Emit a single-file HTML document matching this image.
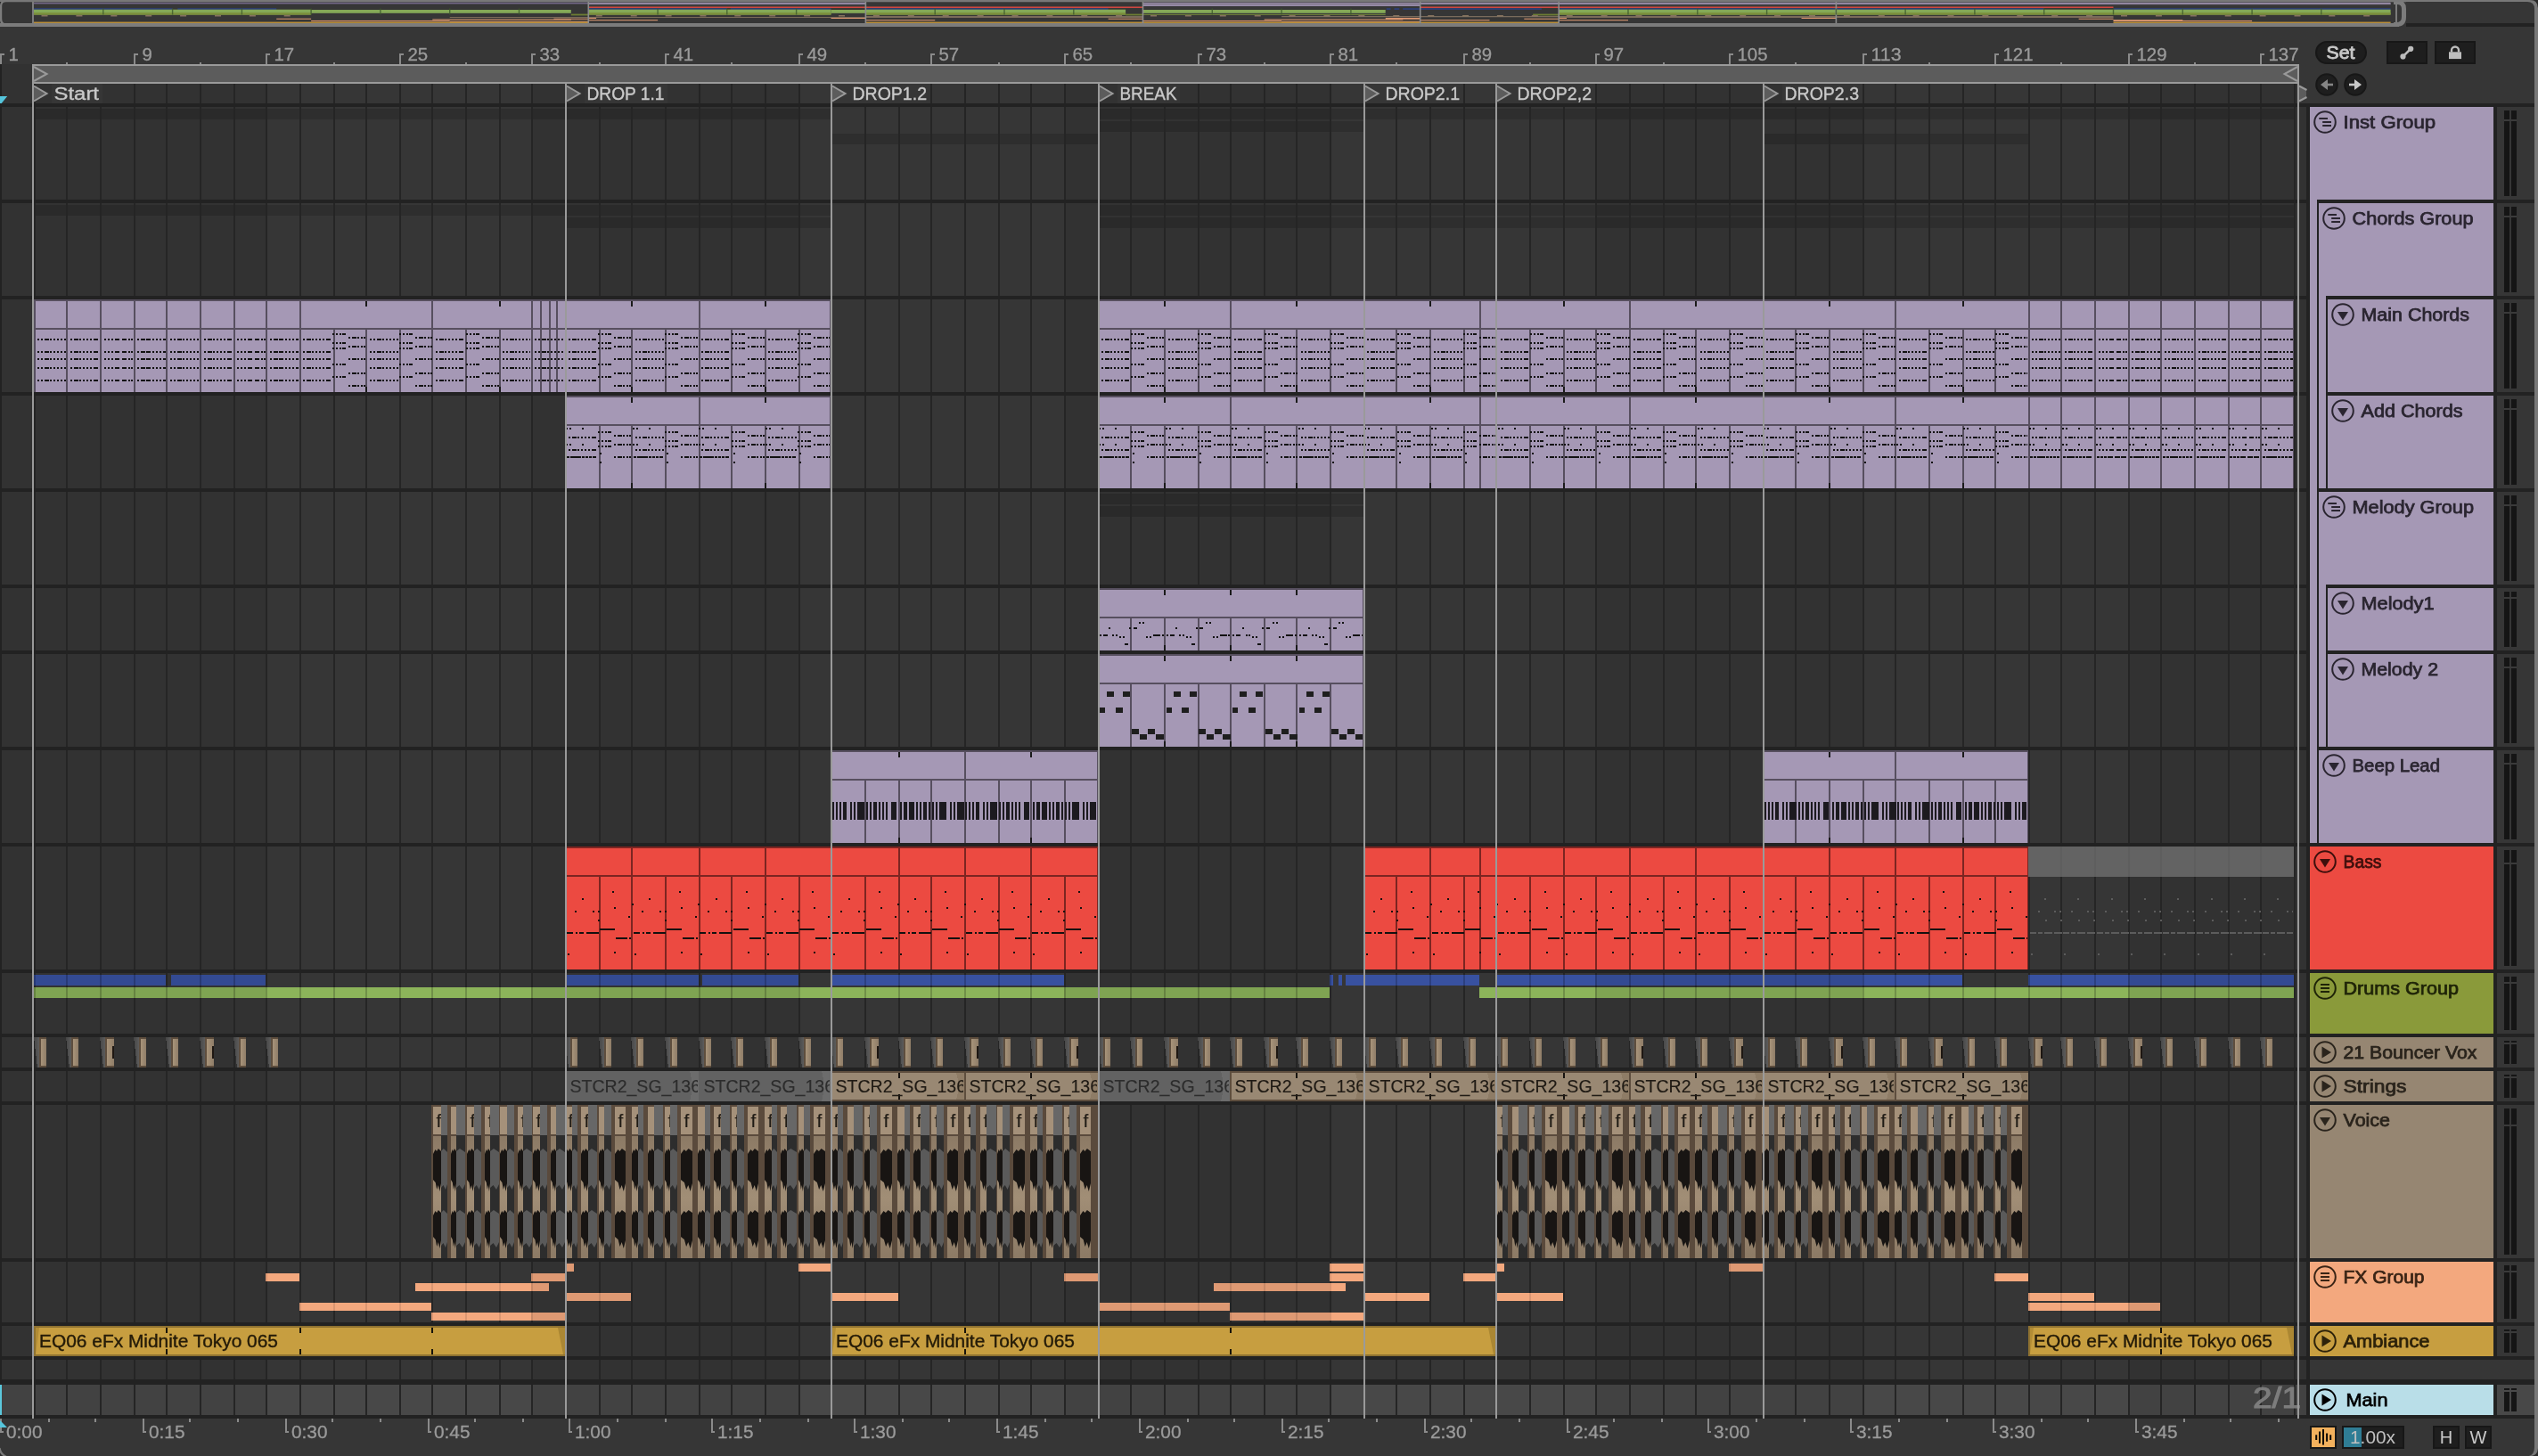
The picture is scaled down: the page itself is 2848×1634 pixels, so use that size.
<!DOCTYPE html>
<html><head><meta charset="utf-8"><title>Arrangement</title>
<style>html,body{margin:0;padding:0;background:#363636;overflow:hidden}svg{display:block;will-change:transform}text{font-family:"Liberation Sans",sans-serif}</style></head><body>
<svg width="2848" height="1634" viewBox="0 0 2848 1634" shape-rendering="crispEdges">
<rect x="0" y="0" width="2848" height="1634" fill="#363636"/>
<rect x="0" y="72" width="2592" height="1520" fill="#323232"/>
<rect x="0" y="72" width="2" height="1520" fill="#222222"/>
<rect x="2580" y="72" width="12" height="48" fill="#363636"/>
<rect x="298" y="94" width="298" height="1498" fill="#363636"/>
<rect x="896" y="94" width="298" height="1498" fill="#363636"/>
<rect x="1492" y="94" width="298" height="1498" fill="#363636"/>
<rect x="2090" y="94" width="298" height="1498" fill="#363636"/>
<rect x="2" y="1554" width="2586" height="34" fill="#424242"/>
<rect x="298" y="1554" width="298" height="34" fill="#484848"/>
<rect x="896" y="1554" width="298" height="34" fill="#484848"/>
<rect x="1492" y="1554" width="298" height="34" fill="#484848"/>
<rect x="2090" y="1554" width="298" height="34" fill="#484848"/>
<rect x="2802" y="1554" width="42" height="34" fill="#484848"/>
<rect x="0" y="116" width="2844" height="4" fill="#222222"/>
<rect x="0" y="224" width="2844" height="4" fill="#222222"/>
<rect x="0" y="332" width="2844" height="4" fill="#222222"/>
<rect x="0" y="440" width="2844" height="4" fill="#222222"/>
<rect x="0" y="548" width="2844" height="4" fill="#222222"/>
<rect x="0" y="656" width="2844" height="4" fill="#222222"/>
<rect x="0" y="730" width="2844" height="4" fill="#222222"/>
<rect x="0" y="838" width="2844" height="4" fill="#222222"/>
<rect x="0" y="946" width="2844" height="4" fill="#222222"/>
<rect x="0" y="1088" width="2844" height="4" fill="#222222"/>
<rect x="0" y="1160" width="2844" height="4" fill="#222222"/>
<rect x="0" y="1198" width="2844" height="4" fill="#222222"/>
<rect x="0" y="1236" width="2844" height="4" fill="#222222"/>
<rect x="0" y="1412" width="2844" height="4" fill="#222222"/>
<rect x="0" y="1484" width="2844" height="4" fill="#222222"/>
<rect x="0" y="1522" width="2844" height="4" fill="#222222"/>
<rect x="0" y="1548" width="2844" height="6" fill="#222222"/>
<rect x="0" y="1588" width="2844" height="4" fill="#222222"/>
<rect x="2588" y="120" width="4" height="1472" fill="#222222"/>
<rect x="2798" y="120" width="4" height="1406" fill="#222222"/>
<rect x="2798" y="1548" width="4" height="44" fill="#222222"/>
<rect x="0" y="1592" width="2848" height="42" fill="#363636"/>
<rect x="40" y="122" width="892" height="12" fill="#000" opacity="0.14"/>
<rect x="1234" y="122" width="1340" height="12" fill="#000" opacity="0.14"/>
<rect x="1234" y="136" width="296" height="12" fill="#000" opacity="0.14"/>
<rect x="934" y="150" width="298" height="12" fill="#000" opacity="0.14"/>
<rect x="1980" y="150" width="296" height="12" fill="#000" opacity="0.14"/>
<rect x="40" y="230" width="892" height="12" fill="#000" opacity="0.14"/>
<rect x="1234" y="230" width="1340" height="12" fill="#000" opacity="0.14"/>
<rect x="636" y="244" width="296" height="12" fill="#000" opacity="0.14"/>
<rect x="1234" y="244" width="1340" height="12" fill="#000" opacity="0.14"/>
<rect x="1234" y="554" width="296" height="12" fill="#000" opacity="0.14"/>
<rect x="1234" y="568" width="296" height="12" fill="#000" opacity="0.14"/>
<path d="M38 94V1592M74 94V1592M112 94V1592M150 94V1592M186 94V1592M224 94V1592M262 94V1592M298 94V1592M336 94V1592M374 94V1592M410 94V1592M448 94V1592M484 94V1592M522 94V1592M560 94V1592M596 94V1592M634 94V1592M672 94V1592M708 94V1592M746 94V1592M784 94V1592M820 94V1592M858 94V1592M896 94V1592M932 94V1592M970 94V1592M1008 94V1592M1044 94V1592M1082 94V1592M1120 94V1592M1156 94V1592M1194 94V1592M1232 94V1592M1268 94V1592M1306 94V1592M1344 94V1592M1380 94V1592M1418 94V1592M1454 94V1592M1492 94V1592M1530 94V1592M1566 94V1592M1604 94V1592M1642 94V1592M1678 94V1592M1716 94V1592M1754 94V1592M1790 94V1592M1828 94V1592M1866 94V1592M1902 94V1592M1940 94V1592M1978 94V1592M2014 94V1592M2052 94V1592M2090 94V1592M2126 94V1592M2164 94V1592M2202 94V1592M2238 94V1592M2276 94V1592M2312 94V1592M2350 94V1592M2388 94V1592M2424 94V1592M2462 94V1592M2500 94V1592M2536 94V1592M2574 94V1592" stroke="#252525" stroke-width="2" fill="none" transform="translate(1,0)"/>
<rect x="0" y="116" width="2592" height="4" fill="#222222"/>
<rect x="0" y="224" width="2592" height="4" fill="#222222"/>
<rect x="0" y="332" width="2592" height="4" fill="#222222"/>
<rect x="0" y="440" width="2592" height="4" fill="#222222"/>
<rect x="0" y="548" width="2592" height="4" fill="#222222"/>
<rect x="0" y="656" width="2592" height="4" fill="#222222"/>
<rect x="0" y="730" width="2592" height="4" fill="#222222"/>
<rect x="0" y="838" width="2592" height="4" fill="#222222"/>
<rect x="0" y="946" width="2592" height="4" fill="#222222"/>
<rect x="0" y="1088" width="2592" height="4" fill="#222222"/>
<rect x="0" y="1160" width="2592" height="4" fill="#222222"/>
<rect x="0" y="1198" width="2592" height="4" fill="#222222"/>
<rect x="0" y="1236" width="2592" height="4" fill="#222222"/>
<rect x="0" y="1412" width="2592" height="4" fill="#222222"/>
<rect x="0" y="1484" width="2592" height="4" fill="#222222"/>
<rect x="0" y="1522" width="2592" height="4" fill="#222222"/>
<rect x="0" y="1548" width="2592" height="6" fill="#222222"/>
<rect x="0" y="1588" width="2592" height="4" fill="#222222"/>
<rect x="38" y="336" width="894" height="104" fill="#a598b5"/>
<rect x="38" y="336" width="894" height="2" fill="#574f5f"/>
<rect x="38" y="368" width="894" height="2" fill="#574f5f"/>
<path d="M39 336V440M75 336V440M113 336V440M151 336V440M187 336V440M225 336V440M263 336V440M299 336V440M337 336V440M485 336V440M597 336V440M607 336V440M617 336V440M625 336V440M635 336V440M785 336V440" stroke="#574f5f" stroke-width="2" fill="none"/>
<rect x="931" y="336" width="1" height="104" fill="#574f5f"/>
<path d="M375 370V440M411 370V440M449 370V440M523 370V440M561 370V440M673 370V440M709 370V440M747 370V440M821 370V440M859 370V440M897 370V440" stroke="#574f5f" stroke-width="2" fill="none"/>
<path d="M411 338V344M561 338V344M709 338V344M859 338V344" stroke="#1a1a1a" stroke-width="2" fill="none"/>
<path d="M411 434V440M561 434V440M709 434V440M859 434V440" stroke="#1a1a1a" stroke-width="2" fill="none"/>
<rect x="1232" y="336" width="1342" height="104" fill="#a598b5"/>
<rect x="1232" y="336" width="1342" height="2" fill="#574f5f"/>
<rect x="1232" y="368" width="1342" height="2" fill="#574f5f"/>
<path d="M1233 336V440M1381 336V440M1531 336V440M1661 336V440M1679 336V440M1829 336V440M1979 336V440M2127 336V440M2277 336V440M2313 336V440M2351 336V440M2389 336V440M2425 336V440M2463 336V440M2501 336V440M2537 336V440" stroke="#574f5f" stroke-width="2" fill="none"/>
<rect x="2573" y="336" width="1" height="104" fill="#574f5f"/>
<path d="M1269 370V440M1307 370V440M1345 370V440M1419 370V440M1455 370V440M1493 370V440M1567 370V440M1605 370V440M1643 370V440M1717 370V440M1755 370V440M1791 370V440M1867 370V440M1903 370V440M1941 370V440M2015 370V440M2053 370V440M2091 370V440M2165 370V440M2203 370V440M2239 370V440" stroke="#574f5f" stroke-width="2" fill="none"/>
<path d="M1307 338V344M1455 338V344M1605 338V344M1755 338V344M1903 338V344M2053 338V344M2203 338V344" stroke="#1a1a1a" stroke-width="2" fill="none"/>
<path d="M1307 434V440M1455 434V440M1605 434V440M1755 434V440M1903 434V440M2053 434V440M2203 434V440" stroke="#1a1a1a" stroke-width="2" fill="none"/>
<path d="M38 381H335" stroke="#121212" stroke-width="2" stroke-dasharray="0 4 2 2 2 2 5 1 2 2 2 2 2 2 2 2 2 5.306 2 2 5 1 2 2 2 2 2 2 2 2 5 6.306 2 2 2 2 2 2 5 3 5 2 2 1 2 5.306 2 2 5 1 5 2 2 2 2 2 2 2 3 1.306" fill="none"/>
<path d="M38 395H335" stroke="#121212" stroke-width="2" stroke-dasharray="0 4 2 2 2 2 5 1 2 2 2 2 2 2 2 2 2 5.306 2 2 5 1 2 2 2 2 2 2 2 2 5 6.306 2 2 2 2 2 2 5 3 5 2 2 1 2 5.306 2 2 5 1 5 2 2 2 2 2 2 2 3 1.306" fill="none"/>
<path d="M38 403H335" stroke="#121212" stroke-width="2" stroke-dasharray="0 4 2 2 2 2 5 1 2 2 2 2 2 2 2 2 2 5.306 2 2 5 1 2 2 2 2 2 2 2 2 5 6.306 2 2 2 2 2 2 5 3 5 2 2 1 2 5.306 2 2 5 1 5 2 2 2 2 2 2 2 3 1.306" fill="none"/>
<path d="M38 413H335" stroke="#121212" stroke-width="2" stroke-dasharray="0 4 2 2 2 2 5 1 2 2 2 2 2 2 2 2 2 5.306 2 2 5 1 2 2 2 2 2 2 2 2 5 6.306 2 2 2 2 2 2 5 3 5 2 2 1 2 5.306 2 2 5 1 5 2 2 2 2 2 2 2 3 1.306" fill="none"/>
<path d="M38 427H335" stroke="#121212" stroke-width="2" stroke-dasharray="0 4 2 2 2 2 5 1 2 2 2 2 2 2 2 2 2 5.306 2 2 5 1 2 2 2 2 2 2 2 2 5 6.306 2 2 2 2 2 2 5 3 5 2 2 1 2 5.306 2 2 5 1 5 2 2 2 2 2 2 2 3 1.306" fill="none"/>
<path d="M336 381H595" stroke="#121212" stroke-width="2" stroke-dasharray="0 4 2 2 5 1 2 2 2 2 2 2 2 2 5 43.612 2 2 2 2 5 1 2 2 2 2 2 2 2 2 2 38.612" fill="none"/>
<path d="M336 395H595" stroke="#121212" stroke-width="2" stroke-dasharray="0 4 2 2 5 1 2 2 2 2 2 2 2 2 5 43.612 2 2 2 2 5 1 2 2 2 2 2 2 2 2 2 38.612" fill="none"/>
<path d="M336 403H595" stroke="#121212" stroke-width="2" stroke-dasharray="0 4 2 2 5 1 2 2 2 2 2 2 2 2 5 43.612 2 2 2 2 5 1 2 2 2 2 2 2 2 2 2 38.612" fill="none"/>
<path d="M336 413H595" stroke="#121212" stroke-width="2" stroke-dasharray="0 4 2 2 5 1 2 2 2 2 2 2 2 2 5 43.612 2 2 2 2 5 1 2 2 2 2 2 2 2 2 2 38.612" fill="none"/>
<path d="M336 427H595" stroke="#121212" stroke-width="2" stroke-dasharray="0 4 2 2 5 1 2 2 2 2 2 2 2 2 5 43.612 2 2 2 2 5 1 2 2 2 2 2 2 2 2 2 38.612" fill="none"/>
<path d="M336 375H595" stroke="#121212" stroke-width="2" stroke-dasharray="0 37.306 2 2 2 2 2 1 4 22.306" fill="none"/>
<path d="M336 385H595" stroke="#121212" stroke-width="2" stroke-dasharray="0 37.306 2 2 2 2 2 1 4 22.306" fill="none"/>
<path d="M336 391H595" stroke="#121212" stroke-width="2" stroke-dasharray="0 37.306 2 2 2 2 2 1 4 22.306" fill="none"/>
<path d="M336 409H595" stroke="#121212" stroke-width="2" stroke-dasharray="0 37.306 2 2 2 2 2 1 4 22.306" fill="none"/>
<path d="M336 423H595" stroke="#121212" stroke-width="2" stroke-dasharray="0 37.306 2 2 2 2 2 1 4 22.306" fill="none"/>
<path d="M336 379H595" stroke="#121212" stroke-width="2" stroke-dasharray="0 55.306 2 2 5 1 2 2 2 1 2 0.306" fill="none"/>
<path d="M336 389H595" stroke="#121212" stroke-width="2" stroke-dasharray="0 55.306 2 2 5 1 2 2 2 1 2 0.306" fill="none"/>
<path d="M336 403H595" stroke="#121212" stroke-width="2" stroke-dasharray="0 55.306 2 2 5 1 2 2 2 1 2 0.306" fill="none"/>
<path d="M336 419H595" stroke="#121212" stroke-width="2" stroke-dasharray="0 55.306 2 2 5 1 2 2 2 1 2 0.306" fill="none"/>
<path d="M336 433H595" stroke="#121212" stroke-width="2" stroke-dasharray="0 55.306 2 2 5 1 2 2 2 1 2 0.306" fill="none"/>
<path d="M596 381H633" stroke="#121212" stroke-width="2" stroke-dasharray="0 4 2 2 2 2 5 1 2 2 2 2 2 2 2 2 2 5.306 2 2 5 1 2 2 2 2 2 2 2 2 5 6.306 2 2 2 2 2 2 5 3 5 2 2 1 2 5.306 2 2 5 1 5 2 2 2 2 2 2 2 3 1.306" fill="none"/>
<path d="M596 395H633" stroke="#121212" stroke-width="2" stroke-dasharray="0 4 2 2 2 2 5 1 2 2 2 2 2 2 2 2 2 5.306 2 2 5 1 2 2 2 2 2 2 2 2 5 6.306 2 2 2 2 2 2 5 3 5 2 2 1 2 5.306 2 2 5 1 5 2 2 2 2 2 2 2 3 1.306" fill="none"/>
<path d="M596 403H633" stroke="#121212" stroke-width="2" stroke-dasharray="0 4 2 2 2 2 5 1 2 2 2 2 2 2 2 2 2 5.306 2 2 5 1 2 2 2 2 2 2 2 2 5 6.306 2 2 2 2 2 2 5 3 5 2 2 1 2 5.306 2 2 5 1 5 2 2 2 2 2 2 2 3 1.306" fill="none"/>
<path d="M596 413H633" stroke="#121212" stroke-width="2" stroke-dasharray="0 4 2 2 2 2 5 1 2 2 2 2 2 2 2 2 2 5.306 2 2 5 1 2 2 2 2 2 2 2 2 5 6.306 2 2 2 2 2 2 5 3 5 2 2 1 2 5.306 2 2 5 1 5 2 2 2 2 2 2 2 3 1.306" fill="none"/>
<path d="M596 427H633" stroke="#121212" stroke-width="2" stroke-dasharray="0 4 2 2 2 2 5 1 2 2 2 2 2 2 2 2 2 5.306 2 2 5 1 2 2 2 2 2 2 2 2 5 6.306 2 2 2 2 2 2 5 3 5 2 2 1 2 5.306 2 2 5 1 5 2 2 2 2 2 2 2 3 1.306" fill="none"/>
<path d="M634 381H931" stroke="#121212" stroke-width="2" stroke-dasharray="0 4 2 2 5 1 2 2 2 2 2 2 2 2 5 43.612 2 2 2 2 5 1 2 2 2 2 2 2 2 2 2 38.612" fill="none"/>
<path d="M634 395H931" stroke="#121212" stroke-width="2" stroke-dasharray="0 4 2 2 5 1 2 2 2 2 2 2 2 2 5 43.612 2 2 2 2 5 1 2 2 2 2 2 2 2 2 2 38.612" fill="none"/>
<path d="M634 403H931" stroke="#121212" stroke-width="2" stroke-dasharray="0 4 2 2 5 1 2 2 2 2 2 2 2 2 5 43.612 2 2 2 2 5 1 2 2 2 2 2 2 2 2 2 38.612" fill="none"/>
<path d="M634 413H931" stroke="#121212" stroke-width="2" stroke-dasharray="0 4 2 2 5 1 2 2 2 2 2 2 2 2 5 43.612 2 2 2 2 5 1 2 2 2 2 2 2 2 2 2 38.612" fill="none"/>
<path d="M634 427H931" stroke="#121212" stroke-width="2" stroke-dasharray="0 4 2 2 5 1 2 2 2 2 2 2 2 2 5 43.612 2 2 2 2 5 1 2 2 2 2 2 2 2 2 2 38.612" fill="none"/>
<path d="M634 375H931" stroke="#121212" stroke-width="2" stroke-dasharray="0 37.306 2 2 2 2 2 1 4 22.306" fill="none"/>
<path d="M634 385H931" stroke="#121212" stroke-width="2" stroke-dasharray="0 37.306 2 2 2 2 2 1 4 22.306" fill="none"/>
<path d="M634 391H931" stroke="#121212" stroke-width="2" stroke-dasharray="0 37.306 2 2 2 2 2 1 4 22.306" fill="none"/>
<path d="M634 409H931" stroke="#121212" stroke-width="2" stroke-dasharray="0 37.306 2 2 2 2 2 1 4 22.306" fill="none"/>
<path d="M634 423H931" stroke="#121212" stroke-width="2" stroke-dasharray="0 37.306 2 2 2 2 2 1 4 22.306" fill="none"/>
<path d="M634 379H931" stroke="#121212" stroke-width="2" stroke-dasharray="0 55.306 2 2 5 1 2 2 2 1 2 0.306" fill="none"/>
<path d="M634 389H931" stroke="#121212" stroke-width="2" stroke-dasharray="0 55.306 2 2 5 1 2 2 2 1 2 0.306" fill="none"/>
<path d="M634 403H931" stroke="#121212" stroke-width="2" stroke-dasharray="0 55.306 2 2 5 1 2 2 2 1 2 0.306" fill="none"/>
<path d="M634 419H931" stroke="#121212" stroke-width="2" stroke-dasharray="0 55.306 2 2 5 1 2 2 2 1 2 0.306" fill="none"/>
<path d="M634 433H931" stroke="#121212" stroke-width="2" stroke-dasharray="0 55.306 2 2 5 1 2 2 2 1 2 0.306" fill="none"/>
<path d="M1232 381H2275" stroke="#121212" stroke-width="2" stroke-dasharray="0 4 2 2 5 1 2 2 2 2 2 2 2 2 5 43.612 2 2 2 2 5 1 2 2 2 2 2 2 2 2 2 38.612" fill="none"/>
<path d="M1232 395H2275" stroke="#121212" stroke-width="2" stroke-dasharray="0 4 2 2 5 1 2 2 2 2 2 2 2 2 5 43.612 2 2 2 2 5 1 2 2 2 2 2 2 2 2 2 38.612" fill="none"/>
<path d="M1232 403H2275" stroke="#121212" stroke-width="2" stroke-dasharray="0 4 2 2 5 1 2 2 2 2 2 2 2 2 5 43.612 2 2 2 2 5 1 2 2 2 2 2 2 2 2 2 38.612" fill="none"/>
<path d="M1232 413H2275" stroke="#121212" stroke-width="2" stroke-dasharray="0 4 2 2 5 1 2 2 2 2 2 2 2 2 5 43.612 2 2 2 2 5 1 2 2 2 2 2 2 2 2 2 38.612" fill="none"/>
<path d="M1232 427H2275" stroke="#121212" stroke-width="2" stroke-dasharray="0 4 2 2 5 1 2 2 2 2 2 2 2 2 5 43.612 2 2 2 2 5 1 2 2 2 2 2 2 2 2 2 38.612" fill="none"/>
<path d="M1232 375H2275" stroke="#121212" stroke-width="2" stroke-dasharray="0 37.306 2 2 2 2 2 1 4 22.306" fill="none"/>
<path d="M1232 385H2275" stroke="#121212" stroke-width="2" stroke-dasharray="0 37.306 2 2 2 2 2 1 4 22.306" fill="none"/>
<path d="M1232 391H2275" stroke="#121212" stroke-width="2" stroke-dasharray="0 37.306 2 2 2 2 2 1 4 22.306" fill="none"/>
<path d="M1232 409H2275" stroke="#121212" stroke-width="2" stroke-dasharray="0 37.306 2 2 2 2 2 1 4 22.306" fill="none"/>
<path d="M1232 423H2275" stroke="#121212" stroke-width="2" stroke-dasharray="0 37.306 2 2 2 2 2 1 4 22.306" fill="none"/>
<path d="M1232 379H2275" stroke="#121212" stroke-width="2" stroke-dasharray="0 55.306 2 2 5 1 2 2 2 1 2 0.306" fill="none"/>
<path d="M1232 389H2275" stroke="#121212" stroke-width="2" stroke-dasharray="0 55.306 2 2 5 1 2 2 2 1 2 0.306" fill="none"/>
<path d="M1232 403H2275" stroke="#121212" stroke-width="2" stroke-dasharray="0 55.306 2 2 5 1 2 2 2 1 2 0.306" fill="none"/>
<path d="M1232 419H2275" stroke="#121212" stroke-width="2" stroke-dasharray="0 55.306 2 2 5 1 2 2 2 1 2 0.306" fill="none"/>
<path d="M1232 433H2275" stroke="#121212" stroke-width="2" stroke-dasharray="0 55.306 2 2 5 1 2 2 2 1 2 0.306" fill="none"/>
<path d="M2276 381H2573" stroke="#121212" stroke-width="2" stroke-dasharray="0 4 2 2 2 2 5 1 2 2 2 2 2 2 2 2 2 5.306 2 2 5 1 2 2 2 2 2 2 2 2 5 6.306 2 2 2 2 2 2 5 3 5 2 2 1 2 5.306 2 2 5 1 5 2 2 2 2 2 2 2 3 1.306" fill="none"/>
<path d="M2276 395H2573" stroke="#121212" stroke-width="2" stroke-dasharray="0 4 2 2 2 2 5 1 2 2 2 2 2 2 2 2 2 5.306 2 2 5 1 2 2 2 2 2 2 2 2 5 6.306 2 2 2 2 2 2 5 3 5 2 2 1 2 5.306 2 2 5 1 5 2 2 2 2 2 2 2 3 1.306" fill="none"/>
<path d="M2276 403H2573" stroke="#121212" stroke-width="2" stroke-dasharray="0 4 2 2 2 2 5 1 2 2 2 2 2 2 2 2 2 5.306 2 2 5 1 2 2 2 2 2 2 2 2 5 6.306 2 2 2 2 2 2 5 3 5 2 2 1 2 5.306 2 2 5 1 5 2 2 2 2 2 2 2 3 1.306" fill="none"/>
<path d="M2276 413H2573" stroke="#121212" stroke-width="2" stroke-dasharray="0 4 2 2 2 2 5 1 2 2 2 2 2 2 2 2 2 5.306 2 2 5 1 2 2 2 2 2 2 2 2 5 6.306 2 2 2 2 2 2 5 3 5 2 2 1 2 5.306 2 2 5 1 5 2 2 2 2 2 2 2 3 1.306" fill="none"/>
<path d="M2276 427H2573" stroke="#121212" stroke-width="2" stroke-dasharray="0 4 2 2 2 2 5 1 2 2 2 2 2 2 2 2 2 5.306 2 2 5 1 2 2 2 2 2 2 2 2 5 6.306 2 2 2 2 2 2 5 3 5 2 2 1 2 5.306 2 2 5 1 5 2 2 2 2 2 2 2 3 1.306" fill="none"/>
<rect x="634" y="444" width="298" height="104" fill="#a598b5"/>
<rect x="634" y="444" width="298" height="2" fill="#574f5f"/>
<rect x="634" y="476" width="298" height="2" fill="#574f5f"/>
<path d="M635 444V548M785 444V548" stroke="#574f5f" stroke-width="2" fill="none"/>
<rect x="931" y="444" width="1" height="104" fill="#574f5f"/>
<path d="M673 478V548M709 478V548M747 478V548M821 478V548M859 478V548M897 478V548" stroke="#574f5f" stroke-width="2" fill="none"/>
<path d="M709 446V452M859 446V452" stroke="#1a1a1a" stroke-width="2" fill="none"/>
<path d="M709 542V548M859 542V548" stroke="#1a1a1a" stroke-width="2" fill="none"/>
<rect x="1232" y="444" width="1342" height="104" fill="#a598b5"/>
<rect x="1232" y="444" width="1342" height="2" fill="#574f5f"/>
<rect x="1232" y="476" width="1342" height="2" fill="#574f5f"/>
<path d="M1233 444V548M1381 444V548M1531 444V548M1661 444V548M1679 444V548M1829 444V548M1979 444V548M2127 444V548M2277 444V548M2313 444V548M2351 444V548M2389 444V548M2425 444V548M2463 444V548M2501 444V548M2537 444V548" stroke="#574f5f" stroke-width="2" fill="none"/>
<rect x="2573" y="444" width="1" height="104" fill="#574f5f"/>
<path d="M1269 478V548M1307 478V548M1345 478V548M1419 478V548M1455 478V548M1493 478V548M1567 478V548M1605 478V548M1643 478V548M1717 478V548M1755 478V548M1791 478V548M1867 478V548M1903 478V548M1941 478V548M2015 478V548M2053 478V548M2091 478V548M2165 478V548M2203 478V548M2239 478V548" stroke="#574f5f" stroke-width="2" fill="none"/>
<path d="M1307 446V452M1455 446V452M1605 446V452M1755 446V452M1903 446V452M2053 446V452M2203 446V452" stroke="#1a1a1a" stroke-width="2" fill="none"/>
<path d="M1307 542V548M1455 542V548M1605 542V548M1755 542V548M1903 542V548M2053 542V548M2203 542V548" stroke="#1a1a1a" stroke-width="2" fill="none"/>
<path d="M634 481H931" stroke="#121212" stroke-width="2" stroke-dasharray="0 1 2 2 2 12 2 53.612" fill="none"/>
<path d="M634 499H931" stroke="#121212" stroke-width="2" stroke-dasharray="0 1 2 2 2 12 2 53.612" fill="none"/>
<path d="M634 491H931" stroke="#121212" stroke-width="2" stroke-dasharray="0 4 2 2 5 1 2 2 2 2 2 2 2 2 5 43.612 2 2 2 2 5 1 2 2 2 2 2 2 2 2 2 38.612" fill="none"/>
<path d="M634 505H931" stroke="#121212" stroke-width="2" stroke-dasharray="0 4 2 2 5 1 2 2 2 2 2 2 2 2 5 43.612 2 2 2 2 5 1 2 2 2 2 2 2 2 2 2 38.612" fill="none"/>
<path d="M634 513H931" stroke="#121212" stroke-width="2" stroke-dasharray="0 2 3 1 6 0 6 1 3 1 3 1 3 1 4 20.306 2 2 5 1 2 2 2 1 2 0.306" fill="none"/>
<path d="M634 485H931" stroke="#121212" stroke-width="2" stroke-dasharray="0 37.306 2 2 2 2 2 1 4 22.306" fill="none"/>
<path d="M634 495H931" stroke="#121212" stroke-width="2" stroke-dasharray="0 37.306 2 2 2 2 2 1 4 22.306" fill="none"/>
<path d="M634 501H931" stroke="#121212" stroke-width="2" stroke-dasharray="0 37.306 2 2 2 2 2 1 4 22.306" fill="none"/>
<path d="M634 489H931" stroke="#121212" stroke-width="2" stroke-dasharray="0 55.306 2 2 5 1 2 2 2 1 2 0.306" fill="none"/>
<path d="M634 499H931" stroke="#121212" stroke-width="2" stroke-dasharray="0 55.306 2 2 5 1 2 2 2 1 2 0.306" fill="none"/>
<path d="M634 509H931" stroke="#121212" stroke-width="2" stroke-dasharray="0 39.306 2 33.306" fill="none"/>
<path d="M634 519H931" stroke="#121212" stroke-width="2" stroke-dasharray="0 39.306 2 33.306" fill="none"/>
<path d="M1232 481H2275" stroke="#121212" stroke-width="2" stroke-dasharray="0 1 2 2 2 12 2 53.612" fill="none"/>
<path d="M1232 499H2275" stroke="#121212" stroke-width="2" stroke-dasharray="0 1 2 2 2 12 2 53.612" fill="none"/>
<path d="M1232 491H2275" stroke="#121212" stroke-width="2" stroke-dasharray="0 4 2 2 5 1 2 2 2 2 2 2 2 2 5 43.612 2 2 2 2 5 1 2 2 2 2 2 2 2 2 2 38.612" fill="none"/>
<path d="M1232 505H2275" stroke="#121212" stroke-width="2" stroke-dasharray="0 4 2 2 5 1 2 2 2 2 2 2 2 2 5 43.612 2 2 2 2 5 1 2 2 2 2 2 2 2 2 2 38.612" fill="none"/>
<path d="M1232 513H2275" stroke="#121212" stroke-width="2" stroke-dasharray="0 2 3 1 6 0 6 1 3 1 3 1 3 1 4 20.306 2 2 5 1 2 2 2 1 2 0.306" fill="none"/>
<path d="M1232 485H2275" stroke="#121212" stroke-width="2" stroke-dasharray="0 37.306 2 2 2 2 2 1 4 22.306" fill="none"/>
<path d="M1232 495H2275" stroke="#121212" stroke-width="2" stroke-dasharray="0 37.306 2 2 2 2 2 1 4 22.306" fill="none"/>
<path d="M1232 501H2275" stroke="#121212" stroke-width="2" stroke-dasharray="0 37.306 2 2 2 2 2 1 4 22.306" fill="none"/>
<path d="M1232 489H2275" stroke="#121212" stroke-width="2" stroke-dasharray="0 55.306 2 2 5 1 2 2 2 1 2 0.306" fill="none"/>
<path d="M1232 499H2275" stroke="#121212" stroke-width="2" stroke-dasharray="0 55.306 2 2 5 1 2 2 2 1 2 0.306" fill="none"/>
<path d="M1232 509H2275" stroke="#121212" stroke-width="2" stroke-dasharray="0 39.306 2 33.306" fill="none"/>
<path d="M1232 519H2275" stroke="#121212" stroke-width="2" stroke-dasharray="0 39.306 2 33.306" fill="none"/>
<path d="M2276 481H2573" stroke="#121212" stroke-width="2" stroke-dasharray="0 1 2 2 2 12 2 16.306" fill="none"/>
<path d="M2276 499H2573" stroke="#121212" stroke-width="2" stroke-dasharray="0 1 2 2 2 12 2 16.306" fill="none"/>
<path d="M2276 491H2573" stroke="#121212" stroke-width="2" stroke-dasharray="0 4 2 2 2 2 5 1 2 2 2 2 2 2 2 2 2 5.306 2 2 5 1 2 2 2 2 2 2 2 2 5 6.306 2 2 2 2 2 2 5 3 5 2 2 1 2 5.306 2 2 5 1 5 2 2 2 2 2 2 2 3 1.306" fill="none"/>
<path d="M2276 505H2573" stroke="#121212" stroke-width="2" stroke-dasharray="0 4 2 2 2 2 5 1 2 2 2 2 2 2 2 2 2 5.306 2 2 5 1 2 2 2 2 2 2 2 2 5 6.306 2 2 2 2 2 2 5 3 5 2 2 1 2 5.306 2 2 5 1 5 2 2 2 2 2 2 2 3 1.306" fill="none"/>
<path d="M2276 513H2573" stroke="#121212" stroke-width="2" stroke-dasharray="0 2 3 1 3 1 6 0 3 1 3 1 3 1 3 1 3 4.306 3 1 6 0 3 1 3 1 3 1 3 1 6 5.306 3 1 3 1 3 1 6 2 6 1 3 0 3 4.306 3 1 6 0 6 1 3 1 3 1 3 1 4 2.306" fill="none"/>
<rect x="1232" y="660" width="298" height="70" fill="#a598b5"/>
<rect x="1232" y="660" width="298" height="2" fill="#574f5f"/>
<rect x="1232" y="692" width="298" height="2" fill="#574f5f"/>
<path d="M1233 660V730" stroke="#574f5f" stroke-width="2" fill="none"/>
<rect x="1529" y="660" width="1" height="70" fill="#574f5f"/>
<path d="M1269 694V730M1307 694V730M1345 694V730M1381 694V730M1419 694V730M1455 694V730M1493 694V730" stroke="#574f5f" stroke-width="2" fill="none"/>
<path d="M1307 662V668M1381 662V668M1455 662V668" stroke="#1a1a1a" stroke-width="2" fill="none"/>
<path d="M1307 724V730M1381 724V730M1455 724V730" stroke="#1a1a1a" stroke-width="2" fill="none"/>
<path d="M1234 699H1529" stroke="#121212" stroke-width="2" stroke-dasharray="0 44.3 2 2 2 24.312" fill="none"/>
<path d="M1234 705H1529" stroke="#121212" stroke-width="2" stroke-dasharray="0 10.4 2 20.5 2 2.9 4 32.812" fill="none"/>
<path d="M1234 713H1529" stroke="#121212" stroke-width="2" stroke-dasharray="2 2 5 5.3 2 1.7 2 40 8 1.8 2 2.812" fill="none"/>
<path d="M1234 715H1529" stroke="#121212" stroke-width="2" stroke-dasharray="0 22.2 2 1.8 2 24.2 2 1.9 2 16.512" fill="none"/>
<path d="M1234 723H1529" stroke="#121212" stroke-width="2" stroke-dasharray="0 28 4 42.612" fill="none"/>
<rect x="1232" y="734" width="298" height="104" fill="#a598b5"/>
<rect x="1232" y="734" width="298" height="2" fill="#574f5f"/>
<rect x="1232" y="766" width="298" height="2" fill="#574f5f"/>
<path d="M1233 734V838" stroke="#574f5f" stroke-width="2" fill="none"/>
<rect x="1529" y="734" width="1" height="104" fill="#574f5f"/>
<path d="M1269 768V838M1307 768V838M1345 768V838M1381 768V838M1419 768V838M1455 768V838M1493 768V838" stroke="#574f5f" stroke-width="2" fill="none"/>
<path d="M1307 736V742M1381 736V742M1455 736V742" stroke="#1a1a1a" stroke-width="2" fill="none"/>
<path d="M1307 832V838M1381 832V838M1455 832V838" stroke="#1a1a1a" stroke-width="2" fill="none"/>
<path d="M1234 779H1529" stroke="#1e1e1e" stroke-width="6" stroke-dasharray="0 8 8 10 8 40.612" fill="none"/>
<path d="M1234 797H1529" stroke="#1e1e1e" stroke-width="6" stroke-dasharray="6 11.6 8 49.012" fill="none"/>
<path d="M1234 821H1529" stroke="#1e1e1e" stroke-width="6" stroke-dasharray="0 36.306 8 10 8 12.306" fill="none"/>
<path d="M1234 827H1529" stroke="#1e1e1e" stroke-width="6" stroke-dasharray="0 45.306 8 10 9 2.306" fill="none"/>
<rect x="932" y="842" width="300" height="104" fill="#a598b5"/>
<rect x="932" y="842" width="300" height="2" fill="#574f5f"/>
<rect x="932" y="874" width="300" height="2" fill="#574f5f"/>
<path d="M933 842V946M1083 842V946" stroke="#574f5f" stroke-width="2" fill="none"/>
<rect x="1231" y="842" width="1" height="104" fill="#574f5f"/>
<path d="M971 876V946M1009 876V946M1045 876V946M1121 876V946M1157 876V946M1195 876V946" stroke="#574f5f" stroke-width="2" fill="none"/>
<path d="M1009 844V850M1157 844V850" stroke="#1a1a1a" stroke-width="2" fill="none"/>
<path d="M1009 940V946M1157 940V946" stroke="#1a1a1a" stroke-width="2" fill="none"/>
<path d="M934 910H1230" stroke="#1c1a1f" stroke-width="20" stroke-dasharray="2 2 2 2 2 2 4 4 2 2 2 2 8 2 2 2 2 2 4 2 2 2 2 2 2 4 6 4 2 2 4 2 6 2 2 2 2 2 4 2 2 2 2 2 2 2 8 4 2 2 2 2 8 1.224" fill="none"/>
<rect x="1978" y="842" width="298" height="104" fill="#a598b5"/>
<rect x="1978" y="842" width="298" height="2" fill="#574f5f"/>
<rect x="1978" y="874" width="298" height="2" fill="#574f5f"/>
<path d="M1979 842V946M2127 842V946" stroke="#574f5f" stroke-width="2" fill="none"/>
<rect x="2275" y="842" width="1" height="104" fill="#574f5f"/>
<path d="M2015 876V946M2053 876V946M2091 876V946M2165 876V946M2203 876V946M2239 876V946" stroke="#574f5f" stroke-width="2" fill="none"/>
<path d="M2053 844V850M2203 844V850" stroke="#1a1a1a" stroke-width="2" fill="none"/>
<path d="M2053 940V946M2203 940V946" stroke="#1a1a1a" stroke-width="2" fill="none"/>
<path d="M1980 910H2274" stroke="#1c1a1f" stroke-width="20" stroke-dasharray="2 2 2 2 2 2 4 4 2 2 2 2 8 2 2 2 2 2 4 2 2 2 2 2 2 4 6 4 2 2 4 2 6 2 2 2 2 2 4 2 2 2 2 2 2 2 8 4 2 2 2 2 8 1.224" fill="none"/>
<rect x="634" y="950" width="598" height="138" fill="#ec4a41"/>
<rect x="634" y="950" width="598" height="2" fill="#7c2521"/>
<rect x="634" y="982" width="598" height="2" fill="#7c2521"/>
<path d="M635 950V1088M709 950V1088M785 950V1088M859 950V1088M933 950V1088M1009 950V1088M1083 950V1088M1157 950V1088" stroke="#7c2521" stroke-width="2" fill="none"/>
<rect x="1231" y="950" width="1" height="138" fill="#7c2521"/>
<path d="M673 984V1088M747 984V1088M821 984V1088M897 984V1088M971 984V1088M1045 984V1088M1121 984V1088M1195 984V1088" stroke="#7c2521" stroke-width="2" fill="none"/>
<rect x="1530" y="950" width="746" height="138" fill="#ec4a41"/>
<rect x="1530" y="950" width="746" height="2" fill="#7c2521"/>
<rect x="1530" y="982" width="746" height="2" fill="#7c2521"/>
<path d="M1531 950V1088M1605 950V1088M1661 950V1088M1679 950V1088M1755 950V1088M1829 950V1088M1903 950V1088M1979 950V1088M2053 950V1088M2127 950V1088M2203 950V1088" stroke="#7c2521" stroke-width="2" fill="none"/>
<rect x="2275" y="950" width="1" height="138" fill="#7c2521"/>
<path d="M1567 984V1088M1643 984V1088M1717 984V1088M1791 984V1088M1867 984V1088M1941 984V1088M2015 984V1088M2091 984V1088M2165 984V1088M2239 984V1088" stroke="#7c2521" stroke-width="2" fill="none"/>
<path d="M636 1023H1231" stroke="#14100f" stroke-width="2" stroke-dasharray="0 9 2 18 2 4 2 37.612" fill="none"/>
<path d="M636 1033H1231" stroke="#14100f" stroke-width="2" stroke-dasharray="0 35 2 37.612" fill="none"/>
<path d="M636 1047H1231" stroke="#14100f" stroke-width="2" stroke-dasharray="7 3 2 2 5 3 14 38.612" fill="none"/>
<path d="M636 1071H1231" stroke="#14100f" stroke-width="2" stroke-dasharray="0 1 2 71.612" fill="none"/>
<path d="M636 1001H1231" stroke="#14100f" stroke-width="2" stroke-dasharray="0 51.306 2 21.306" fill="none"/>
<path d="M636 1019H1231" stroke="#14100f" stroke-width="2" stroke-dasharray="0 53.306 2 19.306" fill="none"/>
<path d="M636 1029H1231" stroke="#14100f" stroke-width="2" stroke-dasharray="0 69.306 2 3.306" fill="none"/>
<path d="M636 1009H1231" stroke="#14100f" stroke-width="2" stroke-dasharray="0 17.306 2 55.306" fill="none"/>
<path d="M636 1043H1231" stroke="#14100f" stroke-width="2" stroke-dasharray="0 37.306 17 20.306" fill="none"/>
<path d="M636 1053H1231" stroke="#14100f" stroke-width="2" stroke-dasharray="0 55.306 13 2 2 2.306" fill="none"/>
<path d="M636 1069H1231" stroke="#14100f" stroke-width="2" stroke-dasharray="0 53.306 2 19.306" fill="none"/>
<path d="M636 1015H1231" stroke="#14100f" stroke-width="2" stroke-dasharray="0 72.612 2 0" fill="none"/>
<path d="M1532 1023H2275" stroke="#14100f" stroke-width="2" stroke-dasharray="0 9 2 18 2 4 2 37.612" fill="none"/>
<path d="M1532 1033H2275" stroke="#14100f" stroke-width="2" stroke-dasharray="0 35 2 37.612" fill="none"/>
<path d="M1532 1047H2275" stroke="#14100f" stroke-width="2" stroke-dasharray="7 3 2 2 5 3 14 38.612" fill="none"/>
<path d="M1532 1071H2275" stroke="#14100f" stroke-width="2" stroke-dasharray="0 1 2 71.612" fill="none"/>
<path d="M1532 1001H2275" stroke="#14100f" stroke-width="2" stroke-dasharray="0 51.306 2 21.306" fill="none"/>
<path d="M1532 1019H2275" stroke="#14100f" stroke-width="2" stroke-dasharray="0 53.306 2 19.306" fill="none"/>
<path d="M1532 1029H2275" stroke="#14100f" stroke-width="2" stroke-dasharray="0 69.306 2 3.306" fill="none"/>
<path d="M1532 1009H2275" stroke="#14100f" stroke-width="2" stroke-dasharray="0 17.306 2 55.306" fill="none"/>
<path d="M1532 1043H2275" stroke="#14100f" stroke-width="2" stroke-dasharray="0 37.306 17 20.306" fill="none"/>
<path d="M1532 1053H2275" stroke="#14100f" stroke-width="2" stroke-dasharray="0 55.306 13 2 2 2.306" fill="none"/>
<path d="M1532 1069H2275" stroke="#14100f" stroke-width="2" stroke-dasharray="0 53.306 2 19.306" fill="none"/>
<path d="M1532 1015H2275" stroke="#14100f" stroke-width="2" stroke-dasharray="0 72.612 2 0" fill="none"/>
<rect x="2276" y="950" width="298" height="34" fill="#636363"/>
<path d="M2313 950V984M2351 950V984M2389 950V984M2425 950V984M2463 950V984M2501 950V984M2537 950V984" stroke="#5e5e5e" stroke-width="2" fill="none"/>
<path d="M2278 1047H2573" stroke="#5c5c5c" stroke-width="2" stroke-dasharray="7 2 5 2 9 2 9 1.306" fill="none"/>
<path d="M2278 1009H2573" stroke="#5c5c5c" stroke-width="2" stroke-dasharray="0 16 2 19.306" fill="none"/>
<path d="M2278 1023H2573" stroke="#5c5c5c" stroke-width="2" stroke-dasharray="0 9 2 16 2 4 2 2.306" fill="none"/>
<path d="M2278 1033H2573" stroke="#5c5c5c" stroke-width="2" stroke-dasharray="0 17 2 15 2 1.306" fill="none"/>
<path d="M2278 1071H2573" stroke="#5c5c5c" stroke-width="2" stroke-dasharray="0 1 2 34.306" fill="none"/>
<rect x="38" y="1094" width="148" height="12" fill="#3851a0"/>
<rect x="38" y="1094" width="2" height="12" fill="#000" opacity="0.2"/>
<rect x="74" y="1094" width="2" height="12" fill="#000" opacity="0.2"/>
<rect x="112" y="1094" width="2" height="12" fill="#000" opacity="0.2"/>
<rect x="150" y="1094" width="2" height="12" fill="#000" opacity="0.2"/>
<rect x="38" y="1094" width="148" height="12" fill="#000" opacity="0.085"/>
<rect x="192" y="1094" width="106" height="12" fill="#3851a0"/>
<rect x="224" y="1094" width="2" height="12" fill="#000" opacity="0.2"/>
<rect x="262" y="1094" width="2" height="12" fill="#000" opacity="0.2"/>
<rect x="192" y="1094" width="106" height="12" fill="#000" opacity="0.085"/>
<rect x="634" y="1094" width="150" height="12" fill="#3851a0"/>
<rect x="634" y="1094" width="2" height="12" fill="#000" opacity="0.2"/>
<rect x="672" y="1094" width="2" height="12" fill="#000" opacity="0.2"/>
<rect x="708" y="1094" width="2" height="12" fill="#000" opacity="0.2"/>
<rect x="746" y="1094" width="2" height="12" fill="#000" opacity="0.2"/>
<rect x="634" y="1094" width="150" height="12" fill="#000" opacity="0.085"/>
<rect x="788" y="1094" width="108" height="12" fill="#3851a0"/>
<rect x="820" y="1094" width="2" height="12" fill="#000" opacity="0.2"/>
<rect x="858" y="1094" width="2" height="12" fill="#000" opacity="0.2"/>
<rect x="788" y="1094" width="108" height="12" fill="#000" opacity="0.085"/>
<rect x="932" y="1094" width="262" height="12" fill="#3851a0"/>
<rect x="932" y="1094" width="2" height="12" fill="#000" opacity="0.2"/>
<rect x="970" y="1094" width="2" height="12" fill="#000" opacity="0.2"/>
<rect x="1008" y="1094" width="2" height="12" fill="#000" opacity="0.2"/>
<rect x="1044" y="1094" width="2" height="12" fill="#000" opacity="0.2"/>
<rect x="1082" y="1094" width="2" height="12" fill="#000" opacity="0.2"/>
<rect x="1120" y="1094" width="2" height="12" fill="#000" opacity="0.2"/>
<rect x="1156" y="1094" width="2" height="12" fill="#000" opacity="0.2"/>
<rect x="1492" y="1094" width="4" height="12" fill="#3851a0"/>
<rect x="1492" y="1094" width="2" height="12" fill="#000" opacity="0.2"/>
<rect x="1502" y="1094" width="4" height="12" fill="#3851a0"/>
<rect x="1510" y="1094" width="150" height="12" fill="#3851a0"/>
<rect x="1530" y="1094" width="2" height="12" fill="#000" opacity="0.2"/>
<rect x="1566" y="1094" width="2" height="12" fill="#000" opacity="0.2"/>
<rect x="1604" y="1094" width="2" height="12" fill="#000" opacity="0.2"/>
<rect x="1642" y="1094" width="2" height="12" fill="#000" opacity="0.2"/>
<rect x="1678" y="1094" width="524" height="12" fill="#3851a0"/>
<rect x="1678" y="1094" width="2" height="12" fill="#000" opacity="0.2"/>
<rect x="1716" y="1094" width="2" height="12" fill="#000" opacity="0.2"/>
<rect x="1754" y="1094" width="2" height="12" fill="#000" opacity="0.2"/>
<rect x="1790" y="1094" width="2" height="12" fill="#000" opacity="0.2"/>
<rect x="1828" y="1094" width="2" height="12" fill="#000" opacity="0.2"/>
<rect x="1866" y="1094" width="2" height="12" fill="#000" opacity="0.2"/>
<rect x="1902" y="1094" width="2" height="12" fill="#000" opacity="0.2"/>
<rect x="1940" y="1094" width="2" height="12" fill="#000" opacity="0.2"/>
<rect x="1978" y="1094" width="2" height="12" fill="#000" opacity="0.2"/>
<rect x="2014" y="1094" width="2" height="12" fill="#000" opacity="0.2"/>
<rect x="2052" y="1094" width="2" height="12" fill="#000" opacity="0.2"/>
<rect x="2090" y="1094" width="2" height="12" fill="#000" opacity="0.2"/>
<rect x="2126" y="1094" width="2" height="12" fill="#000" opacity="0.2"/>
<rect x="2164" y="1094" width="2" height="12" fill="#000" opacity="0.2"/>
<rect x="1790" y="1094" width="300" height="12" fill="#000" opacity="0.085"/>
<rect x="2276" y="1094" width="298" height="12" fill="#3851a0"/>
<rect x="2276" y="1094" width="2" height="12" fill="#000" opacity="0.2"/>
<rect x="2312" y="1094" width="2" height="12" fill="#000" opacity="0.2"/>
<rect x="2350" y="1094" width="2" height="12" fill="#000" opacity="0.2"/>
<rect x="2388" y="1094" width="2" height="12" fill="#000" opacity="0.2"/>
<rect x="2424" y="1094" width="2" height="12" fill="#000" opacity="0.2"/>
<rect x="2462" y="1094" width="2" height="12" fill="#000" opacity="0.2"/>
<rect x="2500" y="1094" width="2" height="12" fill="#000" opacity="0.2"/>
<rect x="2536" y="1094" width="2" height="12" fill="#000" opacity="0.2"/>
<rect x="2388" y="1094" width="186" height="12" fill="#000" opacity="0.085"/>
<rect x="38" y="1108" width="1454" height="12" fill="#8cb45a"/>
<rect x="38" y="1108" width="2" height="12" fill="#000" opacity="0.2"/>
<rect x="74" y="1108" width="2" height="12" fill="#000" opacity="0.2"/>
<rect x="112" y="1108" width="2" height="12" fill="#000" opacity="0.2"/>
<rect x="150" y="1108" width="2" height="12" fill="#000" opacity="0.2"/>
<rect x="186" y="1108" width="2" height="12" fill="#000" opacity="0.2"/>
<rect x="224" y="1108" width="2" height="12" fill="#000" opacity="0.2"/>
<rect x="262" y="1108" width="2" height="12" fill="#000" opacity="0.2"/>
<rect x="298" y="1108" width="2" height="12" fill="#000" opacity="0.2"/>
<rect x="336" y="1108" width="2" height="12" fill="#000" opacity="0.2"/>
<rect x="374" y="1108" width="2" height="12" fill="#000" opacity="0.2"/>
<rect x="410" y="1108" width="2" height="12" fill="#000" opacity="0.2"/>
<rect x="448" y="1108" width="2" height="12" fill="#000" opacity="0.2"/>
<rect x="484" y="1108" width="2" height="12" fill="#000" opacity="0.2"/>
<rect x="522" y="1108" width="2" height="12" fill="#000" opacity="0.2"/>
<rect x="560" y="1108" width="2" height="12" fill="#000" opacity="0.2"/>
<rect x="596" y="1108" width="2" height="12" fill="#000" opacity="0.2"/>
<rect x="634" y="1108" width="2" height="12" fill="#000" opacity="0.2"/>
<rect x="672" y="1108" width="2" height="12" fill="#000" opacity="0.2"/>
<rect x="708" y="1108" width="2" height="12" fill="#000" opacity="0.2"/>
<rect x="746" y="1108" width="2" height="12" fill="#000" opacity="0.2"/>
<rect x="784" y="1108" width="2" height="12" fill="#000" opacity="0.2"/>
<rect x="820" y="1108" width="2" height="12" fill="#000" opacity="0.2"/>
<rect x="858" y="1108" width="2" height="12" fill="#000" opacity="0.2"/>
<rect x="896" y="1108" width="2" height="12" fill="#000" opacity="0.2"/>
<rect x="932" y="1108" width="2" height="12" fill="#000" opacity="0.2"/>
<rect x="970" y="1108" width="2" height="12" fill="#000" opacity="0.2"/>
<rect x="1008" y="1108" width="2" height="12" fill="#000" opacity="0.2"/>
<rect x="1044" y="1108" width="2" height="12" fill="#000" opacity="0.2"/>
<rect x="1082" y="1108" width="2" height="12" fill="#000" opacity="0.2"/>
<rect x="1120" y="1108" width="2" height="12" fill="#000" opacity="0.2"/>
<rect x="1156" y="1108" width="2" height="12" fill="#000" opacity="0.2"/>
<rect x="1194" y="1108" width="2" height="12" fill="#000" opacity="0.2"/>
<rect x="1232" y="1108" width="2" height="12" fill="#000" opacity="0.2"/>
<rect x="1268" y="1108" width="2" height="12" fill="#000" opacity="0.2"/>
<rect x="1306" y="1108" width="2" height="12" fill="#000" opacity="0.2"/>
<rect x="1344" y="1108" width="2" height="12" fill="#000" opacity="0.2"/>
<rect x="1380" y="1108" width="2" height="12" fill="#000" opacity="0.2"/>
<rect x="1418" y="1108" width="2" height="12" fill="#000" opacity="0.2"/>
<rect x="1454" y="1108" width="2" height="12" fill="#000" opacity="0.2"/>
<rect x="38" y="1108" width="260" height="12" fill="#000" opacity="0.085"/>
<rect x="596" y="1108" width="300" height="12" fill="#000" opacity="0.085"/>
<rect x="1194" y="1108" width="298" height="12" fill="#000" opacity="0.085"/>
<rect x="1660" y="1108" width="914" height="12" fill="#8cb45a"/>
<rect x="1678" y="1108" width="2" height="12" fill="#000" opacity="0.2"/>
<rect x="1716" y="1108" width="2" height="12" fill="#000" opacity="0.2"/>
<rect x="1754" y="1108" width="2" height="12" fill="#000" opacity="0.2"/>
<rect x="1790" y="1108" width="2" height="12" fill="#000" opacity="0.2"/>
<rect x="1828" y="1108" width="2" height="12" fill="#000" opacity="0.2"/>
<rect x="1866" y="1108" width="2" height="12" fill="#000" opacity="0.2"/>
<rect x="1902" y="1108" width="2" height="12" fill="#000" opacity="0.2"/>
<rect x="1940" y="1108" width="2" height="12" fill="#000" opacity="0.2"/>
<rect x="1978" y="1108" width="2" height="12" fill="#000" opacity="0.2"/>
<rect x="2014" y="1108" width="2" height="12" fill="#000" opacity="0.2"/>
<rect x="2052" y="1108" width="2" height="12" fill="#000" opacity="0.2"/>
<rect x="2090" y="1108" width="2" height="12" fill="#000" opacity="0.2"/>
<rect x="2126" y="1108" width="2" height="12" fill="#000" opacity="0.2"/>
<rect x="2164" y="1108" width="2" height="12" fill="#000" opacity="0.2"/>
<rect x="2202" y="1108" width="2" height="12" fill="#000" opacity="0.2"/>
<rect x="2238" y="1108" width="2" height="12" fill="#000" opacity="0.2"/>
<rect x="2276" y="1108" width="2" height="12" fill="#000" opacity="0.2"/>
<rect x="2312" y="1108" width="2" height="12" fill="#000" opacity="0.2"/>
<rect x="2350" y="1108" width="2" height="12" fill="#000" opacity="0.2"/>
<rect x="2388" y="1108" width="2" height="12" fill="#000" opacity="0.2"/>
<rect x="2424" y="1108" width="2" height="12" fill="#000" opacity="0.2"/>
<rect x="2462" y="1108" width="2" height="12" fill="#000" opacity="0.2"/>
<rect x="2500" y="1108" width="2" height="12" fill="#000" opacity="0.2"/>
<rect x="2536" y="1108" width="2" height="12" fill="#000" opacity="0.2"/>
<rect x="1790" y="1108" width="300" height="12" fill="#000" opacity="0.085"/>
<rect x="2388" y="1108" width="186" height="12" fill="#000" opacity="0.085"/>
<defs><linearGradient id="gfade" x1="0" x2="1" y1="0" y2="0"><stop offset="0" stop-color="#454545"/><stop offset="1" stop-color="#5c5c5c"/></linearGradient><linearGradient id="gvt" x1="0" x2="0" y1="0" y2="1"><stop offset="0" stop-color="#8c7a65"/><stop offset="0.5" stop-color="#a18e76"/><stop offset="1" stop-color="#8c7a65"/></linearGradient><linearGradient id="gtan" x1="0" x2="1" y1="0" y2="0"><stop offset="0" stop-color="#a8947a"/><stop offset="1" stop-color="#8f7d68"/></linearGradient></defs>
<path d="M38 1164H44V1198H42Z" fill="url(#gfade)"/>
<rect x="44" y="1164" width="8" height="34" fill="#5e4e3e"/>
<rect x="46" y="1166" width="6" height="30" fill="url(#gtan)"/>
<path d="M74 1164H80V1198H78Z" fill="url(#gfade)"/>
<rect x="80" y="1164" width="8" height="34" fill="#5e4e3e"/>
<rect x="82" y="1166" width="6" height="30" fill="url(#gtan)"/>
<path d="M112 1164H118V1198H116Z" fill="url(#gfade)"/>
<rect x="118" y="1164" width="10" height="34" fill="#5e4e3e"/>
<rect x="120" y="1166" width="8" height="30" fill="url(#gtan)"/>
<rect x="126" y="1174" width="2" height="14" fill="#1e1712"/>
<path d="M150 1164H156V1198H154Z" fill="url(#gfade)"/>
<rect x="156" y="1164" width="8" height="34" fill="#5e4e3e"/>
<rect x="158" y="1166" width="6" height="30" fill="url(#gtan)"/>
<path d="M186 1164H192V1198H190Z" fill="url(#gfade)"/>
<rect x="192" y="1164" width="8" height="34" fill="#5e4e3e"/>
<rect x="194" y="1166" width="6" height="30" fill="url(#gtan)"/>
<path d="M224 1164H230V1198H228Z" fill="url(#gfade)"/>
<rect x="230" y="1164" width="10" height="34" fill="#5e4e3e"/>
<rect x="232" y="1166" width="8" height="30" fill="url(#gtan)"/>
<rect x="238" y="1174" width="2" height="14" fill="#1e1712"/>
<path d="M262 1164H268V1198H266Z" fill="url(#gfade)"/>
<rect x="268" y="1164" width="8" height="34" fill="#5e4e3e"/>
<rect x="270" y="1166" width="6" height="30" fill="url(#gtan)"/>
<path d="M298 1164H304V1198H302Z" fill="url(#gfade)"/>
<rect x="304" y="1164" width="8" height="34" fill="#5e4e3e"/>
<rect x="306" y="1166" width="6" height="30" fill="url(#gtan)"/>
<path d="M634 1164H640V1198H638Z" fill="url(#gfade)"/>
<rect x="640" y="1164" width="8" height="34" fill="#5e4e3e"/>
<rect x="642" y="1166" width="6" height="30" fill="url(#gtan)"/>
<path d="M672 1164H678V1198H676Z" fill="url(#gfade)"/>
<rect x="678" y="1164" width="8" height="34" fill="#5e4e3e"/>
<rect x="680" y="1166" width="6" height="30" fill="url(#gtan)"/>
<path d="M708 1164H714V1198H712Z" fill="url(#gfade)"/>
<rect x="714" y="1164" width="8" height="34" fill="#5e4e3e"/>
<rect x="716" y="1166" width="6" height="30" fill="url(#gtan)"/>
<path d="M746 1164H752V1198H750Z" fill="url(#gfade)"/>
<rect x="752" y="1164" width="8" height="34" fill="#5e4e3e"/>
<rect x="754" y="1166" width="6" height="30" fill="url(#gtan)"/>
<path d="M784 1164H790V1198H788Z" fill="url(#gfade)"/>
<rect x="790" y="1164" width="8" height="34" fill="#5e4e3e"/>
<rect x="792" y="1166" width="6" height="30" fill="url(#gtan)"/>
<path d="M820 1164H826V1198H824Z" fill="url(#gfade)"/>
<rect x="826" y="1164" width="8" height="34" fill="#5e4e3e"/>
<rect x="828" y="1166" width="6" height="30" fill="url(#gtan)"/>
<path d="M858 1164H864V1198H862Z" fill="url(#gfade)"/>
<rect x="864" y="1164" width="8" height="34" fill="#5e4e3e"/>
<rect x="866" y="1166" width="6" height="30" fill="url(#gtan)"/>
<path d="M896 1164H902V1198H900Z" fill="url(#gfade)"/>
<rect x="902" y="1164" width="8" height="34" fill="#5e4e3e"/>
<rect x="904" y="1166" width="6" height="30" fill="url(#gtan)"/>
<path d="M932 1164H938V1198H936Z" fill="url(#gfade)"/>
<rect x="938" y="1164" width="8" height="34" fill="#5e4e3e"/>
<rect x="940" y="1166" width="6" height="30" fill="url(#gtan)"/>
<path d="M970 1164H976V1198H974Z" fill="url(#gfade)"/>
<rect x="976" y="1164" width="10" height="34" fill="#5e4e3e"/>
<rect x="978" y="1166" width="8" height="30" fill="url(#gtan)"/>
<rect x="984" y="1174" width="2" height="14" fill="#1e1712"/>
<path d="M1008 1164H1014V1198H1012Z" fill="url(#gfade)"/>
<rect x="1014" y="1164" width="8" height="34" fill="#5e4e3e"/>
<rect x="1016" y="1166" width="6" height="30" fill="url(#gtan)"/>
<path d="M1044 1164H1050V1198H1048Z" fill="url(#gfade)"/>
<rect x="1050" y="1164" width="8" height="34" fill="#5e4e3e"/>
<rect x="1052" y="1166" width="6" height="30" fill="url(#gtan)"/>
<path d="M1082 1164H1088V1198H1086Z" fill="url(#gfade)"/>
<rect x="1088" y="1164" width="10" height="34" fill="#5e4e3e"/>
<rect x="1090" y="1166" width="8" height="30" fill="url(#gtan)"/>
<rect x="1096" y="1174" width="2" height="14" fill="#1e1712"/>
<path d="M1120 1164H1126V1198H1124Z" fill="url(#gfade)"/>
<rect x="1126" y="1164" width="8" height="34" fill="#5e4e3e"/>
<rect x="1128" y="1166" width="6" height="30" fill="url(#gtan)"/>
<path d="M1156 1164H1162V1198H1160Z" fill="url(#gfade)"/>
<rect x="1162" y="1164" width="8" height="34" fill="#5e4e3e"/>
<rect x="1164" y="1166" width="6" height="30" fill="url(#gtan)"/>
<path d="M1194 1164H1200V1198H1198Z" fill="url(#gfade)"/>
<rect x="1200" y="1164" width="10" height="34" fill="#5e4e3e"/>
<rect x="1202" y="1166" width="8" height="30" fill="url(#gtan)"/>
<rect x="1208" y="1174" width="2" height="14" fill="#1e1712"/>
<path d="M1232 1164H1238V1198H1236Z" fill="url(#gfade)"/>
<rect x="1238" y="1164" width="8" height="34" fill="#5e4e3e"/>
<rect x="1240" y="1166" width="6" height="30" fill="url(#gtan)"/>
<path d="M1268 1164H1274V1198H1272Z" fill="url(#gfade)"/>
<rect x="1274" y="1164" width="8" height="34" fill="#5e4e3e"/>
<rect x="1276" y="1166" width="6" height="30" fill="url(#gtan)"/>
<path d="M1306 1164H1312V1198H1310Z" fill="url(#gfade)"/>
<rect x="1312" y="1164" width="10" height="34" fill="#5e4e3e"/>
<rect x="1314" y="1166" width="8" height="30" fill="url(#gtan)"/>
<rect x="1320" y="1174" width="2" height="14" fill="#1e1712"/>
<path d="M1344 1164H1350V1198H1348Z" fill="url(#gfade)"/>
<rect x="1350" y="1164" width="8" height="34" fill="#5e4e3e"/>
<rect x="1352" y="1166" width="6" height="30" fill="url(#gtan)"/>
<path d="M1380 1164H1386V1198H1384Z" fill="url(#gfade)"/>
<rect x="1386" y="1164" width="8" height="34" fill="#5e4e3e"/>
<rect x="1388" y="1166" width="6" height="30" fill="url(#gtan)"/>
<path d="M1418 1164H1424V1198H1422Z" fill="url(#gfade)"/>
<rect x="1424" y="1164" width="10" height="34" fill="#5e4e3e"/>
<rect x="1426" y="1166" width="8" height="30" fill="url(#gtan)"/>
<rect x="1432" y="1174" width="2" height="14" fill="#1e1712"/>
<path d="M1454 1164H1460V1198H1458Z" fill="url(#gfade)"/>
<rect x="1460" y="1164" width="8" height="34" fill="#5e4e3e"/>
<rect x="1462" y="1166" width="6" height="30" fill="url(#gtan)"/>
<path d="M1492 1164H1498V1198H1496Z" fill="url(#gfade)"/>
<rect x="1498" y="1164" width="8" height="34" fill="#5e4e3e"/>
<rect x="1500" y="1166" width="6" height="30" fill="url(#gtan)"/>
<path d="M1530 1164H1536V1198H1534Z" fill="url(#gfade)"/>
<rect x="1536" y="1164" width="8" height="34" fill="#5e4e3e"/>
<rect x="1538" y="1166" width="6" height="30" fill="url(#gtan)"/>
<path d="M1566 1164H1572V1198H1570Z" fill="url(#gfade)"/>
<rect x="1572" y="1164" width="8" height="34" fill="#5e4e3e"/>
<rect x="1574" y="1166" width="6" height="30" fill="url(#gtan)"/>
<path d="M1604 1164H1610V1198H1608Z" fill="url(#gfade)"/>
<rect x="1610" y="1164" width="8" height="34" fill="#5e4e3e"/>
<rect x="1612" y="1166" width="6" height="30" fill="url(#gtan)"/>
<path d="M1642 1164H1648V1198H1646Z" fill="url(#gfade)"/>
<rect x="1648" y="1164" width="8" height="34" fill="#5e4e3e"/>
<rect x="1650" y="1166" width="6" height="30" fill="url(#gtan)"/>
<path d="M1678 1164H1684V1198H1682Z" fill="url(#gfade)"/>
<rect x="1684" y="1164" width="8" height="34" fill="#5e4e3e"/>
<rect x="1686" y="1166" width="6" height="30" fill="url(#gtan)"/>
<path d="M1716 1164H1722V1198H1720Z" fill="url(#gfade)"/>
<rect x="1722" y="1164" width="8" height="34" fill="#5e4e3e"/>
<rect x="1724" y="1166" width="6" height="30" fill="url(#gtan)"/>
<path d="M1754 1164H1760V1198H1758Z" fill="url(#gfade)"/>
<rect x="1760" y="1164" width="8" height="34" fill="#5e4e3e"/>
<rect x="1762" y="1166" width="6" height="30" fill="url(#gtan)"/>
<path d="M1790 1164H1796V1198H1794Z" fill="url(#gfade)"/>
<rect x="1796" y="1164" width="8" height="34" fill="#5e4e3e"/>
<rect x="1798" y="1166" width="6" height="30" fill="url(#gtan)"/>
<path d="M1828 1164H1834V1198H1832Z" fill="url(#gfade)"/>
<rect x="1834" y="1164" width="10" height="34" fill="#5e4e3e"/>
<rect x="1836" y="1166" width="8" height="30" fill="url(#gtan)"/>
<rect x="1842" y="1174" width="2" height="14" fill="#1e1712"/>
<path d="M1866 1164H1872V1198H1870Z" fill="url(#gfade)"/>
<rect x="1872" y="1164" width="8" height="34" fill="#5e4e3e"/>
<rect x="1874" y="1166" width="6" height="30" fill="url(#gtan)"/>
<path d="M1902 1164H1908V1198H1906Z" fill="url(#gfade)"/>
<rect x="1908" y="1164" width="8" height="34" fill="#5e4e3e"/>
<rect x="1910" y="1166" width="6" height="30" fill="url(#gtan)"/>
<path d="M1940 1164H1946V1198H1944Z" fill="url(#gfade)"/>
<rect x="1946" y="1164" width="10" height="34" fill="#5e4e3e"/>
<rect x="1948" y="1166" width="8" height="30" fill="url(#gtan)"/>
<rect x="1954" y="1174" width="2" height="14" fill="#1e1712"/>
<path d="M1978 1164H1984V1198H1982Z" fill="url(#gfade)"/>
<rect x="1984" y="1164" width="8" height="34" fill="#5e4e3e"/>
<rect x="1986" y="1166" width="6" height="30" fill="url(#gtan)"/>
<path d="M2014 1164H2020V1198H2018Z" fill="url(#gfade)"/>
<rect x="2020" y="1164" width="8" height="34" fill="#5e4e3e"/>
<rect x="2022" y="1166" width="6" height="30" fill="url(#gtan)"/>
<path d="M2052 1164H2058V1198H2056Z" fill="url(#gfade)"/>
<rect x="2058" y="1164" width="10" height="34" fill="#5e4e3e"/>
<rect x="2060" y="1166" width="8" height="30" fill="url(#gtan)"/>
<rect x="2066" y="1174" width="2" height="14" fill="#1e1712"/>
<path d="M2090 1164H2096V1198H2094Z" fill="url(#gfade)"/>
<rect x="2096" y="1164" width="8" height="34" fill="#5e4e3e"/>
<rect x="2098" y="1166" width="6" height="30" fill="url(#gtan)"/>
<path d="M2126 1164H2132V1198H2130Z" fill="url(#gfade)"/>
<rect x="2132" y="1164" width="8" height="34" fill="#5e4e3e"/>
<rect x="2134" y="1166" width="6" height="30" fill="url(#gtan)"/>
<path d="M2164 1164H2170V1198H2168Z" fill="url(#gfade)"/>
<rect x="2170" y="1164" width="10" height="34" fill="#5e4e3e"/>
<rect x="2172" y="1166" width="8" height="30" fill="url(#gtan)"/>
<rect x="2178" y="1174" width="2" height="14" fill="#1e1712"/>
<path d="M2202 1164H2208V1198H2206Z" fill="url(#gfade)"/>
<rect x="2208" y="1164" width="8" height="34" fill="#5e4e3e"/>
<rect x="2210" y="1166" width="6" height="30" fill="url(#gtan)"/>
<path d="M2238 1164H2244V1198H2242Z" fill="url(#gfade)"/>
<rect x="2244" y="1164" width="8" height="34" fill="#5e4e3e"/>
<rect x="2246" y="1166" width="6" height="30" fill="url(#gtan)"/>
<path d="M2276 1164H2282V1198H2280Z" fill="url(#gfade)"/>
<rect x="2282" y="1164" width="10" height="34" fill="#5e4e3e"/>
<rect x="2284" y="1166" width="8" height="30" fill="url(#gtan)"/>
<rect x="2290" y="1174" width="2" height="14" fill="#1e1712"/>
<path d="M2312 1164H2318V1198H2316Z" fill="url(#gfade)"/>
<rect x="2318" y="1164" width="8" height="34" fill="#5e4e3e"/>
<rect x="2320" y="1166" width="6" height="30" fill="url(#gtan)"/>
<path d="M2350 1164H2356V1198H2354Z" fill="url(#gfade)"/>
<rect x="2356" y="1164" width="8" height="34" fill="#5e4e3e"/>
<rect x="2358" y="1166" width="6" height="30" fill="url(#gtan)"/>
<path d="M2388 1164H2394V1198H2392Z" fill="url(#gfade)"/>
<rect x="2394" y="1164" width="10" height="34" fill="#5e4e3e"/>
<rect x="2396" y="1166" width="8" height="30" fill="url(#gtan)"/>
<rect x="2402" y="1174" width="2" height="14" fill="#1e1712"/>
<path d="M2424 1164H2430V1198H2428Z" fill="url(#gfade)"/>
<rect x="2430" y="1164" width="8" height="34" fill="#5e4e3e"/>
<rect x="2432" y="1166" width="6" height="30" fill="url(#gtan)"/>
<path d="M2462 1164H2468V1198H2466Z" fill="url(#gfade)"/>
<rect x="2468" y="1164" width="8" height="34" fill="#5e4e3e"/>
<rect x="2470" y="1166" width="6" height="30" fill="url(#gtan)"/>
<path d="M2500 1164H2506V1198H2504Z" fill="url(#gfade)"/>
<rect x="2506" y="1164" width="8" height="34" fill="#5e4e3e"/>
<rect x="2508" y="1166" width="6" height="30" fill="url(#gtan)"/>
<path d="M2536 1164H2542V1198H2540Z" fill="url(#gfade)"/>
<rect x="2542" y="1164" width="8" height="34" fill="#5e4e3e"/>
<rect x="2544" y="1166" width="6" height="30" fill="url(#gtan)"/>
<defs>
<clipPath id="cs0"><rect x="636" y="1202" width="147" height="34"/></clipPath>
<clipPath id="cs1"><rect x="786" y="1202" width="145" height="34"/></clipPath>
<clipPath id="cs2"><rect x="934" y="1202" width="147" height="34"/></clipPath>
<clipPath id="cs3"><rect x="1084" y="1202" width="147" height="34"/></clipPath>
<clipPath id="cs4"><rect x="1234" y="1202" width="145" height="34"/></clipPath>
<clipPath id="cs5"><rect x="1382" y="1202" width="147" height="34"/></clipPath>
<clipPath id="cs6"><rect x="1532" y="1202" width="145" height="34"/></clipPath>
<clipPath id="cs7"><rect x="1680" y="1202" width="147" height="34"/></clipPath>
<clipPath id="cs8"><rect x="1830" y="1202" width="147" height="34"/></clipPath>
<clipPath id="cs9"><rect x="1980" y="1202" width="145" height="34"/></clipPath>
<clipPath id="cs10"><rect x="2128" y="1202" width="147" height="34"/></clipPath>
</defs>
<rect x="634" y="1202" width="150" height="34" fill="#626262"/>
<path d="M774 1202H784V1236H774Q779 1219.0 774 1202Z" fill="#6c6c6c"/>
<g clip-path="url(#cs0)">
<text x="639.5" y="1226" font-size="20" fill="#2c2c2c" textLength="146.5" lengthAdjust="spacingAndGlyphs" shape-rendering="auto" stroke="#2c2c2c" stroke-width="0.15">STCR2_SG_136</text>
</g>
<rect x="784" y="1202" width="148" height="34" fill="#626262"/>
<path d="M922 1202H932V1236H922Q927 1219.0 922 1202Z" fill="#6c6c6c"/>
<g clip-path="url(#cs1)">
<text x="789.5" y="1226" font-size="20" fill="#2c2c2c" textLength="146.5" lengthAdjust="spacingAndGlyphs" shape-rendering="auto" stroke="#2c2c2c" stroke-width="0.15">STCR2_SG_136</text>
</g>
<rect x="932" y="1202" width="150" height="34" fill="#998873"/>
<rect x="932" y="1202" width="150" height="2" fill="#5e4e3e"/>
<rect x="932" y="1234" width="150" height="2" fill="#5e4e3e"/>
<rect x="932" y="1202" width="2" height="34" fill="#5e4e3e"/>
<path d="M1073 1204H1082V1234H1073Q1078 1219.0 1073 1204Z" fill="#8e7c66"/>
<rect x="1008" y="1204" width="2" height="6" fill="#17130f"/>
<rect x="1008" y="1228" width="2" height="6" fill="#17130f"/>
<g clip-path="url(#cs2)">
<text x="937.5" y="1226" font-size="20" fill="#1f1a14" textLength="146.5" lengthAdjust="spacingAndGlyphs" shape-rendering="auto" stroke="#1f1a14" stroke-width="0.15">STCR2_SG_136</text>
</g>
<rect x="1082" y="1202" width="150" height="34" fill="#998873"/>
<rect x="1082" y="1202" width="150" height="2" fill="#5e4e3e"/>
<rect x="1082" y="1234" width="150" height="2" fill="#5e4e3e"/>
<rect x="1082" y="1202" width="2" height="34" fill="#5e4e3e"/>
<path d="M1223 1204H1232V1234H1223Q1228 1219.0 1223 1204Z" fill="#8e7c66"/>
<rect x="1156" y="1204" width="2" height="6" fill="#17130f"/>
<rect x="1156" y="1228" width="2" height="6" fill="#17130f"/>
<g clip-path="url(#cs3)">
<text x="1087.5" y="1226" font-size="20" fill="#1f1a14" textLength="146.5" lengthAdjust="spacingAndGlyphs" shape-rendering="auto" stroke="#1f1a14" stroke-width="0.15">STCR2_SG_136</text>
</g>
<rect x="1232" y="1202" width="148" height="34" fill="#626262"/>
<path d="M1370 1202H1380V1236H1370Q1375 1219.0 1370 1202Z" fill="#6c6c6c"/>
<g clip-path="url(#cs4)">
<text x="1237.5" y="1226" font-size="20" fill="#2c2c2c" textLength="146.5" lengthAdjust="spacingAndGlyphs" shape-rendering="auto" stroke="#2c2c2c" stroke-width="0.15">STCR2_SG_136</text>
</g>
<rect x="1380" y="1202" width="150" height="34" fill="#998873"/>
<rect x="1380" y="1202" width="150" height="2" fill="#5e4e3e"/>
<rect x="1380" y="1234" width="150" height="2" fill="#5e4e3e"/>
<rect x="1380" y="1202" width="2" height="34" fill="#5e4e3e"/>
<path d="M1521 1204H1530V1234H1521Q1526 1219.0 1521 1204Z" fill="#8e7c66"/>
<rect x="1454" y="1204" width="2" height="6" fill="#17130f"/>
<rect x="1454" y="1228" width="2" height="6" fill="#17130f"/>
<g clip-path="url(#cs5)">
<text x="1385.5" y="1226" font-size="20" fill="#1f1a14" textLength="146.5" lengthAdjust="spacingAndGlyphs" shape-rendering="auto" stroke="#1f1a14" stroke-width="0.15">STCR2_SG_136</text>
</g>
<rect x="1530" y="1202" width="148" height="34" fill="#998873"/>
<rect x="1530" y="1202" width="148" height="2" fill="#5e4e3e"/>
<rect x="1530" y="1234" width="148" height="2" fill="#5e4e3e"/>
<rect x="1530" y="1202" width="2" height="34" fill="#5e4e3e"/>
<path d="M1669 1204H1678V1234H1669Q1674 1219.0 1669 1204Z" fill="#8e7c66"/>
<rect x="1604" y="1204" width="2" height="6" fill="#17130f"/>
<rect x="1604" y="1228" width="2" height="6" fill="#17130f"/>
<g clip-path="url(#cs6)">
<text x="1535.5" y="1226" font-size="20" fill="#1f1a14" textLength="146.5" lengthAdjust="spacingAndGlyphs" shape-rendering="auto" stroke="#1f1a14" stroke-width="0.15">STCR2_SG_136</text>
</g>
<rect x="1678" y="1202" width="150" height="34" fill="#998873"/>
<rect x="1678" y="1202" width="150" height="2" fill="#5e4e3e"/>
<rect x="1678" y="1234" width="150" height="2" fill="#5e4e3e"/>
<rect x="1678" y="1202" width="2" height="34" fill="#5e4e3e"/>
<path d="M1819 1204H1828V1234H1819Q1824 1219.0 1819 1204Z" fill="#8e7c66"/>
<rect x="1754" y="1204" width="2" height="6" fill="#17130f"/>
<rect x="1754" y="1228" width="2" height="6" fill="#17130f"/>
<g clip-path="url(#cs7)">
<text x="1683.5" y="1226" font-size="20" fill="#1f1a14" textLength="146.5" lengthAdjust="spacingAndGlyphs" shape-rendering="auto" stroke="#1f1a14" stroke-width="0.15">STCR2_SG_136</text>
</g>
<rect x="1828" y="1202" width="150" height="34" fill="#998873"/>
<rect x="1828" y="1202" width="150" height="2" fill="#5e4e3e"/>
<rect x="1828" y="1234" width="150" height="2" fill="#5e4e3e"/>
<rect x="1828" y="1202" width="2" height="34" fill="#5e4e3e"/>
<path d="M1969 1204H1978V1234H1969Q1974 1219.0 1969 1204Z" fill="#8e7c66"/>
<rect x="1902" y="1204" width="2" height="6" fill="#17130f"/>
<rect x="1902" y="1228" width="2" height="6" fill="#17130f"/>
<g clip-path="url(#cs8)">
<text x="1833.5" y="1226" font-size="20" fill="#1f1a14" textLength="146.5" lengthAdjust="spacingAndGlyphs" shape-rendering="auto" stroke="#1f1a14" stroke-width="0.15">STCR2_SG_136</text>
</g>
<rect x="1978" y="1202" width="148" height="34" fill="#998873"/>
<rect x="1978" y="1202" width="148" height="2" fill="#5e4e3e"/>
<rect x="1978" y="1234" width="148" height="2" fill="#5e4e3e"/>
<rect x="1978" y="1202" width="2" height="34" fill="#5e4e3e"/>
<path d="M2117 1204H2126V1234H2117Q2122 1219.0 2117 1204Z" fill="#8e7c66"/>
<rect x="2052" y="1204" width="2" height="6" fill="#17130f"/>
<rect x="2052" y="1228" width="2" height="6" fill="#17130f"/>
<g clip-path="url(#cs9)">
<text x="1983.5" y="1226" font-size="20" fill="#1f1a14" textLength="146.5" lengthAdjust="spacingAndGlyphs" shape-rendering="auto" stroke="#1f1a14" stroke-width="0.15">STCR2_SG_136</text>
</g>
<rect x="2126" y="1202" width="150" height="34" fill="#998873"/>
<rect x="2126" y="1202" width="150" height="2" fill="#5e4e3e"/>
<rect x="2126" y="1234" width="150" height="2" fill="#5e4e3e"/>
<rect x="2126" y="1202" width="2" height="34" fill="#5e4e3e"/>
<path d="M2267 1204H2276V1234H2267Q2272 1219.0 2267 1204Z" fill="#8e7c66"/>
<rect x="2202" y="1204" width="2" height="6" fill="#17130f"/>
<rect x="2202" y="1228" width="2" height="6" fill="#17130f"/>
<g clip-path="url(#cs10)">
<text x="2131.5" y="1226" font-size="20" fill="#1f1a14" textLength="146.5" lengthAdjust="spacingAndGlyphs" shape-rendering="auto" stroke="#1f1a14" stroke-width="0.15">STCR2_SG_136</text>
</g>
<rect x="484" y="1240" width="748" height="172" fill="#5a4a3c"/>
<rect x="486" y="1242" width="9" height="31" fill="#a5917a"/>
<rect x="486" y="1275" width="9" height="137" fill="url(#gvt)"/>
<text x="489.5" y="1265" font-size="21" fill="#1f1a14" shape-rendering="auto" stroke="#1f1a14" stroke-width="0.15">f</text>
<path d="M486.0 1295L488.5 1290L490.1 1292L491.9 1289L495.0 1292L495.0 1328L493.4 1337L491.8 1330L490.2 1335L488.7 1327L486.0 1324Z" fill="#181513" shape-rendering="auto"/>
<path d="M486.0 1364L488.5 1359L490.1 1361L491.9 1358L495.0 1361L495.0 1392L493.4 1401L491.8 1394L490.2 1399L488.7 1391L486.0 1388Z" fill="#181513" shape-rendering="auto"/>
<rect x="506" y="1242" width="6" height="31" fill="#a5917a"/>
<rect x="506" y="1275" width="6" height="137" fill="url(#gvt)"/>
<path d="M506.0 1295L507.7 1290L508.7 1292L510.0 1289L512.0 1292L512.0 1328L510.9 1337L509.8 1330L508.8 1335L507.8 1327L506.0 1324Z" fill="#181513" shape-rendering="auto"/>
<path d="M506.0 1364L507.7 1359L508.7 1361L510.0 1358L512.0 1361L512.0 1392L510.9 1401L509.8 1394L508.8 1399L507.8 1391L506.0 1388Z" fill="#181513" shape-rendering="auto"/>
<rect x="524" y="1242" width="8" height="31" fill="#a5917a"/>
<rect x="524" y="1275" width="8" height="137" fill="url(#gvt)"/>
<text x="527.5" y="1265" font-size="21" fill="#1f1a14" shape-rendering="auto" stroke="#1f1a14" stroke-width="0.15">f</text>
<path d="M524.0 1295L526.2 1290L527.6 1292L529.3 1289L532.0 1292L532.0 1328L530.6 1337L529.1 1330L527.8 1335L526.4 1327L524.0 1324Z" fill="#181513" shape-rendering="auto"/>
<path d="M524.0 1364L526.2 1359L527.6 1361L529.3 1358L532.0 1361L532.0 1392L530.6 1401L529.1 1394L527.8 1399L526.4 1391L524.0 1388Z" fill="#181513" shape-rendering="auto"/>
<rect x="544" y="1242" width="6" height="31" fill="#a5917a"/>
<rect x="544" y="1275" width="6" height="137" fill="url(#gvt)"/>
<text x="547.5" y="1265" font-size="21" fill="#1f1a14" shape-rendering="auto" stroke="#1f1a14" stroke-width="0.15">f</text>
<path d="M544.0 1295L545.7 1290L546.7 1292L548.0 1289L550.0 1292L550.0 1328L548.9 1337L547.8 1330L546.8 1335L545.8 1327L544.0 1324Z" fill="#181513" shape-rendering="auto"/>
<path d="M544.0 1364L545.7 1359L546.7 1361L548.0 1358L550.0 1361L550.0 1392L548.9 1401L547.8 1394L546.8 1399L545.8 1391L544.0 1388Z" fill="#181513" shape-rendering="auto"/>
<rect x="561" y="1242" width="8" height="31" fill="#a5917a"/>
<rect x="561" y="1275" width="8" height="137" fill="url(#gvt)"/>
<path d="M561.0 1295L563.2 1290L564.6 1292L566.3 1289L569.0 1292L569.0 1328L567.6 1337L566.1 1330L564.8 1335L563.4 1327L561.0 1324Z" fill="#181513" shape-rendering="auto"/>
<path d="M561.0 1364L563.2 1359L564.6 1361L566.3 1358L569.0 1361L569.0 1392L567.6 1401L566.1 1394L564.8 1399L563.4 1391L561.0 1388Z" fill="#181513" shape-rendering="auto"/>
<rect x="581" y="1242" width="6" height="31" fill="#a5917a"/>
<rect x="581" y="1275" width="6" height="137" fill="url(#gvt)"/>
<text x="584.5" y="1265" font-size="21" fill="#1f1a14" shape-rendering="auto" stroke="#1f1a14" stroke-width="0.15">f</text>
<path d="M581.0 1295L582.7 1290L583.7 1292L585.0 1289L587.0 1292L587.0 1328L585.9 1337L584.8 1330L583.8 1335L582.8 1327L581.0 1324Z" fill="#181513" shape-rendering="auto"/>
<path d="M581.0 1364L582.7 1359L583.7 1361L585.0 1358L587.0 1361L587.0 1392L585.9 1401L584.8 1394L583.8 1399L582.8 1391L581.0 1388Z" fill="#181513" shape-rendering="auto"/>
<rect x="598" y="1242" width="8" height="31" fill="#a5917a"/>
<rect x="598" y="1275" width="8" height="137" fill="url(#gvt)"/>
<text x="601.5" y="1265" font-size="21" fill="#1f1a14" shape-rendering="auto" stroke="#1f1a14" stroke-width="0.15">f</text>
<path d="M598.0 1295L600.2 1290L601.6 1292L603.3 1289L606.0 1292L606.0 1328L604.6 1337L603.1 1330L601.8 1335L600.4 1327L598.0 1324Z" fill="#181513" shape-rendering="auto"/>
<path d="M598.0 1364L600.2 1359L601.6 1361L603.3 1358L606.0 1361L606.0 1392L604.6 1401L603.1 1394L601.8 1399L600.4 1391L598.0 1388Z" fill="#181513" shape-rendering="auto"/>
<rect x="618" y="1242" width="6" height="31" fill="#a5917a"/>
<rect x="618" y="1275" width="6" height="137" fill="url(#gvt)"/>
<path d="M618.0 1295L619.7 1290L620.7 1292L622.0 1289L624.0 1292L624.0 1328L622.9 1337L621.8 1330L620.8 1335L619.8 1327L618.0 1324Z" fill="#181513" shape-rendering="auto"/>
<path d="M618.0 1364L619.7 1359L620.7 1361L622.0 1358L624.0 1361L624.0 1392L622.9 1401L621.8 1394L620.8 1399L619.8 1391L618.0 1388Z" fill="#181513" shape-rendering="auto"/>
<rect x="634" y="1242" width="8" height="31" fill="#a5917a"/>
<rect x="634" y="1275" width="8" height="137" fill="url(#gvt)"/>
<text x="637.5" y="1265" font-size="21" fill="#1f1a14" shape-rendering="auto" stroke="#1f1a14" stroke-width="0.15">f</text>
<path d="M634.0 1295L636.2 1290L637.6 1292L639.3 1289L642.0 1292L642.0 1328L640.6 1337L639.1 1330L637.8 1335L636.4 1327L634.0 1324Z" fill="#181513" shape-rendering="auto"/>
<path d="M634.0 1364L636.2 1359L637.6 1361L639.3 1358L642.0 1361L642.0 1392L640.6 1401L639.1 1394L637.8 1399L636.4 1391L634.0 1388Z" fill="#181513" shape-rendering="auto"/>
<rect x="652" y="1242" width="8" height="31" fill="#a5917a"/>
<rect x="652" y="1275" width="8" height="137" fill="url(#gvt)"/>
<text x="655.5" y="1265" font-size="21" fill="#1f1a14" shape-rendering="auto" stroke="#1f1a14" stroke-width="0.15">f</text>
<path d="M652.0 1295L654.2 1290L655.6 1292L657.3 1289L660.0 1292L660.0 1328L658.6 1337L657.1 1330L655.8 1335L654.4 1327L652.0 1324Z" fill="#181513" shape-rendering="auto"/>
<path d="M652.0 1364L654.2 1359L655.6 1361L657.3 1358L660.0 1361L660.0 1392L658.6 1401L657.1 1394L655.8 1399L654.4 1391L652.0 1388Z" fill="#181513" shape-rendering="auto"/>
<rect x="672" y="1242" width="6" height="31" fill="#a5917a"/>
<rect x="672" y="1275" width="6" height="137" fill="url(#gvt)"/>
<path d="M672.0 1295L673.7 1290L674.7 1292L676.0 1289L678.0 1292L678.0 1328L676.9 1337L675.8 1330L674.8 1335L673.8 1327L672.0 1324Z" fill="#181513" shape-rendering="auto"/>
<path d="M672.0 1364L673.7 1359L674.7 1361L676.0 1358L678.0 1361L678.0 1392L676.9 1401L675.8 1394L674.8 1399L673.8 1391L672.0 1388Z" fill="#181513" shape-rendering="auto"/>
<rect x="690" y="1242" width="12" height="31" fill="#a5917a"/>
<rect x="690" y="1275" width="12" height="137" fill="url(#gvt)"/>
<text x="693.5" y="1265" font-size="21" fill="#1f1a14" shape-rendering="auto" stroke="#1f1a14" stroke-width="0.15">f</text>
<path d="M690.0 1295L693.4 1290L695.4 1292L697.9 1289L702.0 1292L702.0 1328L699.8 1337L697.7 1330L695.6 1335L693.6 1327L690.0 1324Z" fill="#181513" shape-rendering="auto"/>
<path d="M690.0 1364L693.4 1359L695.4 1361L697.9 1358L702.0 1361L702.0 1392L699.8 1401L697.7 1394L695.6 1399L693.6 1391L690.0 1388Z" fill="#181513" shape-rendering="auto"/>
<rect x="709" y="1242" width="7" height="31" fill="#a5917a"/>
<rect x="709" y="1275" width="7" height="137" fill="url(#gvt)"/>
<text x="712.5" y="1265" font-size="21" fill="#1f1a14" shape-rendering="auto" stroke="#1f1a14" stroke-width="0.15">f</text>
<path d="M709.0 1295L711.0 1290L712.1 1292L713.6 1289L716.0 1292L716.0 1328L714.7 1337L713.5 1330L712.3 1335L711.1 1327L709.0 1324Z" fill="#181513" shape-rendering="auto"/>
<path d="M709.0 1364L711.0 1359L712.1 1361L713.6 1358L716.0 1361L716.0 1392L714.7 1401L713.5 1394L712.3 1399L711.1 1391L709.0 1388Z" fill="#181513" shape-rendering="auto"/>
<rect x="727" y="1242" width="7" height="31" fill="#a5917a"/>
<rect x="727" y="1275" width="7" height="137" fill="url(#gvt)"/>
<path d="M727.0 1295L729.0 1290L730.1 1292L731.6 1289L734.0 1292L734.0 1328L732.7 1337L731.5 1330L730.3 1335L729.1 1327L727.0 1324Z" fill="#181513" shape-rendering="auto"/>
<path d="M727.0 1364L729.0 1359L730.1 1361L731.6 1358L734.0 1361L734.0 1392L732.7 1401L731.5 1394L730.3 1399L729.1 1391L727.0 1388Z" fill="#181513" shape-rendering="auto"/>
<rect x="746" y="1242" width="6" height="31" fill="#a5917a"/>
<rect x="746" y="1275" width="6" height="137" fill="url(#gvt)"/>
<text x="749.5" y="1265" font-size="21" fill="#1f1a14" shape-rendering="auto" stroke="#1f1a14" stroke-width="0.15">f</text>
<path d="M746.0 1295L747.7 1290L748.7 1292L750.0 1289L752.0 1292L752.0 1328L750.9 1337L749.8 1330L748.8 1335L747.8 1327L746.0 1324Z" fill="#181513" shape-rendering="auto"/>
<path d="M746.0 1364L747.7 1359L748.7 1361L750.0 1358L752.0 1361L752.0 1392L750.9 1401L749.8 1394L748.8 1399L747.8 1391L746.0 1388Z" fill="#181513" shape-rendering="auto"/>
<rect x="764" y="1242" width="13" height="31" fill="#a5917a"/>
<rect x="764" y="1275" width="13" height="137" fill="url(#gvt)"/>
<text x="767.5" y="1265" font-size="21" fill="#1f1a14" shape-rendering="auto" stroke="#1f1a14" stroke-width="0.15">f</text>
<path d="M764.0 1295L767.6 1290L769.9 1292L772.6 1289L777.0 1292L777.0 1328L774.7 1337L772.3 1330L770.1 1335L767.9 1327L764.0 1324Z" fill="#181513" shape-rendering="auto"/>
<path d="M764.0 1364L767.6 1359L769.9 1361L772.6 1358L777.0 1361L777.0 1392L774.7 1401L772.3 1394L770.1 1399L767.9 1391L764.0 1388Z" fill="#181513" shape-rendering="auto"/>
<rect x="783" y="1242" width="8" height="31" fill="#a5917a"/>
<rect x="783" y="1275" width="8" height="137" fill="url(#gvt)"/>
<path d="M783.0 1295L785.2 1290L786.6 1292L788.3 1289L791.0 1292L791.0 1328L789.6 1337L788.1 1330L786.8 1335L785.4 1327L783.0 1324Z" fill="#181513" shape-rendering="auto"/>
<path d="M783.0 1364L785.2 1359L786.6 1361L788.3 1358L791.0 1361L791.0 1392L789.6 1401L788.1 1394L786.8 1399L785.4 1391L783.0 1388Z" fill="#181513" shape-rendering="auto"/>
<rect x="801" y="1242" width="8" height="31" fill="#a5917a"/>
<rect x="801" y="1275" width="8" height="137" fill="url(#gvt)"/>
<text x="804.5" y="1265" font-size="21" fill="#1f1a14" shape-rendering="auto" stroke="#1f1a14" stroke-width="0.15">f</text>
<path d="M801.0 1295L803.2 1290L804.6 1292L806.3 1289L809.0 1292L809.0 1328L807.6 1337L806.1 1330L804.8 1335L803.4 1327L801.0 1324Z" fill="#181513" shape-rendering="auto"/>
<path d="M801.0 1364L803.2 1359L804.6 1361L806.3 1358L809.0 1361L809.0 1392L807.6 1401L806.1 1394L804.8 1399L803.4 1391L801.0 1388Z" fill="#181513" shape-rendering="auto"/>
<rect x="821" y="1242" width="6" height="31" fill="#a5917a"/>
<rect x="821" y="1275" width="6" height="137" fill="url(#gvt)"/>
<text x="824.5" y="1265" font-size="21" fill="#1f1a14" shape-rendering="auto" stroke="#1f1a14" stroke-width="0.15">f</text>
<path d="M821.0 1295L822.7 1290L823.7 1292L825.0 1289L827.0 1292L827.0 1328L825.9 1337L824.8 1330L823.8 1335L822.8 1327L821.0 1324Z" fill="#181513" shape-rendering="auto"/>
<path d="M821.0 1364L822.7 1359L823.7 1361L825.0 1358L827.0 1361L827.0 1392L825.9 1401L824.8 1394L823.8 1399L822.8 1391L821.0 1388Z" fill="#181513" shape-rendering="auto"/>
<rect x="839" y="1242" width="12" height="31" fill="#a5917a"/>
<rect x="839" y="1275" width="12" height="137" fill="url(#gvt)"/>
<text x="842.5" y="1265" font-size="21" fill="#1f1a14" shape-rendering="auto" stroke="#1f1a14" stroke-width="0.15">f</text>
<path d="M839.0 1295L842.4 1290L844.4 1292L846.9 1289L851.0 1292L851.0 1328L848.8 1337L846.7 1330L844.6 1335L842.6 1327L839.0 1324Z" fill="#181513" shape-rendering="auto"/>
<path d="M839.0 1364L842.4 1359L844.4 1361L846.9 1358L851.0 1361L851.0 1392L848.8 1401L846.7 1394L844.6 1399L842.6 1391L839.0 1388Z" fill="#181513" shape-rendering="auto"/>
<rect x="858" y="1242" width="8" height="31" fill="#a5917a"/>
<rect x="858" y="1275" width="8" height="137" fill="url(#gvt)"/>
<text x="861.5" y="1265" font-size="21" fill="#1f1a14" shape-rendering="auto" stroke="#1f1a14" stroke-width="0.15">f</text>
<path d="M858.0 1295L860.2 1290L861.6 1292L863.3 1289L866.0 1292L866.0 1328L864.6 1337L863.1 1330L861.8 1335L860.4 1327L858.0 1324Z" fill="#181513" shape-rendering="auto"/>
<path d="M858.0 1364L860.2 1359L861.6 1361L863.3 1358L866.0 1361L866.0 1392L864.6 1401L863.1 1394L861.8 1399L860.4 1391L858.0 1388Z" fill="#181513" shape-rendering="auto"/>
<rect x="876" y="1242" width="7" height="31" fill="#a5917a"/>
<rect x="876" y="1275" width="7" height="137" fill="url(#gvt)"/>
<text x="879.5" y="1265" font-size="21" fill="#1f1a14" shape-rendering="auto" stroke="#1f1a14" stroke-width="0.15">f</text>
<path d="M876.0 1295L878.0 1290L879.1 1292L880.6 1289L883.0 1292L883.0 1328L881.7 1337L880.5 1330L879.3 1335L878.1 1327L876.0 1324Z" fill="#181513" shape-rendering="auto"/>
<path d="M876.0 1364L878.0 1359L879.1 1361L880.6 1358L883.0 1361L883.0 1392L881.7 1401L880.5 1394L879.3 1399L878.1 1391L876.0 1388Z" fill="#181513" shape-rendering="auto"/>
<rect x="896" y="1242" width="6" height="31" fill="#a5917a"/>
<rect x="896" y="1275" width="6" height="137" fill="url(#gvt)"/>
<path d="M896.0 1295L897.7 1290L898.7 1292L900.0 1289L902.0 1292L902.0 1328L900.9 1337L899.8 1330L898.8 1335L897.8 1327L896.0 1324Z" fill="#181513" shape-rendering="auto"/>
<path d="M896.0 1364L897.7 1359L898.7 1361L900.0 1358L902.0 1361L902.0 1392L900.9 1401L899.8 1394L898.8 1399L897.8 1391L896.0 1388Z" fill="#181513" shape-rendering="auto"/>
<rect x="913" y="1242" width="13" height="31" fill="#a5917a"/>
<rect x="913" y="1275" width="13" height="137" fill="url(#gvt)"/>
<text x="916.5" y="1265" font-size="21" fill="#1f1a14" shape-rendering="auto" stroke="#1f1a14" stroke-width="0.15">f</text>
<path d="M913.0 1295L916.6 1290L918.9 1292L921.6 1289L926.0 1292L926.0 1328L923.7 1337L921.3 1330L919.1 1335L916.9 1327L913.0 1324Z" fill="#181513" shape-rendering="auto"/>
<path d="M913.0 1364L916.6 1359L918.9 1361L921.6 1358L926.0 1361L926.0 1392L923.7 1401L921.3 1394L919.1 1399L916.9 1391L913.0 1388Z" fill="#181513" shape-rendering="auto"/>
<rect x="932" y="1242" width="8" height="31" fill="#a5917a"/>
<rect x="932" y="1275" width="8" height="137" fill="url(#gvt)"/>
<text x="935.5" y="1265" font-size="21" fill="#1f1a14" shape-rendering="auto" stroke="#1f1a14" stroke-width="0.15">f</text>
<path d="M932.0 1295L934.2 1290L935.6 1292L937.3 1289L940.0 1292L940.0 1328L938.6 1337L937.1 1330L935.8 1335L934.4 1327L932.0 1324Z" fill="#181513" shape-rendering="auto"/>
<path d="M932.0 1364L934.2 1359L935.6 1361L937.3 1358L940.0 1361L940.0 1392L938.6 1401L937.1 1394L935.8 1399L934.4 1391L932.0 1388Z" fill="#181513" shape-rendering="auto"/>
<rect x="951" y="1242" width="7" height="31" fill="#a5917a"/>
<rect x="951" y="1275" width="7" height="137" fill="url(#gvt)"/>
<path d="M951.0 1295L953.0 1290L954.1 1292L955.6 1289L958.0 1292L958.0 1328L956.7 1337L955.5 1330L954.3 1335L953.1 1327L951.0 1324Z" fill="#181513" shape-rendering="auto"/>
<path d="M951.0 1364L953.0 1359L954.1 1361L955.6 1358L958.0 1361L958.0 1392L956.7 1401L955.5 1394L954.3 1399L953.1 1391L951.0 1388Z" fill="#181513" shape-rendering="auto"/>
<rect x="970" y="1242" width="6" height="31" fill="#a5917a"/>
<rect x="970" y="1275" width="6" height="137" fill="url(#gvt)"/>
<text x="973.5" y="1265" font-size="21" fill="#1f1a14" shape-rendering="auto" stroke="#1f1a14" stroke-width="0.15">f</text>
<path d="M970.0 1295L971.7 1290L972.7 1292L974.0 1289L976.0 1292L976.0 1328L974.9 1337L973.8 1330L972.8 1335L971.8 1327L970.0 1324Z" fill="#181513" shape-rendering="auto"/>
<path d="M970.0 1364L971.7 1359L972.7 1361L974.0 1358L976.0 1361L976.0 1392L974.9 1401L973.8 1394L972.8 1399L971.8 1391L970.0 1388Z" fill="#181513" shape-rendering="auto"/>
<rect x="988" y="1242" width="13" height="31" fill="#a5917a"/>
<rect x="988" y="1275" width="13" height="137" fill="url(#gvt)"/>
<text x="991.5" y="1265" font-size="21" fill="#1f1a14" shape-rendering="auto" stroke="#1f1a14" stroke-width="0.15">f</text>
<path d="M988.0 1295L991.6 1290L993.9 1292L996.6 1289L1001.0 1292L1001.0 1328L998.7 1337L996.3 1330L994.1 1335L991.9 1327L988.0 1324Z" fill="#181513" shape-rendering="auto"/>
<path d="M988.0 1364L991.6 1359L993.9 1361L996.6 1358L1001.0 1361L1001.0 1392L998.7 1401L996.3 1394L994.1 1399L991.9 1391L988.0 1388Z" fill="#181513" shape-rendering="auto"/>
<rect x="1007" y="1242" width="8" height="31" fill="#a5917a"/>
<rect x="1007" y="1275" width="8" height="137" fill="url(#gvt)"/>
<path d="M1007.0 1295L1009.2 1290L1010.6 1292L1012.3 1289L1015.0 1292L1015.0 1328L1013.6 1337L1012.1 1330L1010.8 1335L1009.4 1327L1007.0 1324Z" fill="#181513" shape-rendering="auto"/>
<path d="M1007.0 1364L1009.2 1359L1010.6 1361L1012.3 1358L1015.0 1361L1015.0 1392L1013.6 1401L1012.1 1394L1010.8 1399L1009.4 1391L1007.0 1388Z" fill="#181513" shape-rendering="auto"/>
<rect x="1025" y="1242" width="8" height="31" fill="#a5917a"/>
<rect x="1025" y="1275" width="8" height="137" fill="url(#gvt)"/>
<text x="1028.5" y="1265" font-size="21" fill="#1f1a14" shape-rendering="auto" stroke="#1f1a14" stroke-width="0.15">f</text>
<path d="M1025.0 1295L1027.2 1290L1028.6 1292L1030.3 1289L1033.0 1292L1033.0 1328L1031.6 1337L1030.1 1330L1028.8 1335L1027.4 1327L1025.0 1324Z" fill="#181513" shape-rendering="auto"/>
<path d="M1025.0 1364L1027.2 1359L1028.6 1361L1030.3 1358L1033.0 1361L1033.0 1392L1031.6 1401L1030.1 1394L1028.8 1399L1027.4 1391L1025.0 1388Z" fill="#181513" shape-rendering="auto"/>
<rect x="1045" y="1242" width="6" height="31" fill="#a5917a"/>
<rect x="1045" y="1275" width="6" height="137" fill="url(#gvt)"/>
<text x="1048.5" y="1265" font-size="21" fill="#1f1a14" shape-rendering="auto" stroke="#1f1a14" stroke-width="0.15">f</text>
<path d="M1045.0 1295L1046.7 1290L1047.7 1292L1049.0 1289L1051.0 1292L1051.0 1328L1049.9 1337L1048.8 1330L1047.8 1335L1046.8 1327L1045.0 1324Z" fill="#181513" shape-rendering="auto"/>
<path d="M1045.0 1364L1046.7 1359L1047.7 1361L1049.0 1358L1051.0 1361L1051.0 1392L1049.9 1401L1048.8 1394L1047.8 1399L1046.8 1391L1045.0 1388Z" fill="#181513" shape-rendering="auto"/>
<rect x="1063" y="1242" width="12" height="31" fill="#a5917a"/>
<rect x="1063" y="1275" width="12" height="137" fill="url(#gvt)"/>
<text x="1066.5" y="1265" font-size="21" fill="#1f1a14" shape-rendering="auto" stroke="#1f1a14" stroke-width="0.15">f</text>
<path d="M1063.0 1295L1066.4 1290L1068.4 1292L1070.9 1289L1075.0 1292L1075.0 1328L1072.8 1337L1070.7 1330L1068.6 1335L1066.6 1327L1063.0 1324Z" fill="#181513" shape-rendering="auto"/>
<path d="M1063.0 1364L1066.4 1359L1068.4 1361L1070.9 1358L1075.0 1361L1075.0 1392L1072.8 1401L1070.7 1394L1068.6 1399L1066.6 1391L1063.0 1388Z" fill="#181513" shape-rendering="auto"/>
<rect x="1082" y="1242" width="7" height="31" fill="#a5917a"/>
<rect x="1082" y="1275" width="7" height="137" fill="url(#gvt)"/>
<text x="1085.5" y="1265" font-size="21" fill="#1f1a14" shape-rendering="auto" stroke="#1f1a14" stroke-width="0.15">f</text>
<path d="M1082.0 1295L1084.0 1290L1085.2 1292L1086.6 1289L1089.0 1292L1089.0 1328L1087.7 1337L1086.5 1330L1085.3 1335L1084.1 1327L1082.0 1324Z" fill="#181513" shape-rendering="auto"/>
<path d="M1082.0 1364L1084.0 1359L1085.2 1361L1086.6 1358L1089.0 1361L1089.0 1392L1087.7 1401L1086.5 1394L1085.3 1399L1084.1 1391L1082.0 1388Z" fill="#181513" shape-rendering="auto"/>
<rect x="1100" y="1242" width="7" height="31" fill="#a5917a"/>
<rect x="1100" y="1275" width="7" height="137" fill="url(#gvt)"/>
<text x="1103.5" y="1265" font-size="21" fill="#1f1a14" shape-rendering="auto" stroke="#1f1a14" stroke-width="0.15">f</text>
<path d="M1100.0 1295L1102.0 1290L1103.2 1292L1104.6 1289L1107.0 1292L1107.0 1328L1105.7 1337L1104.5 1330L1103.3 1335L1102.1 1327L1100.0 1324Z" fill="#181513" shape-rendering="auto"/>
<path d="M1100.0 1364L1102.0 1359L1103.2 1361L1104.6 1358L1107.0 1361L1107.0 1392L1105.7 1401L1104.5 1394L1103.3 1399L1102.1 1391L1100.0 1388Z" fill="#181513" shape-rendering="auto"/>
<rect x="1119" y="1242" width="6" height="31" fill="#a5917a"/>
<rect x="1119" y="1275" width="6" height="137" fill="url(#gvt)"/>
<path d="M1119.0 1295L1120.7 1290L1121.7 1292L1123.0 1289L1125.0 1292L1125.0 1328L1123.9 1337L1122.8 1330L1121.8 1335L1120.8 1327L1119.0 1324Z" fill="#181513" shape-rendering="auto"/>
<path d="M1119.0 1364L1120.7 1359L1121.7 1361L1123.0 1358L1125.0 1361L1125.0 1392L1123.9 1401L1122.8 1394L1121.8 1399L1120.8 1391L1119.0 1388Z" fill="#181513" shape-rendering="auto"/>
<rect x="1137" y="1242" width="13" height="31" fill="#a5917a"/>
<rect x="1137" y="1275" width="13" height="137" fill="url(#gvt)"/>
<text x="1140.5" y="1265" font-size="21" fill="#1f1a14" shape-rendering="auto" stroke="#1f1a14" stroke-width="0.15">f</text>
<path d="M1137.0 1295L1140.6 1290L1142.8 1292L1145.6 1289L1150.0 1292L1150.0 1328L1147.7 1337L1145.3 1330L1143.1 1335L1140.9 1327L1137.0 1324Z" fill="#181513" shape-rendering="auto"/>
<path d="M1137.0 1364L1140.6 1359L1142.8 1361L1145.6 1358L1150.0 1361L1150.0 1392L1147.7 1401L1145.3 1394L1143.1 1399L1140.9 1391L1137.0 1388Z" fill="#181513" shape-rendering="auto"/>
<rect x="1156" y="1242" width="8" height="31" fill="#a5917a"/>
<rect x="1156" y="1275" width="8" height="137" fill="url(#gvt)"/>
<text x="1159.5" y="1265" font-size="21" fill="#1f1a14" shape-rendering="auto" stroke="#1f1a14" stroke-width="0.15">f</text>
<path d="M1156.0 1295L1158.2 1290L1159.6 1292L1161.3 1289L1164.0 1292L1164.0 1328L1162.6 1337L1161.1 1330L1159.8 1335L1158.4 1327L1156.0 1324Z" fill="#181513" shape-rendering="auto"/>
<path d="M1156.0 1364L1158.2 1359L1159.6 1361L1161.3 1358L1164.0 1361L1164.0 1392L1162.6 1401L1161.1 1394L1159.8 1399L1158.4 1391L1156.0 1388Z" fill="#181513" shape-rendering="auto"/>
<rect x="1174" y="1242" width="8" height="31" fill="#a5917a"/>
<rect x="1174" y="1275" width="8" height="137" fill="url(#gvt)"/>
<path d="M1174.0 1295L1176.2 1290L1177.6 1292L1179.3 1289L1182.0 1292L1182.0 1328L1180.6 1337L1179.1 1330L1177.8 1335L1176.4 1327L1174.0 1324Z" fill="#181513" shape-rendering="auto"/>
<path d="M1174.0 1364L1176.2 1359L1177.6 1361L1179.3 1358L1182.0 1361L1182.0 1392L1180.6 1401L1179.1 1394L1177.8 1399L1176.4 1391L1174.0 1388Z" fill="#181513" shape-rendering="auto"/>
<rect x="1194" y="1242" width="6" height="31" fill="#a5917a"/>
<rect x="1194" y="1275" width="6" height="137" fill="url(#gvt)"/>
<text x="1197.5" y="1265" font-size="21" fill="#1f1a14" shape-rendering="auto" stroke="#1f1a14" stroke-width="0.15">f</text>
<path d="M1194.0 1295L1195.7 1290L1196.7 1292L1198.0 1289L1200.0 1292L1200.0 1328L1198.9 1337L1197.8 1330L1196.8 1335L1195.8 1327L1194.0 1324Z" fill="#181513" shape-rendering="auto"/>
<path d="M1194.0 1364L1195.7 1359L1196.7 1361L1198.0 1358L1200.0 1361L1200.0 1392L1198.9 1401L1197.8 1394L1196.8 1399L1195.8 1391L1194.0 1388Z" fill="#181513" shape-rendering="auto"/>
<rect x="1212" y="1242" width="12" height="31" fill="#a5917a"/>
<rect x="1212" y="1275" width="12" height="137" fill="url(#gvt)"/>
<text x="1215.5" y="1265" font-size="21" fill="#1f1a14" shape-rendering="auto" stroke="#1f1a14" stroke-width="0.15">f</text>
<path d="M1212.0 1295L1215.4 1290L1217.4 1292L1219.9 1289L1224.0 1292L1224.0 1328L1221.8 1337L1219.7 1330L1217.6 1335L1215.6 1327L1212.0 1324Z" fill="#181513" shape-rendering="auto"/>
<path d="M1212.0 1364L1215.4 1359L1217.4 1361L1219.9 1358L1224.0 1361L1224.0 1392L1221.8 1401L1219.7 1394L1217.6 1399L1215.6 1391L1212.0 1388Z" fill="#181513" shape-rendering="auto"/>
<rect x="495" y="1240" width="11" height="35" fill="#5a4a3c"/>
<rect x="532" y="1240" width="12" height="35" fill="#5a4a3c"/>
<rect x="550" y="1240" width="11" height="35" fill="#5a4a3c"/>
<rect x="587" y="1240" width="11" height="35" fill="#5a4a3c"/>
<rect x="606" y="1240" width="12" height="35" fill="#5a4a3c"/>
<rect x="642" y="1240" width="10" height="35" fill="#5a4a3c"/>
<rect x="660" y="1240" width="12" height="35" fill="#5a4a3c"/>
<rect x="716" y="1240" width="11" height="35" fill="#5a4a3c"/>
<rect x="752" y="1240" width="12" height="35" fill="#5a4a3c"/>
<rect x="809" y="1240" width="12" height="35" fill="#5a4a3c"/>
<rect x="827" y="1240" width="12" height="35" fill="#5a4a3c"/>
<rect x="866" y="1240" width="10" height="35" fill="#5a4a3c"/>
<rect x="883" y="1240" width="13" height="35" fill="#5a4a3c"/>
<rect x="940" y="1240" width="11" height="35" fill="#5a4a3c"/>
<rect x="976" y="1240" width="12" height="35" fill="#5a4a3c"/>
<rect x="1033" y="1240" width="12" height="35" fill="#5a4a3c"/>
<rect x="1051" y="1240" width="12" height="35" fill="#5a4a3c"/>
<rect x="1089" y="1240" width="11" height="35" fill="#5a4a3c"/>
<rect x="1107" y="1240" width="12" height="35" fill="#5a4a3c"/>
<rect x="1164" y="1240" width="10" height="35" fill="#5a4a3c"/>
<rect x="1200" y="1240" width="12" height="35" fill="#5a4a3c"/>
<rect x="495" y="1240" width="7" height="34" fill="#676767"/>
<rect x="495" y="1274" width="7" height="138" fill="#2d2d2d"/>
<path d="M495 1292L497.8 1289L502 1293V1329L499.9 1335 L497.45 1330L495 1333Z" fill="#5a5a5a" shape-rendering="auto"/>
<path d="M495 1361L497.8 1358L502 1362V1394L499.9 1400 L497.45 1395L495 1398Z" fill="#5a5a5a" shape-rendering="auto"/>
<rect x="512" y="1240" width="10" height="34" fill="#676767"/>
<rect x="512" y="1274" width="10" height="138" fill="#2d2d2d"/>
<path d="M512 1292L516 1289L522 1293V1329L519 1335 L515.5 1330L512 1333Z" fill="#5a5a5a" shape-rendering="auto"/>
<path d="M512 1361L516 1358L522 1362V1394L519 1400 L515.5 1395L512 1398Z" fill="#5a5a5a" shape-rendering="auto"/>
<rect x="532" y="1240" width="8" height="34" fill="#676767"/>
<rect x="532" y="1274" width="8" height="138" fill="#2d2d2d"/>
<path d="M532 1292L535.2 1289L540 1293V1329L537.6 1335 L534.8 1330L532 1333Z" fill="#5a5a5a" shape-rendering="auto"/>
<path d="M532 1361L535.2 1358L540 1362V1394L537.6 1400 L534.8 1395L532 1398Z" fill="#5a5a5a" shape-rendering="auto"/>
<rect x="550" y="1240" width="10" height="34" fill="#676767"/>
<rect x="550" y="1274" width="10" height="138" fill="#2d2d2d"/>
<path d="M550 1292L554 1289L560 1293V1329L557 1335 L553.5 1330L550 1333Z" fill="#5a5a5a" shape-rendering="auto"/>
<path d="M550 1361L554 1358L560 1362V1394L557 1400 L553.5 1395L550 1398Z" fill="#5a5a5a" shape-rendering="auto"/>
<rect x="569" y="1240" width="8" height="34" fill="#676767"/>
<rect x="569" y="1274" width="8" height="138" fill="#2d2d2d"/>
<path d="M569 1292L572.2 1289L577 1293V1329L574.6 1335 L571.8 1330L569 1333Z" fill="#5a5a5a" shape-rendering="auto"/>
<path d="M569 1361L572.2 1358L577 1362V1394L574.6 1400 L571.8 1395L569 1398Z" fill="#5a5a5a" shape-rendering="auto"/>
<rect x="587" y="1240" width="10" height="34" fill="#676767"/>
<rect x="587" y="1274" width="10" height="138" fill="#2d2d2d"/>
<path d="M587 1292L591 1289L597 1293V1329L594 1335 L590.5 1330L587 1333Z" fill="#5a5a5a" shape-rendering="auto"/>
<path d="M587 1361L591 1358L597 1362V1394L594 1400 L590.5 1395L587 1398Z" fill="#5a5a5a" shape-rendering="auto"/>
<rect x="606" y="1240" width="8" height="34" fill="#676767"/>
<rect x="606" y="1274" width="8" height="138" fill="#2d2d2d"/>
<path d="M606 1292L609.2 1289L614 1293V1329L611.6 1335 L608.8 1330L606 1333Z" fill="#5a5a5a" shape-rendering="auto"/>
<path d="M606 1361L609.2 1358L614 1362V1394L611.6 1400 L608.8 1395L606 1398Z" fill="#5a5a5a" shape-rendering="auto"/>
<rect x="624" y="1240" width="10" height="34" fill="#676767"/>
<rect x="624" y="1274" width="10" height="138" fill="#2d2d2d"/>
<path d="M624 1292L628 1289L634 1293V1329L631 1335 L627.5 1330L624 1333Z" fill="#5a5a5a" shape-rendering="auto"/>
<path d="M624 1361L628 1358L634 1362V1394L631 1400 L627.5 1395L624 1398Z" fill="#5a5a5a" shape-rendering="auto"/>
<rect x="642" y="1240" width="6" height="34" fill="#676767"/>
<rect x="642" y="1274" width="6" height="138" fill="#2d2d2d"/>
<path d="M642 1292L644.4 1289L648 1293V1329L646.2 1335 L644.1 1330L642 1333Z" fill="#5a5a5a" shape-rendering="auto"/>
<path d="M642 1361L644.4 1358L648 1362V1394L646.2 1400 L644.1 1395L642 1398Z" fill="#5a5a5a" shape-rendering="auto"/>
<rect x="660" y="1240" width="10" height="34" fill="#676767"/>
<rect x="660" y="1274" width="10" height="138" fill="#2d2d2d"/>
<path d="M660 1292L664 1289L670 1293V1329L667 1335 L663.5 1330L660 1333Z" fill="#5a5a5a" shape-rendering="auto"/>
<path d="M660 1361L664 1358L670 1362V1394L667 1400 L663.5 1395L660 1398Z" fill="#5a5a5a" shape-rendering="auto"/>
<rect x="678" y="1240" width="8" height="34" fill="#676767"/>
<rect x="678" y="1274" width="8" height="138" fill="#2d2d2d"/>
<path d="M678 1292L681.2 1289L686 1293V1329L683.6 1335 L680.8 1330L678 1333Z" fill="#5a5a5a" shape-rendering="auto"/>
<path d="M678 1361L681.2 1358L686 1362V1394L683.6 1400 L680.8 1395L678 1398Z" fill="#5a5a5a" shape-rendering="auto"/>
<rect x="716" y="1240" width="6" height="34" fill="#676767"/>
<rect x="716" y="1274" width="6" height="138" fill="#2d2d2d"/>
<path d="M716 1292L718.4 1289L722 1293V1329L720.2 1335 L718.1 1330L716 1333Z" fill="#5a5a5a" shape-rendering="auto"/>
<path d="M716 1361L718.4 1358L722 1362V1394L720.2 1400 L718.1 1395L716 1398Z" fill="#5a5a5a" shape-rendering="auto"/>
<rect x="734" y="1240" width="10" height="34" fill="#676767"/>
<rect x="734" y="1274" width="10" height="138" fill="#2d2d2d"/>
<path d="M734 1292L738 1289L744 1293V1329L741 1335 L737.5 1330L734 1333Z" fill="#5a5a5a" shape-rendering="auto"/>
<path d="M734 1361L738 1358L744 1362V1394L741 1400 L737.5 1395L734 1398Z" fill="#5a5a5a" shape-rendering="auto"/>
<rect x="752" y="1240" width="8" height="34" fill="#676767"/>
<rect x="752" y="1274" width="8" height="138" fill="#2d2d2d"/>
<path d="M752 1292L755.2 1289L760 1293V1329L757.6 1335 L754.8 1330L752 1333Z" fill="#5a5a5a" shape-rendering="auto"/>
<path d="M752 1361L755.2 1358L760 1362V1394L757.6 1400 L754.8 1395L752 1398Z" fill="#5a5a5a" shape-rendering="auto"/>
<rect x="791" y="1240" width="6" height="34" fill="#676767"/>
<rect x="791" y="1274" width="6" height="138" fill="#2d2d2d"/>
<path d="M791 1292L793.4 1289L797 1293V1329L795.2 1335 L793.1 1330L791 1333Z" fill="#5a5a5a" shape-rendering="auto"/>
<path d="M791 1361L793.4 1358L797 1362V1394L795.2 1400 L793.1 1395L791 1398Z" fill="#5a5a5a" shape-rendering="auto"/>
<rect x="809" y="1240" width="10" height="34" fill="#676767"/>
<rect x="809" y="1274" width="10" height="138" fill="#2d2d2d"/>
<path d="M809 1292L813 1289L819 1293V1329L816 1335 L812.5 1330L809 1333Z" fill="#5a5a5a" shape-rendering="auto"/>
<path d="M809 1361L813 1358L819 1362V1394L816 1400 L812.5 1395L809 1398Z" fill="#5a5a5a" shape-rendering="auto"/>
<rect x="827" y="1240" width="8" height="34" fill="#676767"/>
<rect x="827" y="1274" width="8" height="138" fill="#2d2d2d"/>
<path d="M827 1292L830.2 1289L835 1293V1329L832.6 1335 L829.8 1330L827 1333Z" fill="#5a5a5a" shape-rendering="auto"/>
<path d="M827 1361L830.2 1358L835 1362V1394L832.6 1400 L829.8 1395L827 1398Z" fill="#5a5a5a" shape-rendering="auto"/>
<rect x="866" y="1240" width="6" height="34" fill="#676767"/>
<rect x="866" y="1274" width="6" height="138" fill="#2d2d2d"/>
<path d="M866 1292L868.4 1289L872 1293V1329L870.2 1335 L868.1 1330L866 1333Z" fill="#5a5a5a" shape-rendering="auto"/>
<path d="M866 1361L868.4 1358L872 1362V1394L870.2 1400 L868.1 1395L866 1398Z" fill="#5a5a5a" shape-rendering="auto"/>
<rect x="883" y="1240" width="11" height="34" fill="#676767"/>
<rect x="883" y="1274" width="11" height="138" fill="#2d2d2d"/>
<path d="M883 1292L887.4 1289L894 1293V1329L890.7 1335 L886.85 1330L883 1333Z" fill="#5a5a5a" shape-rendering="auto"/>
<path d="M883 1361L887.4 1358L894 1362V1394L890.7 1400 L886.85 1395L883 1398Z" fill="#5a5a5a" shape-rendering="auto"/>
<rect x="902" y="1240" width="7" height="34" fill="#676767"/>
<rect x="902" y="1274" width="7" height="138" fill="#2d2d2d"/>
<path d="M902 1292L904.8 1289L909 1293V1329L906.9 1335 L904.45 1330L902 1333Z" fill="#5a5a5a" shape-rendering="auto"/>
<path d="M902 1361L904.8 1358L909 1362V1394L906.9 1400 L904.45 1395L902 1398Z" fill="#5a5a5a" shape-rendering="auto"/>
<rect x="940" y="1240" width="6" height="34" fill="#676767"/>
<rect x="940" y="1274" width="6" height="138" fill="#2d2d2d"/>
<path d="M940 1292L942.4 1289L946 1293V1329L944.2 1335 L942.1 1330L940 1333Z" fill="#5a5a5a" shape-rendering="auto"/>
<path d="M940 1361L942.4 1358L946 1362V1394L944.2 1400 L942.1 1395L940 1398Z" fill="#5a5a5a" shape-rendering="auto"/>
<rect x="958" y="1240" width="10" height="34" fill="#676767"/>
<rect x="958" y="1274" width="10" height="138" fill="#2d2d2d"/>
<path d="M958 1292L962 1289L968 1293V1329L965 1335 L961.5 1330L958 1333Z" fill="#5a5a5a" shape-rendering="auto"/>
<path d="M958 1361L962 1358L968 1362V1394L965 1400 L961.5 1395L958 1398Z" fill="#5a5a5a" shape-rendering="auto"/>
<rect x="976" y="1240" width="8" height="34" fill="#676767"/>
<rect x="976" y="1274" width="8" height="138" fill="#2d2d2d"/>
<path d="M976 1292L979.2 1289L984 1293V1329L981.6 1335 L978.8 1330L976 1333Z" fill="#5a5a5a" shape-rendering="auto"/>
<path d="M976 1361L979.2 1358L984 1362V1394L981.6 1400 L978.8 1395L976 1398Z" fill="#5a5a5a" shape-rendering="auto"/>
<rect x="1015" y="1240" width="6" height="34" fill="#676767"/>
<rect x="1015" y="1274" width="6" height="138" fill="#2d2d2d"/>
<path d="M1015 1292L1017.4 1289L1021 1293V1329L1019.2 1335 L1017.1 1330L1015 1333Z" fill="#5a5a5a" shape-rendering="auto"/>
<path d="M1015 1361L1017.4 1358L1021 1362V1394L1019.2 1400 L1017.1 1395L1015 1398Z" fill="#5a5a5a" shape-rendering="auto"/>
<rect x="1033" y="1240" width="10" height="34" fill="#676767"/>
<rect x="1033" y="1274" width="10" height="138" fill="#2d2d2d"/>
<path d="M1033 1292L1037 1289L1043 1293V1329L1040 1335 L1036.5 1330L1033 1333Z" fill="#5a5a5a" shape-rendering="auto"/>
<path d="M1033 1361L1037 1358L1043 1362V1394L1040 1400 L1036.5 1395L1033 1398Z" fill="#5a5a5a" shape-rendering="auto"/>
<rect x="1051" y="1240" width="8" height="34" fill="#676767"/>
<rect x="1051" y="1274" width="8" height="138" fill="#2d2d2d"/>
<path d="M1051 1292L1054.2 1289L1059 1293V1329L1056.6 1335 L1053.8 1330L1051 1333Z" fill="#5a5a5a" shape-rendering="auto"/>
<path d="M1051 1361L1054.2 1358L1059 1362V1394L1056.6 1400 L1053.8 1395L1051 1398Z" fill="#5a5a5a" shape-rendering="auto"/>
<rect x="1089" y="1240" width="6" height="34" fill="#676767"/>
<rect x="1089" y="1274" width="6" height="138" fill="#2d2d2d"/>
<path d="M1089 1292L1091.4 1289L1095 1293V1329L1093.2 1335 L1091.1 1330L1089 1333Z" fill="#5a5a5a" shape-rendering="auto"/>
<path d="M1089 1361L1091.4 1358L1095 1362V1394L1093.2 1400 L1091.1 1395L1089 1398Z" fill="#5a5a5a" shape-rendering="auto"/>
<rect x="1107" y="1240" width="11" height="34" fill="#676767"/>
<rect x="1107" y="1274" width="11" height="138" fill="#2d2d2d"/>
<path d="M1107 1292L1111.4 1289L1118 1293V1329L1114.7 1335 L1110.85 1330L1107 1333Z" fill="#5a5a5a" shape-rendering="auto"/>
<path d="M1107 1361L1111.4 1358L1118 1362V1394L1114.7 1400 L1110.85 1395L1107 1398Z" fill="#5a5a5a" shape-rendering="auto"/>
<rect x="1125" y="1240" width="8" height="34" fill="#676767"/>
<rect x="1125" y="1274" width="8" height="138" fill="#2d2d2d"/>
<path d="M1125 1292L1128.2 1289L1133 1293V1329L1130.6 1335 L1127.8 1330L1125 1333Z" fill="#5a5a5a" shape-rendering="auto"/>
<path d="M1125 1361L1128.2 1358L1133 1362V1394L1130.6 1400 L1127.8 1395L1125 1398Z" fill="#5a5a5a" shape-rendering="auto"/>
<rect x="1164" y="1240" width="6" height="34" fill="#676767"/>
<rect x="1164" y="1274" width="6" height="138" fill="#2d2d2d"/>
<path d="M1164 1292L1166.4 1289L1170 1293V1329L1168.2 1335 L1166.1 1330L1164 1333Z" fill="#5a5a5a" shape-rendering="auto"/>
<path d="M1164 1361L1166.4 1358L1170 1362V1394L1168.2 1400 L1166.1 1395L1164 1398Z" fill="#5a5a5a" shape-rendering="auto"/>
<rect x="1182" y="1240" width="10" height="34" fill="#676767"/>
<rect x="1182" y="1274" width="10" height="138" fill="#2d2d2d"/>
<path d="M1182 1292L1186 1289L1192 1293V1329L1189 1335 L1185.5 1330L1182 1333Z" fill="#5a5a5a" shape-rendering="auto"/>
<path d="M1182 1361L1186 1358L1192 1362V1394L1189 1400 L1185.5 1395L1182 1398Z" fill="#5a5a5a" shape-rendering="auto"/>
<rect x="1200" y="1240" width="8" height="34" fill="#676767"/>
<rect x="1200" y="1274" width="8" height="138" fill="#2d2d2d"/>
<path d="M1200 1292L1203.2 1289L1208 1293V1329L1205.6 1335 L1202.8 1330L1200 1333Z" fill="#5a5a5a" shape-rendering="auto"/>
<path d="M1200 1361L1203.2 1358L1208 1362V1394L1205.6 1400 L1202.8 1395L1200 1398Z" fill="#5a5a5a" shape-rendering="auto"/>
<rect x="1678" y="1240" width="598" height="172" fill="#5a4a3c"/>
<rect x="1680" y="1242" width="6" height="31" fill="#a5917a"/>
<rect x="1680" y="1275" width="6" height="137" fill="url(#gvt)"/>
<text x="1683.5" y="1265" font-size="21" fill="#1f1a14" shape-rendering="auto" stroke="#1f1a14" stroke-width="0.15">f</text>
<path d="M1680.0 1295L1681.7 1290L1682.7 1292L1684.0 1289L1686.0 1292L1686.0 1328L1684.9 1337L1683.8 1330L1682.8 1335L1681.8 1327L1680.0 1324Z" fill="#181513" shape-rendering="auto"/>
<path d="M1680.0 1364L1681.7 1359L1682.7 1361L1684.0 1358L1686.0 1361L1686.0 1392L1684.9 1401L1683.8 1394L1682.8 1399L1681.8 1391L1680.0 1388Z" fill="#181513" shape-rendering="auto"/>
<rect x="1697" y="1242" width="7" height="31" fill="#a5917a"/>
<rect x="1697" y="1275" width="7" height="137" fill="url(#gvt)"/>
<path d="M1697.0 1295L1699.0 1290L1700.2 1292L1701.6 1289L1704.0 1292L1704.0 1328L1702.7 1337L1701.5 1330L1700.3 1335L1699.1 1327L1697.0 1324Z" fill="#181513" shape-rendering="auto"/>
<path d="M1697.0 1364L1699.0 1359L1700.2 1361L1701.6 1358L1704.0 1361L1704.0 1392L1702.7 1401L1701.5 1394L1700.3 1399L1699.1 1391L1697.0 1388Z" fill="#181513" shape-rendering="auto"/>
<rect x="1716" y="1242" width="6" height="31" fill="#a5917a"/>
<rect x="1716" y="1275" width="6" height="137" fill="url(#gvt)"/>
<text x="1719.5" y="1265" font-size="21" fill="#1f1a14" shape-rendering="auto" stroke="#1f1a14" stroke-width="0.15">f</text>
<path d="M1716.0 1295L1717.7 1290L1718.7 1292L1720.0 1289L1722.0 1292L1722.0 1328L1720.9 1337L1719.8 1330L1718.8 1335L1717.8 1327L1716.0 1324Z" fill="#181513" shape-rendering="auto"/>
<path d="M1716.0 1364L1717.7 1359L1718.7 1361L1720.0 1358L1722.0 1361L1722.0 1392L1720.9 1401L1719.8 1394L1718.8 1399L1717.8 1391L1716.0 1388Z" fill="#181513" shape-rendering="auto"/>
<rect x="1734" y="1242" width="13" height="31" fill="#a5917a"/>
<rect x="1734" y="1275" width="13" height="137" fill="url(#gvt)"/>
<text x="1737.5" y="1265" font-size="21" fill="#1f1a14" shape-rendering="auto" stroke="#1f1a14" stroke-width="0.15">f</text>
<path d="M1734.0 1295L1737.6 1290L1739.8 1292L1742.6 1289L1747.0 1292L1747.0 1328L1744.7 1337L1742.3 1330L1740.1 1335L1737.9 1327L1734.0 1324Z" fill="#181513" shape-rendering="auto"/>
<path d="M1734.0 1364L1737.6 1359L1739.8 1361L1742.6 1358L1747.0 1361L1747.0 1392L1744.7 1401L1742.3 1394L1740.1 1399L1737.9 1391L1734.0 1388Z" fill="#181513" shape-rendering="auto"/>
<rect x="1753" y="1242" width="8" height="31" fill="#a5917a"/>
<rect x="1753" y="1275" width="8" height="137" fill="url(#gvt)"/>
<path d="M1753.0 1295L1755.2 1290L1756.6 1292L1758.3 1289L1761.0 1292L1761.0 1328L1759.6 1337L1758.1 1330L1756.8 1335L1755.4 1327L1753.0 1324Z" fill="#181513" shape-rendering="auto"/>
<path d="M1753.0 1364L1755.2 1359L1756.6 1361L1758.3 1358L1761.0 1361L1761.0 1392L1759.6 1401L1758.1 1394L1756.8 1399L1755.4 1391L1753.0 1388Z" fill="#181513" shape-rendering="auto"/>
<rect x="1771" y="1242" width="8" height="31" fill="#a5917a"/>
<rect x="1771" y="1275" width="8" height="137" fill="url(#gvt)"/>
<text x="1774.5" y="1265" font-size="21" fill="#1f1a14" shape-rendering="auto" stroke="#1f1a14" stroke-width="0.15">f</text>
<path d="M1771.0 1295L1773.2 1290L1774.6 1292L1776.3 1289L1779.0 1292L1779.0 1328L1777.6 1337L1776.1 1330L1774.8 1335L1773.4 1327L1771.0 1324Z" fill="#181513" shape-rendering="auto"/>
<path d="M1771.0 1364L1773.2 1359L1774.6 1361L1776.3 1358L1779.0 1361L1779.0 1392L1777.6 1401L1776.1 1394L1774.8 1399L1773.4 1391L1771.0 1388Z" fill="#181513" shape-rendering="auto"/>
<rect x="1791" y="1242" width="6" height="31" fill="#a5917a"/>
<rect x="1791" y="1275" width="6" height="137" fill="url(#gvt)"/>
<text x="1794.5" y="1265" font-size="21" fill="#1f1a14" shape-rendering="auto" stroke="#1f1a14" stroke-width="0.15">f</text>
<path d="M1791.0 1295L1792.7 1290L1793.7 1292L1795.0 1289L1797.0 1292L1797.0 1328L1795.9 1337L1794.8 1330L1793.8 1335L1792.8 1327L1791.0 1324Z" fill="#181513" shape-rendering="auto"/>
<path d="M1791.0 1364L1792.7 1359L1793.7 1361L1795.0 1358L1797.0 1361L1797.0 1392L1795.9 1401L1794.8 1394L1793.8 1399L1792.8 1391L1791.0 1388Z" fill="#181513" shape-rendering="auto"/>
<rect x="1809" y="1242" width="12" height="31" fill="#a5917a"/>
<rect x="1809" y="1275" width="12" height="137" fill="url(#gvt)"/>
<text x="1812.5" y="1265" font-size="21" fill="#1f1a14" shape-rendering="auto" stroke="#1f1a14" stroke-width="0.15">f</text>
<path d="M1809.0 1295L1812.4 1290L1814.4 1292L1816.9 1289L1821.0 1292L1821.0 1328L1818.8 1337L1816.7 1330L1814.6 1335L1812.6 1327L1809.0 1324Z" fill="#181513" shape-rendering="auto"/>
<path d="M1809.0 1364L1812.4 1359L1814.4 1361L1816.9 1358L1821.0 1361L1821.0 1392L1818.8 1401L1816.7 1394L1814.6 1399L1812.6 1391L1809.0 1388Z" fill="#181513" shape-rendering="auto"/>
<rect x="1828" y="1242" width="7" height="31" fill="#a5917a"/>
<rect x="1828" y="1275" width="7" height="137" fill="url(#gvt)"/>
<text x="1831.5" y="1265" font-size="21" fill="#1f1a14" shape-rendering="auto" stroke="#1f1a14" stroke-width="0.15">f</text>
<path d="M1828.0 1295L1830.0 1290L1831.2 1292L1832.6 1289L1835.0 1292L1835.0 1328L1833.7 1337L1832.5 1330L1831.3 1335L1830.1 1327L1828.0 1324Z" fill="#181513" shape-rendering="auto"/>
<path d="M1828.0 1364L1830.0 1359L1831.2 1361L1832.6 1358L1835.0 1361L1835.0 1392L1833.7 1401L1832.5 1394L1831.3 1399L1830.1 1391L1828.0 1388Z" fill="#181513" shape-rendering="auto"/>
<rect x="1846" y="1242" width="7" height="31" fill="#a5917a"/>
<rect x="1846" y="1275" width="7" height="137" fill="url(#gvt)"/>
<text x="1849.5" y="1265" font-size="21" fill="#1f1a14" shape-rendering="auto" stroke="#1f1a14" stroke-width="0.15">f</text>
<path d="M1846.0 1295L1848.0 1290L1849.2 1292L1850.6 1289L1853.0 1292L1853.0 1328L1851.7 1337L1850.5 1330L1849.3 1335L1848.1 1327L1846.0 1324Z" fill="#181513" shape-rendering="auto"/>
<path d="M1846.0 1364L1848.0 1359L1849.2 1361L1850.6 1358L1853.0 1361L1853.0 1392L1851.7 1401L1850.5 1394L1849.3 1399L1848.1 1391L1846.0 1388Z" fill="#181513" shape-rendering="auto"/>
<rect x="1866" y="1242" width="6" height="31" fill="#a5917a"/>
<rect x="1866" y="1275" width="6" height="137" fill="url(#gvt)"/>
<path d="M1866.0 1295L1867.7 1290L1868.7 1292L1870.0 1289L1872.0 1292L1872.0 1328L1870.9 1337L1869.8 1330L1868.8 1335L1867.8 1327L1866.0 1324Z" fill="#181513" shape-rendering="auto"/>
<path d="M1866.0 1364L1867.7 1359L1868.7 1361L1870.0 1358L1872.0 1361L1872.0 1392L1870.9 1401L1869.8 1394L1868.8 1399L1867.8 1391L1866.0 1388Z" fill="#181513" shape-rendering="auto"/>
<rect x="1883" y="1242" width="13" height="31" fill="#a5917a"/>
<rect x="1883" y="1275" width="13" height="137" fill="url(#gvt)"/>
<text x="1886.5" y="1265" font-size="21" fill="#1f1a14" shape-rendering="auto" stroke="#1f1a14" stroke-width="0.15">f</text>
<path d="M1883.0 1295L1886.6 1290L1888.8 1292L1891.6 1289L1896.0 1292L1896.0 1328L1893.7 1337L1891.3 1330L1889.1 1335L1886.9 1327L1883.0 1324Z" fill="#181513" shape-rendering="auto"/>
<path d="M1883.0 1364L1886.6 1359L1888.8 1361L1891.6 1358L1896.0 1361L1896.0 1392L1893.7 1401L1891.3 1394L1889.1 1399L1886.9 1391L1883.0 1388Z" fill="#181513" shape-rendering="auto"/>
<rect x="1902" y="1242" width="8" height="31" fill="#a5917a"/>
<rect x="1902" y="1275" width="8" height="137" fill="url(#gvt)"/>
<text x="1905.5" y="1265" font-size="21" fill="#1f1a14" shape-rendering="auto" stroke="#1f1a14" stroke-width="0.15">f</text>
<path d="M1902.0 1295L1904.2 1290L1905.6 1292L1907.3 1289L1910.0 1292L1910.0 1328L1908.6 1337L1907.1 1330L1905.8 1335L1904.4 1327L1902.0 1324Z" fill="#181513" shape-rendering="auto"/>
<path d="M1902.0 1364L1904.2 1359L1905.6 1361L1907.3 1358L1910.0 1361L1910.0 1392L1908.6 1401L1907.1 1394L1905.8 1399L1904.4 1391L1902.0 1388Z" fill="#181513" shape-rendering="auto"/>
<rect x="1921" y="1242" width="7" height="31" fill="#a5917a"/>
<rect x="1921" y="1275" width="7" height="137" fill="url(#gvt)"/>
<path d="M1921.0 1295L1923.0 1290L1924.2 1292L1925.6 1289L1928.0 1292L1928.0 1328L1926.7 1337L1925.5 1330L1924.3 1335L1923.1 1327L1921.0 1324Z" fill="#181513" shape-rendering="auto"/>
<path d="M1921.0 1364L1923.0 1359L1924.2 1361L1925.6 1358L1928.0 1361L1928.0 1392L1926.7 1401L1925.5 1394L1924.3 1399L1923.1 1391L1921.0 1388Z" fill="#181513" shape-rendering="auto"/>
<rect x="1940" y="1242" width="6" height="31" fill="#a5917a"/>
<rect x="1940" y="1275" width="6" height="137" fill="url(#gvt)"/>
<text x="1943.5" y="1265" font-size="21" fill="#1f1a14" shape-rendering="auto" stroke="#1f1a14" stroke-width="0.15">f</text>
<path d="M1940.0 1295L1941.7 1290L1942.7 1292L1944.0 1289L1946.0 1292L1946.0 1328L1944.9 1337L1943.8 1330L1942.8 1335L1941.8 1327L1940.0 1324Z" fill="#181513" shape-rendering="auto"/>
<path d="M1940.0 1364L1941.7 1359L1942.7 1361L1944.0 1358L1946.0 1361L1946.0 1392L1944.9 1401L1943.8 1394L1942.8 1399L1941.8 1391L1940.0 1388Z" fill="#181513" shape-rendering="auto"/>
<rect x="1958" y="1242" width="12" height="31" fill="#a5917a"/>
<rect x="1958" y="1275" width="12" height="137" fill="url(#gvt)"/>
<text x="1961.5" y="1265" font-size="21" fill="#1f1a14" shape-rendering="auto" stroke="#1f1a14" stroke-width="0.15">f</text>
<path d="M1958.0 1295L1961.4 1290L1963.4 1292L1965.9 1289L1970.0 1292L1970.0 1328L1967.8 1337L1965.7 1330L1963.6 1335L1961.6 1327L1958.0 1324Z" fill="#181513" shape-rendering="auto"/>
<path d="M1958.0 1364L1961.4 1359L1963.4 1361L1965.9 1358L1970.0 1361L1970.0 1392L1967.8 1401L1965.7 1394L1963.6 1399L1961.6 1391L1958.0 1388Z" fill="#181513" shape-rendering="auto"/>
<rect x="1977" y="1242" width="8" height="31" fill="#a5917a"/>
<rect x="1977" y="1275" width="8" height="137" fill="url(#gvt)"/>
<path d="M1977.0 1295L1979.2 1290L1980.6 1292L1982.3 1289L1985.0 1292L1985.0 1328L1983.6 1337L1982.1 1330L1980.8 1335L1979.4 1327L1977.0 1324Z" fill="#181513" shape-rendering="auto"/>
<path d="M1977.0 1364L1979.2 1359L1980.6 1361L1982.3 1358L1985.0 1361L1985.0 1392L1983.6 1401L1982.1 1394L1980.8 1399L1979.4 1391L1977.0 1388Z" fill="#181513" shape-rendering="auto"/>
<rect x="1995" y="1242" width="8" height="31" fill="#a5917a"/>
<rect x="1995" y="1275" width="8" height="137" fill="url(#gvt)"/>
<text x="1998.5" y="1265" font-size="21" fill="#1f1a14" shape-rendering="auto" stroke="#1f1a14" stroke-width="0.15">f</text>
<path d="M1995.0 1295L1997.2 1290L1998.6 1292L2000.3 1289L2003.0 1292L2003.0 1328L2001.6 1337L2000.1 1330L1998.8 1335L1997.4 1327L1995.0 1324Z" fill="#181513" shape-rendering="auto"/>
<path d="M1995.0 1364L1997.2 1359L1998.6 1361L2000.3 1358L2003.0 1361L2003.0 1392L2001.6 1401L2000.1 1394L1998.8 1399L1997.4 1391L1995.0 1388Z" fill="#181513" shape-rendering="auto"/>
<rect x="2015" y="1242" width="6" height="31" fill="#a5917a"/>
<rect x="2015" y="1275" width="6" height="137" fill="url(#gvt)"/>
<text x="2018.5" y="1265" font-size="21" fill="#1f1a14" shape-rendering="auto" stroke="#1f1a14" stroke-width="0.15">f</text>
<path d="M2015.0 1295L2016.7 1290L2017.7 1292L2019.0 1289L2021.0 1292L2021.0 1328L2019.9 1337L2018.8 1330L2017.8 1335L2016.8 1327L2015.0 1324Z" fill="#181513" shape-rendering="auto"/>
<path d="M2015.0 1364L2016.7 1359L2017.7 1361L2019.0 1358L2021.0 1361L2021.0 1392L2019.9 1401L2018.8 1394L2017.8 1399L2016.8 1391L2015.0 1388Z" fill="#181513" shape-rendering="auto"/>
<rect x="2033" y="1242" width="12" height="31" fill="#a5917a"/>
<rect x="2033" y="1275" width="12" height="137" fill="url(#gvt)"/>
<text x="2036.5" y="1265" font-size="21" fill="#1f1a14" shape-rendering="auto" stroke="#1f1a14" stroke-width="0.15">f</text>
<path d="M2033.0 1295L2036.4 1290L2038.4 1292L2040.9 1289L2045.0 1292L2045.0 1328L2042.8 1337L2040.7 1330L2038.6 1335L2036.6 1327L2033.0 1324Z" fill="#181513" shape-rendering="auto"/>
<path d="M2033.0 1364L2036.4 1359L2038.4 1361L2040.9 1358L2045.0 1361L2045.0 1392L2042.8 1401L2040.7 1394L2038.6 1399L2036.6 1391L2033.0 1388Z" fill="#181513" shape-rendering="auto"/>
<rect x="2052" y="1242" width="7" height="31" fill="#a5917a"/>
<rect x="2052" y="1275" width="7" height="137" fill="url(#gvt)"/>
<text x="2055.5" y="1265" font-size="21" fill="#1f1a14" shape-rendering="auto" stroke="#1f1a14" stroke-width="0.15">f</text>
<path d="M2052.0 1295L2054.0 1290L2055.2 1292L2056.6 1289L2059.0 1292L2059.0 1328L2057.7 1337L2056.5 1330L2055.3 1335L2054.1 1327L2052.0 1324Z" fill="#181513" shape-rendering="auto"/>
<path d="M2052.0 1364L2054.0 1359L2055.2 1361L2056.6 1358L2059.0 1361L2059.0 1392L2057.7 1401L2056.5 1394L2055.3 1399L2054.1 1391L2052.0 1388Z" fill="#181513" shape-rendering="auto"/>
<rect x="2070" y="1242" width="7" height="31" fill="#a5917a"/>
<rect x="2070" y="1275" width="7" height="137" fill="url(#gvt)"/>
<text x="2073.5" y="1265" font-size="21" fill="#1f1a14" shape-rendering="auto" stroke="#1f1a14" stroke-width="0.15">f</text>
<path d="M2070.0 1295L2072.0 1290L2073.2 1292L2074.6 1289L2077.0 1292L2077.0 1328L2075.7 1337L2074.5 1330L2073.3 1335L2072.1 1327L2070.0 1324Z" fill="#181513" shape-rendering="auto"/>
<path d="M2070.0 1364L2072.0 1359L2073.2 1361L2074.6 1358L2077.0 1361L2077.0 1392L2075.7 1401L2074.5 1394L2073.3 1399L2072.1 1391L2070.0 1388Z" fill="#181513" shape-rendering="auto"/>
<rect x="2089" y="1242" width="6" height="31" fill="#a5917a"/>
<rect x="2089" y="1275" width="6" height="137" fill="url(#gvt)"/>
<path d="M2089.0 1295L2090.7 1290L2091.7 1292L2093.0 1289L2095.0 1292L2095.0 1328L2093.9 1337L2092.8 1330L2091.8 1335L2090.8 1327L2089.0 1324Z" fill="#181513" shape-rendering="auto"/>
<path d="M2089.0 1364L2090.7 1359L2091.7 1361L2093.0 1358L2095.0 1361L2095.0 1392L2093.9 1401L2092.8 1394L2091.8 1399L2090.8 1391L2089.0 1388Z" fill="#181513" shape-rendering="auto"/>
<rect x="2107" y="1242" width="13" height="31" fill="#a5917a"/>
<rect x="2107" y="1275" width="13" height="137" fill="url(#gvt)"/>
<text x="2110.5" y="1265" font-size="21" fill="#1f1a14" shape-rendering="auto" stroke="#1f1a14" stroke-width="0.15">f</text>
<path d="M2107.0 1295L2110.6 1290L2112.8 1292L2115.6 1289L2120.0 1292L2120.0 1328L2117.7 1337L2115.3 1330L2113.1 1335L2110.9 1327L2107.0 1324Z" fill="#181513" shape-rendering="auto"/>
<path d="M2107.0 1364L2110.6 1359L2112.8 1361L2115.6 1358L2120.0 1361L2120.0 1392L2117.7 1401L2115.3 1394L2113.1 1399L2110.9 1391L2107.0 1388Z" fill="#181513" shape-rendering="auto"/>
<rect x="2126" y="1242" width="8" height="31" fill="#a5917a"/>
<rect x="2126" y="1275" width="8" height="137" fill="url(#gvt)"/>
<text x="2129.5" y="1265" font-size="21" fill="#1f1a14" shape-rendering="auto" stroke="#1f1a14" stroke-width="0.15">f</text>
<path d="M2126.0 1295L2128.2 1290L2129.6 1292L2131.3 1289L2134.0 1292L2134.0 1328L2132.6 1337L2131.1 1330L2129.8 1335L2128.4 1327L2126.0 1324Z" fill="#181513" shape-rendering="auto"/>
<path d="M2126.0 1364L2128.2 1359L2129.6 1361L2131.3 1358L2134.0 1361L2134.0 1392L2132.6 1401L2131.1 1394L2129.8 1399L2128.4 1391L2126.0 1388Z" fill="#181513" shape-rendering="auto"/>
<rect x="2144" y="1242" width="8" height="31" fill="#a5917a"/>
<rect x="2144" y="1275" width="8" height="137" fill="url(#gvt)"/>
<path d="M2144.0 1295L2146.2 1290L2147.6 1292L2149.3 1289L2152.0 1292L2152.0 1328L2150.6 1337L2149.1 1330L2147.8 1335L2146.4 1327L2144.0 1324Z" fill="#181513" shape-rendering="auto"/>
<path d="M2144.0 1364L2146.2 1359L2147.6 1361L2149.3 1358L2152.0 1361L2152.0 1392L2150.6 1401L2149.1 1394L2147.8 1399L2146.4 1391L2144.0 1388Z" fill="#181513" shape-rendering="auto"/>
<rect x="2164" y="1242" width="6" height="31" fill="#a5917a"/>
<rect x="2164" y="1275" width="6" height="137" fill="url(#gvt)"/>
<text x="2167.5" y="1265" font-size="21" fill="#1f1a14" shape-rendering="auto" stroke="#1f1a14" stroke-width="0.15">f</text>
<path d="M2164.0 1295L2165.7 1290L2166.7 1292L2168.0 1289L2170.0 1292L2170.0 1328L2168.9 1337L2167.8 1330L2166.8 1335L2165.8 1327L2164.0 1324Z" fill="#181513" shape-rendering="auto"/>
<path d="M2164.0 1364L2165.7 1359L2166.7 1361L2168.0 1358L2170.0 1361L2170.0 1392L2168.9 1401L2167.8 1394L2166.8 1399L2165.8 1391L2164.0 1388Z" fill="#181513" shape-rendering="auto"/>
<rect x="2182" y="1242" width="12" height="31" fill="#a5917a"/>
<rect x="2182" y="1275" width="12" height="137" fill="url(#gvt)"/>
<text x="2185.5" y="1265" font-size="21" fill="#1f1a14" shape-rendering="auto" stroke="#1f1a14" stroke-width="0.15">f</text>
<path d="M2182.0 1295L2185.4 1290L2187.4 1292L2189.9 1289L2194.0 1292L2194.0 1328L2191.8 1337L2189.7 1330L2187.6 1335L2185.6 1327L2182.0 1324Z" fill="#181513" shape-rendering="auto"/>
<path d="M2182.0 1364L2185.4 1359L2187.4 1361L2189.9 1358L2194.0 1361L2194.0 1392L2191.8 1401L2189.7 1394L2187.6 1399L2185.6 1391L2182.0 1388Z" fill="#181513" shape-rendering="auto"/>
<rect x="2201" y="1242" width="8" height="31" fill="#a5917a"/>
<rect x="2201" y="1275" width="8" height="137" fill="url(#gvt)"/>
<path d="M2201.0 1295L2203.2 1290L2204.6 1292L2206.3 1289L2209.0 1292L2209.0 1328L2207.6 1337L2206.1 1330L2204.8 1335L2203.4 1327L2201.0 1324Z" fill="#181513" shape-rendering="auto"/>
<path d="M2201.0 1364L2203.2 1359L2204.6 1361L2206.3 1358L2209.0 1361L2209.0 1392L2207.6 1401L2206.1 1394L2204.8 1399L2203.4 1391L2201.0 1388Z" fill="#181513" shape-rendering="auto"/>
<rect x="2219" y="1242" width="7" height="31" fill="#a5917a"/>
<rect x="2219" y="1275" width="7" height="137" fill="url(#gvt)"/>
<text x="2222.5" y="1265" font-size="21" fill="#1f1a14" shape-rendering="auto" stroke="#1f1a14" stroke-width="0.15">f</text>
<path d="M2219.0 1295L2221.0 1290L2222.2 1292L2223.6 1289L2226.0 1292L2226.0 1328L2224.7 1337L2223.5 1330L2222.3 1335L2221.1 1327L2219.0 1324Z" fill="#181513" shape-rendering="auto"/>
<path d="M2219.0 1364L2221.0 1359L2222.2 1361L2223.6 1358L2226.0 1361L2226.0 1392L2224.7 1401L2223.5 1394L2222.3 1399L2221.1 1391L2219.0 1388Z" fill="#181513" shape-rendering="auto"/>
<rect x="2239" y="1242" width="6" height="31" fill="#a5917a"/>
<rect x="2239" y="1275" width="6" height="137" fill="url(#gvt)"/>
<text x="2242.5" y="1265" font-size="21" fill="#1f1a14" shape-rendering="auto" stroke="#1f1a14" stroke-width="0.15">f</text>
<path d="M2239.0 1295L2240.7 1290L2241.7 1292L2243.0 1289L2245.0 1292L2245.0 1328L2243.9 1337L2242.8 1330L2241.8 1335L2240.8 1327L2239.0 1324Z" fill="#181513" shape-rendering="auto"/>
<path d="M2239.0 1364L2240.7 1359L2241.7 1361L2243.0 1358L2245.0 1361L2245.0 1392L2243.9 1401L2242.8 1394L2241.8 1399L2240.8 1391L2239.0 1388Z" fill="#181513" shape-rendering="auto"/>
<rect x="2257" y="1242" width="12" height="31" fill="#a5917a"/>
<rect x="2257" y="1275" width="12" height="137" fill="url(#gvt)"/>
<text x="2260.5" y="1265" font-size="21" fill="#1f1a14" shape-rendering="auto" stroke="#1f1a14" stroke-width="0.15">f</text>
<path d="M2257.0 1295L2260.4 1290L2262.4 1292L2264.9 1289L2269.0 1292L2269.0 1328L2266.8 1337L2264.7 1330L2262.6 1335L2260.6 1327L2257.0 1324Z" fill="#181513" shape-rendering="auto"/>
<path d="M2257.0 1364L2260.4 1359L2262.4 1361L2264.9 1358L2269.0 1361L2269.0 1392L2266.8 1401L2264.7 1394L2262.6 1399L2260.6 1391L2257.0 1388Z" fill="#181513" shape-rendering="auto"/>
<rect x="1686" y="1240" width="11" height="35" fill="#5a4a3c"/>
<rect x="1722" y="1240" width="12" height="35" fill="#5a4a3c"/>
<rect x="1779" y="1240" width="12" height="35" fill="#5a4a3c"/>
<rect x="1797" y="1240" width="12" height="35" fill="#5a4a3c"/>
<rect x="1835" y="1240" width="11" height="35" fill="#5a4a3c"/>
<rect x="1853" y="1240" width="13" height="35" fill="#5a4a3c"/>
<rect x="1910" y="1240" width="11" height="35" fill="#5a4a3c"/>
<rect x="1946" y="1240" width="12" height="35" fill="#5a4a3c"/>
<rect x="2003" y="1240" width="12" height="35" fill="#5a4a3c"/>
<rect x="2021" y="1240" width="12" height="35" fill="#5a4a3c"/>
<rect x="2059" y="1240" width="11" height="35" fill="#5a4a3c"/>
<rect x="2077" y="1240" width="12" height="35" fill="#5a4a3c"/>
<rect x="2134" y="1240" width="10" height="35" fill="#5a4a3c"/>
<rect x="2170" y="1240" width="12" height="35" fill="#5a4a3c"/>
<rect x="2226" y="1240" width="13" height="35" fill="#5a4a3c"/>
<rect x="2245" y="1240" width="12" height="35" fill="#5a4a3c"/>
<rect x="1686" y="1240" width="6" height="34" fill="#676767"/>
<rect x="1686" y="1274" width="6" height="138" fill="#2d2d2d"/>
<path d="M1686 1292L1688.4 1289L1692 1293V1329L1690.2 1335 L1688.1 1330L1686 1333Z" fill="#5a5a5a" shape-rendering="auto"/>
<path d="M1686 1361L1688.4 1358L1692 1362V1394L1690.2 1400 L1688.1 1395L1686 1398Z" fill="#5a5a5a" shape-rendering="auto"/>
<rect x="1704" y="1240" width="10" height="34" fill="#676767"/>
<rect x="1704" y="1274" width="10" height="138" fill="#2d2d2d"/>
<path d="M1704 1292L1708 1289L1714 1293V1329L1711 1335 L1707.5 1330L1704 1333Z" fill="#5a5a5a" shape-rendering="auto"/>
<path d="M1704 1361L1708 1358L1714 1362V1394L1711 1400 L1707.5 1395L1704 1398Z" fill="#5a5a5a" shape-rendering="auto"/>
<rect x="1722" y="1240" width="8" height="34" fill="#676767"/>
<rect x="1722" y="1274" width="8" height="138" fill="#2d2d2d"/>
<path d="M1722 1292L1725.2 1289L1730 1293V1329L1727.6 1335 L1724.8 1330L1722 1333Z" fill="#5a5a5a" shape-rendering="auto"/>
<path d="M1722 1361L1725.2 1358L1730 1362V1394L1727.6 1400 L1724.8 1395L1722 1398Z" fill="#5a5a5a" shape-rendering="auto"/>
<rect x="1761" y="1240" width="6" height="34" fill="#676767"/>
<rect x="1761" y="1274" width="6" height="138" fill="#2d2d2d"/>
<path d="M1761 1292L1763.4 1289L1767 1293V1329L1765.2 1335 L1763.1 1330L1761 1333Z" fill="#5a5a5a" shape-rendering="auto"/>
<path d="M1761 1361L1763.4 1358L1767 1362V1394L1765.2 1400 L1763.1 1395L1761 1398Z" fill="#5a5a5a" shape-rendering="auto"/>
<rect x="1779" y="1240" width="10" height="34" fill="#676767"/>
<rect x="1779" y="1274" width="10" height="138" fill="#2d2d2d"/>
<path d="M1779 1292L1783 1289L1789 1293V1329L1786 1335 L1782.5 1330L1779 1333Z" fill="#5a5a5a" shape-rendering="auto"/>
<path d="M1779 1361L1783 1358L1789 1362V1394L1786 1400 L1782.5 1395L1779 1398Z" fill="#5a5a5a" shape-rendering="auto"/>
<rect x="1797" y="1240" width="8" height="34" fill="#676767"/>
<rect x="1797" y="1274" width="8" height="138" fill="#2d2d2d"/>
<path d="M1797 1292L1800.2 1289L1805 1293V1329L1802.6 1335 L1799.8 1330L1797 1333Z" fill="#5a5a5a" shape-rendering="auto"/>
<path d="M1797 1361L1800.2 1358L1805 1362V1394L1802.6 1400 L1799.8 1395L1797 1398Z" fill="#5a5a5a" shape-rendering="auto"/>
<rect x="1835" y="1240" width="6" height="34" fill="#676767"/>
<rect x="1835" y="1274" width="6" height="138" fill="#2d2d2d"/>
<path d="M1835 1292L1837.4 1289L1841 1293V1329L1839.2 1335 L1837.1 1330L1835 1333Z" fill="#5a5a5a" shape-rendering="auto"/>
<path d="M1835 1361L1837.4 1358L1841 1362V1394L1839.2 1400 L1837.1 1395L1835 1398Z" fill="#5a5a5a" shape-rendering="auto"/>
<rect x="1853" y="1240" width="11" height="34" fill="#676767"/>
<rect x="1853" y="1274" width="11" height="138" fill="#2d2d2d"/>
<path d="M1853 1292L1857.4 1289L1864 1293V1329L1860.7 1335 L1856.85 1330L1853 1333Z" fill="#5a5a5a" shape-rendering="auto"/>
<path d="M1853 1361L1857.4 1358L1864 1362V1394L1860.7 1400 L1856.85 1395L1853 1398Z" fill="#5a5a5a" shape-rendering="auto"/>
<rect x="1872" y="1240" width="7" height="34" fill="#676767"/>
<rect x="1872" y="1274" width="7" height="138" fill="#2d2d2d"/>
<path d="M1872 1292L1874.8 1289L1879 1293V1329L1876.9 1335 L1874.45 1330L1872 1333Z" fill="#5a5a5a" shape-rendering="auto"/>
<path d="M1872 1361L1874.8 1358L1879 1362V1394L1876.9 1400 L1874.45 1395L1872 1398Z" fill="#5a5a5a" shape-rendering="auto"/>
<rect x="1910" y="1240" width="6" height="34" fill="#676767"/>
<rect x="1910" y="1274" width="6" height="138" fill="#2d2d2d"/>
<path d="M1910 1292L1912.4 1289L1916 1293V1329L1914.2 1335 L1912.1 1330L1910 1333Z" fill="#5a5a5a" shape-rendering="auto"/>
<path d="M1910 1361L1912.4 1358L1916 1362V1394L1914.2 1400 L1912.1 1395L1910 1398Z" fill="#5a5a5a" shape-rendering="auto"/>
<rect x="1928" y="1240" width="10" height="34" fill="#676767"/>
<rect x="1928" y="1274" width="10" height="138" fill="#2d2d2d"/>
<path d="M1928 1292L1932 1289L1938 1293V1329L1935 1335 L1931.5 1330L1928 1333Z" fill="#5a5a5a" shape-rendering="auto"/>
<path d="M1928 1361L1932 1358L1938 1362V1394L1935 1400 L1931.5 1395L1928 1398Z" fill="#5a5a5a" shape-rendering="auto"/>
<rect x="1946" y="1240" width="8" height="34" fill="#676767"/>
<rect x="1946" y="1274" width="8" height="138" fill="#2d2d2d"/>
<path d="M1946 1292L1949.2 1289L1954 1293V1329L1951.6 1335 L1948.8 1330L1946 1333Z" fill="#5a5a5a" shape-rendering="auto"/>
<path d="M1946 1361L1949.2 1358L1954 1362V1394L1951.6 1400 L1948.8 1395L1946 1398Z" fill="#5a5a5a" shape-rendering="auto"/>
<rect x="1985" y="1240" width="6" height="34" fill="#676767"/>
<rect x="1985" y="1274" width="6" height="138" fill="#2d2d2d"/>
<path d="M1985 1292L1987.4 1289L1991 1293V1329L1989.2 1335 L1987.1 1330L1985 1333Z" fill="#5a5a5a" shape-rendering="auto"/>
<path d="M1985 1361L1987.4 1358L1991 1362V1394L1989.2 1400 L1987.1 1395L1985 1398Z" fill="#5a5a5a" shape-rendering="auto"/>
<rect x="2003" y="1240" width="10" height="34" fill="#676767"/>
<rect x="2003" y="1274" width="10" height="138" fill="#2d2d2d"/>
<path d="M2003 1292L2007 1289L2013 1293V1329L2010 1335 L2006.5 1330L2003 1333Z" fill="#5a5a5a" shape-rendering="auto"/>
<path d="M2003 1361L2007 1358L2013 1362V1394L2010 1400 L2006.5 1395L2003 1398Z" fill="#5a5a5a" shape-rendering="auto"/>
<rect x="2021" y="1240" width="8" height="34" fill="#676767"/>
<rect x="2021" y="1274" width="8" height="138" fill="#2d2d2d"/>
<path d="M2021 1292L2024.2 1289L2029 1293V1329L2026.6 1335 L2023.8 1330L2021 1333Z" fill="#5a5a5a" shape-rendering="auto"/>
<path d="M2021 1361L2024.2 1358L2029 1362V1394L2026.6 1400 L2023.8 1395L2021 1398Z" fill="#5a5a5a" shape-rendering="auto"/>
<rect x="2059" y="1240" width="6" height="34" fill="#676767"/>
<rect x="2059" y="1274" width="6" height="138" fill="#2d2d2d"/>
<path d="M2059 1292L2061.4 1289L2065 1293V1329L2063.2 1335 L2061.1 1330L2059 1333Z" fill="#5a5a5a" shape-rendering="auto"/>
<path d="M2059 1361L2061.4 1358L2065 1362V1394L2063.2 1400 L2061.1 1395L2059 1398Z" fill="#5a5a5a" shape-rendering="auto"/>
<rect x="2077" y="1240" width="10" height="34" fill="#676767"/>
<rect x="2077" y="1274" width="10" height="138" fill="#2d2d2d"/>
<path d="M2077 1292L2081 1289L2087 1293V1329L2084 1335 L2080.5 1330L2077 1333Z" fill="#5a5a5a" shape-rendering="auto"/>
<path d="M2077 1361L2081 1358L2087 1362V1394L2084 1400 L2080.5 1395L2077 1398Z" fill="#5a5a5a" shape-rendering="auto"/>
<rect x="2095" y="1240" width="8" height="34" fill="#676767"/>
<rect x="2095" y="1274" width="8" height="138" fill="#2d2d2d"/>
<path d="M2095 1292L2098.2 1289L2103 1293V1329L2100.6 1335 L2097.8 1330L2095 1333Z" fill="#5a5a5a" shape-rendering="auto"/>
<path d="M2095 1361L2098.2 1358L2103 1362V1394L2100.6 1400 L2097.8 1395L2095 1398Z" fill="#5a5a5a" shape-rendering="auto"/>
<rect x="2134" y="1240" width="6" height="34" fill="#676767"/>
<rect x="2134" y="1274" width="6" height="138" fill="#2d2d2d"/>
<path d="M2134 1292L2136.4 1289L2140 1293V1329L2138.2 1335 L2136.1 1330L2134 1333Z" fill="#5a5a5a" shape-rendering="auto"/>
<path d="M2134 1361L2136.4 1358L2140 1362V1394L2138.2 1400 L2136.1 1395L2134 1398Z" fill="#5a5a5a" shape-rendering="auto"/>
<rect x="2152" y="1240" width="10" height="34" fill="#676767"/>
<rect x="2152" y="1274" width="10" height="138" fill="#2d2d2d"/>
<path d="M2152 1292L2156 1289L2162 1293V1329L2159 1335 L2155.5 1330L2152 1333Z" fill="#5a5a5a" shape-rendering="auto"/>
<path d="M2152 1361L2156 1358L2162 1362V1394L2159 1400 L2155.5 1395L2152 1398Z" fill="#5a5a5a" shape-rendering="auto"/>
<rect x="2170" y="1240" width="8" height="34" fill="#676767"/>
<rect x="2170" y="1274" width="8" height="138" fill="#2d2d2d"/>
<path d="M2170 1292L2173.2 1289L2178 1293V1329L2175.6 1335 L2172.8 1330L2170 1333Z" fill="#5a5a5a" shape-rendering="auto"/>
<path d="M2170 1361L2173.2 1358L2178 1362V1394L2175.6 1400 L2172.8 1395L2170 1398Z" fill="#5a5a5a" shape-rendering="auto"/>
<rect x="2209" y="1240" width="6" height="34" fill="#676767"/>
<rect x="2209" y="1274" width="6" height="138" fill="#2d2d2d"/>
<path d="M2209 1292L2211.4 1289L2215 1293V1329L2213.2 1335 L2211.1 1330L2209 1333Z" fill="#5a5a5a" shape-rendering="auto"/>
<path d="M2209 1361L2211.4 1358L2215 1362V1394L2213.2 1400 L2211.1 1395L2209 1398Z" fill="#5a5a5a" shape-rendering="auto"/>
<rect x="2226" y="1240" width="11" height="34" fill="#676767"/>
<rect x="2226" y="1274" width="11" height="138" fill="#2d2d2d"/>
<path d="M2226 1292L2230.4 1289L2237 1293V1329L2233.7 1335 L2229.85 1330L2226 1333Z" fill="#5a5a5a" shape-rendering="auto"/>
<path d="M2226 1361L2230.4 1358L2237 1362V1394L2233.7 1400 L2229.85 1395L2226 1398Z" fill="#5a5a5a" shape-rendering="auto"/>
<rect x="2245" y="1240" width="7" height="34" fill="#676767"/>
<rect x="2245" y="1274" width="7" height="138" fill="#2d2d2d"/>
<path d="M2245 1292L2247.8 1289L2252 1293V1329L2249.9 1335 L2247.45 1330L2245 1333Z" fill="#5a5a5a" shape-rendering="auto"/>
<path d="M2245 1361L2247.8 1358L2252 1362V1394L2249.9 1400 L2247.45 1395L2245 1398Z" fill="#5a5a5a" shape-rendering="auto"/>
<rect x="634" y="1418" width="9.59585" height="9" fill="#f3a87e"/>
<rect x="634" y="1418" width="2" height="9" fill="#000" opacity="0.1"/>
<rect x="634" y="1418" width="9.59585" height="9" fill="#000" opacity="0.085"/>
<rect x="896" y="1418" width="36" height="9" fill="#f3a87e"/>
<rect x="896" y="1418" width="2" height="9" fill="#000" opacity="0.1"/>
<rect x="298" y="1429" width="38" height="9" fill="#f3a87e"/>
<rect x="298" y="1429" width="2" height="9" fill="#000" opacity="0.1"/>
<rect x="596" y="1429" width="38" height="9" fill="#f3a87e"/>
<rect x="596" y="1429" width="2" height="9" fill="#000" opacity="0.1"/>
<rect x="596" y="1429" width="38" height="9" fill="#000" opacity="0.085"/>
<rect x="466" y="1440" width="150" height="9" fill="#f3a87e"/>
<rect x="484" y="1440" width="2" height="9" fill="#000" opacity="0.1"/>
<rect x="522" y="1440" width="2" height="9" fill="#000" opacity="0.1"/>
<rect x="560" y="1440" width="2" height="9" fill="#000" opacity="0.1"/>
<rect x="596" y="1440" width="2" height="9" fill="#000" opacity="0.1"/>
<rect x="596" y="1440" width="20" height="9" fill="#000" opacity="0.085"/>
<rect x="634" y="1451" width="74" height="9" fill="#f3a87e"/>
<rect x="634" y="1451" width="2" height="9" fill="#000" opacity="0.1"/>
<rect x="672" y="1451" width="2" height="9" fill="#000" opacity="0.1"/>
<rect x="634" y="1451" width="74" height="9" fill="#000" opacity="0.085"/>
<rect x="932" y="1451" width="76" height="9" fill="#f3a87e"/>
<rect x="932" y="1451" width="2" height="9" fill="#000" opacity="0.1"/>
<rect x="970" y="1451" width="2" height="9" fill="#000" opacity="0.1"/>
<rect x="336" y="1462" width="148" height="9" fill="#f3a87e"/>
<rect x="336" y="1462" width="2" height="9" fill="#000" opacity="0.1"/>
<rect x="374" y="1462" width="2" height="9" fill="#000" opacity="0.1"/>
<rect x="410" y="1462" width="2" height="9" fill="#000" opacity="0.1"/>
<rect x="448" y="1462" width="2" height="9" fill="#000" opacity="0.1"/>
<rect x="484" y="1473" width="150" height="9" fill="#f3a87e"/>
<rect x="484" y="1473" width="2" height="9" fill="#000" opacity="0.1"/>
<rect x="522" y="1473" width="2" height="9" fill="#000" opacity="0.1"/>
<rect x="560" y="1473" width="2" height="9" fill="#000" opacity="0.1"/>
<rect x="596" y="1473" width="2" height="9" fill="#000" opacity="0.1"/>
<rect x="596" y="1473" width="38" height="9" fill="#000" opacity="0.085"/>
<rect x="1492" y="1418" width="38" height="9" fill="#f3a87e"/>
<rect x="1492" y="1418" width="2" height="9" fill="#000" opacity="0.1"/>
<rect x="1678" y="1418" width="10.1638" height="9" fill="#f3a87e"/>
<rect x="1678" y="1418" width="2" height="9" fill="#000" opacity="0.1"/>
<rect x="1194" y="1429" width="38" height="9" fill="#f3a87e"/>
<rect x="1194" y="1429" width="2" height="9" fill="#000" opacity="0.1"/>
<rect x="1194" y="1429" width="38" height="9" fill="#000" opacity="0.085"/>
<rect x="1492" y="1429" width="38" height="9" fill="#f3a87e"/>
<rect x="1492" y="1429" width="2" height="9" fill="#000" opacity="0.1"/>
<rect x="1642" y="1429" width="36" height="9" fill="#f3a87e"/>
<rect x="1642" y="1429" width="2" height="9" fill="#000" opacity="0.1"/>
<rect x="1362" y="1440" width="148" height="9" fill="#f3a87e"/>
<rect x="1380" y="1440" width="2" height="9" fill="#000" opacity="0.1"/>
<rect x="1418" y="1440" width="2" height="9" fill="#000" opacity="0.1"/>
<rect x="1454" y="1440" width="2" height="9" fill="#000" opacity="0.1"/>
<rect x="1492" y="1440" width="2" height="9" fill="#000" opacity="0.1"/>
<rect x="1362" y="1440" width="130" height="9" fill="#000" opacity="0.085"/>
<rect x="1530" y="1451" width="74" height="9" fill="#f3a87e"/>
<rect x="1530" y="1451" width="2" height="9" fill="#000" opacity="0.1"/>
<rect x="1566" y="1451" width="2" height="9" fill="#000" opacity="0.1"/>
<rect x="1678" y="1451" width="76" height="9" fill="#f3a87e"/>
<rect x="1678" y="1451" width="2" height="9" fill="#000" opacity="0.1"/>
<rect x="1716" y="1451" width="2" height="9" fill="#000" opacity="0.1"/>
<rect x="1232" y="1462" width="148" height="9" fill="#f3a87e"/>
<rect x="1232" y="1462" width="2" height="9" fill="#000" opacity="0.1"/>
<rect x="1268" y="1462" width="2" height="9" fill="#000" opacity="0.1"/>
<rect x="1306" y="1462" width="2" height="9" fill="#000" opacity="0.1"/>
<rect x="1344" y="1462" width="2" height="9" fill="#000" opacity="0.1"/>
<rect x="1232" y="1462" width="148" height="9" fill="#000" opacity="0.085"/>
<rect x="1380" y="1473" width="150" height="9" fill="#f3a87e"/>
<rect x="1380" y="1473" width="2" height="9" fill="#000" opacity="0.1"/>
<rect x="1418" y="1473" width="2" height="9" fill="#000" opacity="0.1"/>
<rect x="1454" y="1473" width="2" height="9" fill="#000" opacity="0.1"/>
<rect x="1492" y="1473" width="2" height="9" fill="#000" opacity="0.1"/>
<rect x="1380" y="1473" width="112" height="9" fill="#000" opacity="0.085"/>
<rect x="1940" y="1418" width="38" height="9" fill="#f3a87e"/>
<rect x="1940" y="1418" width="2" height="9" fill="#000" opacity="0.1"/>
<rect x="1940" y="1418" width="38" height="9" fill="#000" opacity="0.085"/>
<rect x="2238" y="1429" width="38" height="9" fill="#f3a87e"/>
<rect x="2238" y="1429" width="2" height="9" fill="#000" opacity="0.1"/>
<rect x="2276" y="1451" width="74" height="9" fill="#f3a87e"/>
<rect x="2276" y="1451" width="2" height="9" fill="#000" opacity="0.1"/>
<rect x="2312" y="1451" width="2" height="9" fill="#000" opacity="0.1"/>
<rect x="2276" y="1462" width="148" height="9" fill="#f3a87e"/>
<rect x="2276" y="1462" width="2" height="9" fill="#000" opacity="0.1"/>
<rect x="2312" y="1462" width="2" height="9" fill="#000" opacity="0.1"/>
<rect x="2350" y="1462" width="2" height="9" fill="#000" opacity="0.1"/>
<rect x="2388" y="1462" width="2" height="9" fill="#000" opacity="0.1"/>
<rect x="2388" y="1462" width="36" height="9" fill="#000" opacity="0.085"/>
<rect x="38" y="1488" width="596" height="34" fill="#c79e40"/>
<rect x="38" y="1488" width="596" height="2" fill="#8f7230"/>
<rect x="38" y="1520" width="596" height="2" fill="#8f7230"/>
<rect x="38" y="1488" width="2" height="34" fill="#8f7230"/>
<path d="M40 1490L44 1490L40 1520Z" fill="#b28c35" shape-rendering="auto"/>
<path d="M626 1490H634V1520H632Z" fill="#ab8733" shape-rendering="auto"/>
<rect x="186" y="1490" width="2" height="6" fill="#17130a"/>
<rect x="186" y="1514" width="2" height="6" fill="#17130a"/>
<rect x="336" y="1490" width="2" height="6" fill="#17130a"/>
<rect x="336" y="1514" width="2" height="6" fill="#17130a"/>
<rect x="484" y="1490" width="2" height="6" fill="#17130a"/>
<rect x="484" y="1514" width="2" height="6" fill="#17130a"/>
<text x="44" y="1511.5" font-size="20.5" fill="#241b08" textLength="268" lengthAdjust="spacingAndGlyphs" shape-rendering="auto" stroke="#241b08" stroke-width="0.4">EQ06 eFx Midnite Tokyo 065</text>
<rect x="932" y="1488" width="746" height="34" fill="#c79e40"/>
<rect x="932" y="1488" width="746" height="2" fill="#8f7230"/>
<rect x="932" y="1520" width="746" height="2" fill="#8f7230"/>
<rect x="932" y="1488" width="2" height="34" fill="#8f7230"/>
<path d="M934 1490L938 1490L934 1520Z" fill="#b28c35" shape-rendering="auto"/>
<path d="M1670 1490H1678V1520H1676Z" fill="#ab8733" shape-rendering="auto"/>
<rect x="1082" y="1490" width="2" height="6" fill="#17130a"/>
<rect x="1082" y="1514" width="2" height="6" fill="#17130a"/>
<rect x="1380" y="1490" width="2" height="6" fill="#17130a"/>
<rect x="1380" y="1514" width="2" height="6" fill="#17130a"/>
<text x="938" y="1511.5" font-size="20.5" fill="#241b08" textLength="268" lengthAdjust="spacingAndGlyphs" shape-rendering="auto" stroke="#241b08" stroke-width="0.4">EQ06 eFx Midnite Tokyo 065</text>
<rect x="2276" y="1488" width="298" height="34" fill="#c79e40"/>
<rect x="2276" y="1488" width="298" height="2" fill="#8f7230"/>
<rect x="2276" y="1520" width="298" height="2" fill="#8f7230"/>
<rect x="2276" y="1488" width="2" height="34" fill="#8f7230"/>
<path d="M2278 1490L2282 1490L2278 1520Z" fill="#b28c35" shape-rendering="auto"/>
<path d="M2566 1490H2574V1520H2572Z" fill="#ab8733" shape-rendering="auto"/>
<rect x="2424" y="1490" width="2" height="6" fill="#17130a"/>
<rect x="2424" y="1514" width="2" height="6" fill="#17130a"/>
<text x="2282" y="1511.5" font-size="20.5" fill="#241b08" textLength="268" lengthAdjust="spacingAndGlyphs" shape-rendering="auto" stroke="#241b08" stroke-width="0.4">EQ06 eFx Midnite Tokyo 065</text>
<text x="2582" y="1580" font-size="33.5" fill="#858585" textLength="54" lengthAdjust="spacingAndGlyphs" text-anchor="end" shape-rendering="auto" stroke="#858585" stroke-width="1.1" opacity="0.88">2/1</text>
<rect x="0" y="1554" width="2" height="34" fill="#5bc8dc"/>
<rect x="36" y="72" width="2544" height="22" fill="#5c5c5c"/>
<rect x="36" y="72" width="2544" height="2" fill="#9a9a9a"/>
<rect x="36" y="92" width="2544" height="2" fill="#9a9a9a"/>
<rect x="36" y="72" width="2" height="1520" fill="#9a9a9a"/>
<rect x="2578" y="72" width="2" height="1520" fill="#9a9a9a"/>
<path d="M38 75L52.5 83L38 91" stroke="#9a9a9a" stroke-width="2" fill="#5c5c5c" shape-rendering="auto"/>
<path d="M2578 75L2563.5 83L2578 91" stroke="#9a9a9a" stroke-width="2" fill="#5c5c5c" shape-rendering="auto"/>
<path d="M2580 96L2588 100.5V109.5L2580 114Z" fill="#5c5c5c" shape-rendering="auto"/><path d="M2580 96.5L2588.5 101M2588.5 109L2580 113.5" stroke="#9a9a9a" stroke-width="2" fill="none" shape-rendering="auto"/>
<rect x="58" y="94" width="56.5" height="22" fill="#363636"/>
<path d="M38 96.5L52.5 105L38 113.5" stroke="#9a9a9a" stroke-width="2" fill="#5c5c5c" shape-rendering="auto"/>
<text x="60.5" y="112" font-size="20" fill="#c9c9c9" textLength="50.5" lengthAdjust="spacingAndGlyphs" shape-rendering="auto" stroke="#c9c9c9" stroke-width="0.35">Start</text>
<rect x="634" y="94" width="2" height="1498" fill="#9a9a9a"/>
<rect x="656" y="94" width="93" height="22" fill="#363636"/>
<path d="M636 96.5L650.5 105L636 113.5" stroke="#9a9a9a" stroke-width="2" fill="#5c5c5c" shape-rendering="auto"/>
<text x="658.5" y="112" font-size="20" fill="#c9c9c9" textLength="87" lengthAdjust="spacingAndGlyphs" shape-rendering="auto" stroke="#c9c9c9" stroke-width="0.35">DROP 1.1</text>
<rect x="932" y="94" width="2" height="1498" fill="#9a9a9a"/>
<rect x="954" y="94" width="89.5" height="22" fill="#363636"/>
<path d="M934 96.5L948.5 105L934 113.5" stroke="#9a9a9a" stroke-width="2" fill="#5c5c5c" shape-rendering="auto"/>
<text x="956.5" y="112" font-size="20" fill="#c9c9c9" textLength="83.5" lengthAdjust="spacingAndGlyphs" shape-rendering="auto" stroke="#c9c9c9" stroke-width="0.35">DROP1.2</text>
<rect x="1232" y="94" width="2" height="1498" fill="#9a9a9a"/>
<rect x="1254" y="94" width="70" height="22" fill="#363636"/>
<path d="M1234 96.5L1248.5 105L1234 113.5" stroke="#9a9a9a" stroke-width="2" fill="#5c5c5c" shape-rendering="auto"/>
<text x="1256.5" y="112" font-size="20" fill="#c9c9c9" textLength="64" lengthAdjust="spacingAndGlyphs" shape-rendering="auto" stroke="#c9c9c9" stroke-width="0.35">BREAK</text>
<rect x="1530" y="94" width="2" height="1498" fill="#9a9a9a"/>
<rect x="1552" y="94" width="89.5" height="22" fill="#363636"/>
<path d="M1532 96.5L1546.5 105L1532 113.5" stroke="#9a9a9a" stroke-width="2" fill="#5c5c5c" shape-rendering="auto"/>
<text x="1554.5" y="112" font-size="20" fill="#c9c9c9" textLength="83.5" lengthAdjust="spacingAndGlyphs" shape-rendering="auto" stroke="#c9c9c9" stroke-width="0.35">DROP2.1</text>
<rect x="1678" y="94" width="2" height="1498" fill="#9a9a9a"/>
<rect x="1700" y="94" width="89.5" height="22" fill="#363636"/>
<path d="M1680 96.5L1694.5 105L1680 113.5" stroke="#9a9a9a" stroke-width="2" fill="#5c5c5c" shape-rendering="auto"/>
<text x="1702.5" y="112" font-size="20" fill="#c9c9c9" textLength="83.5" lengthAdjust="spacingAndGlyphs" shape-rendering="auto" stroke="#c9c9c9" stroke-width="0.35">DROP2,2</text>
<rect x="1978" y="94" width="2" height="1498" fill="#9a9a9a"/>
<rect x="2000" y="94" width="89.5" height="22" fill="#363636"/>
<path d="M1980 96.5L1994.5 105L1980 113.5" stroke="#9a9a9a" stroke-width="2" fill="#5c5c5c" shape-rendering="auto"/>
<text x="2002.5" y="112" font-size="20" fill="#c9c9c9" textLength="83.5" lengthAdjust="spacingAndGlyphs" shape-rendering="auto" stroke="#c9c9c9" stroke-width="0.35">DROP2.3</text>
<path d="M0 108H8.2L1.7 116H0Z" fill="#55c5dc" shape-rendering="auto"/>
<rect x="0" y="30" width="2592" height="42" fill="#363636"/>
<text x="9.5" y="68" font-size="20" fill="#9a9a9a" textLength="11.35" lengthAdjust="spacingAndGlyphs" shape-rendering="auto" stroke="#9a9a9a" stroke-width="0.3">1</text>
<text x="159.5" y="68" font-size="20" fill="#9a9a9a" textLength="11.35" lengthAdjust="spacingAndGlyphs" shape-rendering="auto" stroke="#9a9a9a" stroke-width="0.3">9</text>
<text x="307.5" y="68" font-size="20" fill="#9a9a9a" textLength="22.7" lengthAdjust="spacingAndGlyphs" shape-rendering="auto" stroke="#9a9a9a" stroke-width="0.3">17</text>
<text x="457.5" y="68" font-size="20" fill="#9a9a9a" textLength="22.7" lengthAdjust="spacingAndGlyphs" shape-rendering="auto" stroke="#9a9a9a" stroke-width="0.3">25</text>
<text x="605.5" y="68" font-size="20" fill="#9a9a9a" textLength="22.7" lengthAdjust="spacingAndGlyphs" shape-rendering="auto" stroke="#9a9a9a" stroke-width="0.3">33</text>
<text x="755.5" y="68" font-size="20" fill="#9a9a9a" textLength="22.7" lengthAdjust="spacingAndGlyphs" shape-rendering="auto" stroke="#9a9a9a" stroke-width="0.3">41</text>
<text x="905.5" y="68" font-size="20" fill="#9a9a9a" textLength="22.7" lengthAdjust="spacingAndGlyphs" shape-rendering="auto" stroke="#9a9a9a" stroke-width="0.3">49</text>
<text x="1053.5" y="68" font-size="20" fill="#9a9a9a" textLength="22.7" lengthAdjust="spacingAndGlyphs" shape-rendering="auto" stroke="#9a9a9a" stroke-width="0.3">57</text>
<text x="1203.5" y="68" font-size="20" fill="#9a9a9a" textLength="22.7" lengthAdjust="spacingAndGlyphs" shape-rendering="auto" stroke="#9a9a9a" stroke-width="0.3">65</text>
<text x="1353.5" y="68" font-size="20" fill="#9a9a9a" textLength="22.7" lengthAdjust="spacingAndGlyphs" shape-rendering="auto" stroke="#9a9a9a" stroke-width="0.3">73</text>
<text x="1501.5" y="68" font-size="20" fill="#9a9a9a" textLength="22.7" lengthAdjust="spacingAndGlyphs" shape-rendering="auto" stroke="#9a9a9a" stroke-width="0.3">81</text>
<text x="1651.5" y="68" font-size="20" fill="#9a9a9a" textLength="22.7" lengthAdjust="spacingAndGlyphs" shape-rendering="auto" stroke="#9a9a9a" stroke-width="0.3">89</text>
<text x="1799.5" y="68" font-size="20" fill="#9a9a9a" textLength="22.7" lengthAdjust="spacingAndGlyphs" shape-rendering="auto" stroke="#9a9a9a" stroke-width="0.3">97</text>
<text x="1949.5" y="68" font-size="20" fill="#9a9a9a" textLength="34.05" lengthAdjust="spacingAndGlyphs" shape-rendering="auto" stroke="#9a9a9a" stroke-width="0.3">105</text>
<text x="2099.5" y="68" font-size="20" fill="#9a9a9a" textLength="34.05" lengthAdjust="spacingAndGlyphs" shape-rendering="auto" stroke="#9a9a9a" stroke-width="0.3">113</text>
<text x="2247.5" y="68" font-size="20" fill="#9a9a9a" textLength="34.05" lengthAdjust="spacingAndGlyphs" shape-rendering="auto" stroke="#9a9a9a" stroke-width="0.3">121</text>
<text x="2397.5" y="68" font-size="20" fill="#9a9a9a" textLength="34.05" lengthAdjust="spacingAndGlyphs" shape-rendering="auto" stroke="#9a9a9a" stroke-width="0.3">129</text>
<text x="2545.5" y="68" font-size="20" fill="#9a9a9a" textLength="34.05" lengthAdjust="spacingAndGlyphs" shape-rendering="auto" stroke="#9a9a9a" stroke-width="0.3">137</text>
<path d="M1 72V61H5M75 72V70M151 72V61H155M225 72V70M299 72V61H303M375 72V70M449 72V61H453M523 72V70M597 72V61H601M673 72V70M747 72V61H751M821 72V70M897 72V61H901M971 72V70M1045 72V61H1049M1121 72V70M1195 72V61H1199M1269 72V70M1345 72V61H1349M1419 72V70M1493 72V61H1497M1567 72V70M1643 72V61H1647M1717 72V70M1791 72V61H1795M1867 72V70M1941 72V61H1945M2015 72V70M2091 72V61H2095M2165 72V70M2239 72V61H2243M2313 72V70M2389 72V61H2393M2463 72V70M2537 72V61H2541" stroke="#8a8a8a" stroke-width="2" fill="none"/>
<text x="7" y="1614" font-size="20" fill="#9a9a9a" textLength="40.5" lengthAdjust="spacingAndGlyphs" shape-rendering="auto" stroke="#9a9a9a" stroke-width="0.3">0:00</text>
<text x="167" y="1614" font-size="20" fill="#9a9a9a" textLength="40.5" lengthAdjust="spacingAndGlyphs" shape-rendering="auto" stroke="#9a9a9a" stroke-width="0.3">0:15</text>
<text x="327" y="1614" font-size="20" fill="#9a9a9a" textLength="40.5" lengthAdjust="spacingAndGlyphs" shape-rendering="auto" stroke="#9a9a9a" stroke-width="0.3">0:30</text>
<text x="487" y="1614" font-size="20" fill="#9a9a9a" textLength="40.5" lengthAdjust="spacingAndGlyphs" shape-rendering="auto" stroke="#9a9a9a" stroke-width="0.3">0:45</text>
<text x="645" y="1614" font-size="20" fill="#9a9a9a" textLength="40.5" lengthAdjust="spacingAndGlyphs" shape-rendering="auto" stroke="#9a9a9a" stroke-width="0.3">1:00</text>
<text x="805" y="1614" font-size="20" fill="#9a9a9a" textLength="40.5" lengthAdjust="spacingAndGlyphs" shape-rendering="auto" stroke="#9a9a9a" stroke-width="0.3">1:15</text>
<text x="965" y="1614" font-size="20" fill="#9a9a9a" textLength="40.5" lengthAdjust="spacingAndGlyphs" shape-rendering="auto" stroke="#9a9a9a" stroke-width="0.3">1:30</text>
<text x="1125" y="1614" font-size="20" fill="#9a9a9a" textLength="40.5" lengthAdjust="spacingAndGlyphs" shape-rendering="auto" stroke="#9a9a9a" stroke-width="0.3">1:45</text>
<text x="1285" y="1614" font-size="20" fill="#9a9a9a" textLength="40.5" lengthAdjust="spacingAndGlyphs" shape-rendering="auto" stroke="#9a9a9a" stroke-width="0.3">2:00</text>
<text x="1445" y="1614" font-size="20" fill="#9a9a9a" textLength="40.5" lengthAdjust="spacingAndGlyphs" shape-rendering="auto" stroke="#9a9a9a" stroke-width="0.3">2:15</text>
<text x="1605" y="1614" font-size="20" fill="#9a9a9a" textLength="40.5" lengthAdjust="spacingAndGlyphs" shape-rendering="auto" stroke="#9a9a9a" stroke-width="0.3">2:30</text>
<text x="1765" y="1614" font-size="20" fill="#9a9a9a" textLength="40.5" lengthAdjust="spacingAndGlyphs" shape-rendering="auto" stroke="#9a9a9a" stroke-width="0.3">2:45</text>
<text x="1923" y="1614" font-size="20" fill="#9a9a9a" textLength="40.5" lengthAdjust="spacingAndGlyphs" shape-rendering="auto" stroke="#9a9a9a" stroke-width="0.3">3:00</text>
<text x="2083" y="1614" font-size="20" fill="#9a9a9a" textLength="40.5" lengthAdjust="spacingAndGlyphs" shape-rendering="auto" stroke="#9a9a9a" stroke-width="0.3">3:15</text>
<text x="2243" y="1614" font-size="20" fill="#9a9a9a" textLength="40.5" lengthAdjust="spacingAndGlyphs" shape-rendering="auto" stroke="#9a9a9a" stroke-width="0.3">3:30</text>
<text x="2403" y="1614" font-size="20" fill="#9a9a9a" textLength="40.5" lengthAdjust="spacingAndGlyphs" shape-rendering="auto" stroke="#9a9a9a" stroke-width="0.3">3:45</text>
<path d="M1 1592V1607H4M55 1592V1596M107 1592V1596M161 1592V1607H164M213 1592V1596M267 1592V1596M321 1592V1607H324M373 1592V1596M427 1592V1596M481 1592V1607H484M533 1592V1596M587 1592V1596M639 1592V1607H642M693 1592V1596M747 1592V1596M799 1592V1607H802M853 1592V1596M907 1592V1596M959 1592V1607H962M1013 1592V1596M1065 1592V1596M1119 1592V1607H1122M1173 1592V1596M1225 1592V1596M1279 1592V1607H1282M1333 1592V1596M1385 1592V1596M1439 1592V1607H1442M1491 1592V1596M1545 1592V1596M1599 1592V1607H1602M1651 1592V1596M1705 1592V1596M1759 1592V1607H1762M1811 1592V1596M1865 1592V1596M1917 1592V1607H1920M1971 1592V1596M2025 1592V1596M2077 1592V1607H2080M2131 1592V1596M2185 1592V1596M2237 1592V1607H2240M2291 1592V1596M2343 1592V1596M2397 1592V1607H2400M2451 1592V1596M2503 1592V1596M2557 1592V1596" stroke="#8a8a8a" stroke-width="2" fill="none"/>
<path d="M0 1594L8 1602H0Z" fill="#55c5dc" shape-rendering="auto"/>
<rect x="2592" y="120" width="206" height="104" fill="#a598b5"/>
<g shape-rendering="auto" stroke="#2a2530" fill="none" stroke-width="2">
<circle cx="2609" cy="137" r="11.8"/>
<path d="M2602.3 133H2612M2606.2 137H2616M2606.2 141H2616"/>
</g>
<text x="2629.5" y="144" font-size="20" fill="#2a2530" textLength="103.6" lengthAdjust="spacingAndGlyphs" shape-rendering="auto" stroke="#2a2530" stroke-width="0.75">Inst Group</text>
<rect x="2602" y="228" width="196" height="104" fill="#a598b5"/>
<g shape-rendering="auto" stroke="#2a2530" fill="none" stroke-width="2">
<circle cx="2619" cy="245" r="11.8"/>
<path d="M2612.3 241H2622M2616.2 245H2626M2616.2 249H2626"/>
</g>
<text x="2639.5" y="252" font-size="20" fill="#2a2530" textLength="136" lengthAdjust="spacingAndGlyphs" shape-rendering="auto" stroke="#2a2530" stroke-width="0.75">Chords Group</text>
<rect x="2612" y="336" width="186" height="104" fill="#a598b5"/>
<g shape-rendering="auto" stroke="#2a2530" fill="none" stroke-width="2">
<circle cx="2629" cy="353" r="11.8"/>
<path d="M2623 350H2635L2629 359.5Z" fill="#2a2530" stroke="none"/>
</g>
<text x="2649.5" y="360" font-size="20" fill="#2a2530" textLength="121.5" lengthAdjust="spacingAndGlyphs" shape-rendering="auto" stroke="#2a2530" stroke-width="0.75">Main Chords</text>
<rect x="2612" y="444" width="186" height="104" fill="#a598b5"/>
<g shape-rendering="auto" stroke="#2a2530" fill="none" stroke-width="2">
<circle cx="2629" cy="461" r="11.8"/>
<path d="M2623 458H2635L2629 467.5Z" fill="#2a2530" stroke="none"/>
</g>
<text x="2649.5" y="468" font-size="20" fill="#2a2530" textLength="114" lengthAdjust="spacingAndGlyphs" shape-rendering="auto" stroke="#2a2530" stroke-width="0.75">Add Chords</text>
<rect x="2602" y="552" width="196" height="104" fill="#a598b5"/>
<g shape-rendering="auto" stroke="#2a2530" fill="none" stroke-width="2">
<circle cx="2619" cy="569" r="11.8"/>
<path d="M2612.3 565H2622M2616.2 569H2626M2616.2 573H2626"/>
</g>
<text x="2639.5" y="576" font-size="20" fill="#2a2530" textLength="136.5" lengthAdjust="spacingAndGlyphs" shape-rendering="auto" stroke="#2a2530" stroke-width="0.75">Melody Group</text>
<rect x="2612" y="660" width="186" height="70" fill="#a598b5"/>
<g shape-rendering="auto" stroke="#2a2530" fill="none" stroke-width="2">
<circle cx="2629" cy="677" r="11.8"/>
<path d="M2623 674H2635L2629 683.5Z" fill="#2a2530" stroke="none"/>
</g>
<text x="2649.5" y="684" font-size="20" fill="#2a2530" textLength="82" lengthAdjust="spacingAndGlyphs" shape-rendering="auto" stroke="#2a2530" stroke-width="0.75">Melody1</text>
<rect x="2612" y="734" width="186" height="104" fill="#a598b5"/>
<g shape-rendering="auto" stroke="#2a2530" fill="none" stroke-width="2">
<circle cx="2629" cy="751" r="11.8"/>
<path d="M2623 748H2635L2629 757.5Z" fill="#2a2530" stroke="none"/>
</g>
<text x="2649.5" y="758" font-size="20" fill="#2a2530" textLength="86.5" lengthAdjust="spacingAndGlyphs" shape-rendering="auto" stroke="#2a2530" stroke-width="0.75">Melody 2</text>
<rect x="2602" y="842" width="196" height="104" fill="#a598b5"/>
<g shape-rendering="auto" stroke="#2a2530" fill="none" stroke-width="2">
<circle cx="2619" cy="859" r="11.8"/>
<path d="M2613 856H2625L2619 865.5Z" fill="#2a2530" stroke="none"/>
</g>
<text x="2639.5" y="866" font-size="20" fill="#2a2530" textLength="98.5" lengthAdjust="spacingAndGlyphs" shape-rendering="auto" stroke="#2a2530" stroke-width="0.75">Beep Lead</text>
<rect x="2592" y="950" width="206" height="138" fill="#ec4a41"/>
<g shape-rendering="auto" stroke="#3d0f0c" fill="none" stroke-width="2">
<circle cx="2609" cy="967" r="11.8"/>
<path d="M2603 964H2615L2609 973.5Z" fill="#3d0f0c" stroke="none"/>
</g>
<text x="2629.5" y="974" font-size="20" fill="#3d0f0c" textLength="43" lengthAdjust="spacingAndGlyphs" shape-rendering="auto" stroke="#3d0f0c" stroke-width="0.75">Bass</text>
<rect x="2592" y="1092" width="206" height="68" fill="#8a9a3a"/>
<g shape-rendering="auto" stroke="#1f2408" fill="none" stroke-width="2">
<circle cx="2609" cy="1109" r="11.8"/>
<path d="M2604 1105H2614M2604 1109H2614M2604 1113H2614"/>
</g>
<text x="2629.5" y="1116" font-size="20" fill="#1f2408" textLength="129.5" lengthAdjust="spacingAndGlyphs" shape-rendering="auto" stroke="#1f2408" stroke-width="0.75">Drums Group</text>
<rect x="2592" y="1164" width="206" height="34" fill="#968672"/>
<g shape-rendering="auto" stroke="#2a241c" fill="none" stroke-width="2">
<circle cx="2609" cy="1181" r="11.8"/>
<path d="M2605.5 1174.5L2616 1181L2605.5 1187.5Z" fill="#2a241c" stroke="none"/>
</g>
<text x="2629.5" y="1188" font-size="20" fill="#2a241c" textLength="150" lengthAdjust="spacingAndGlyphs" shape-rendering="auto" stroke="#2a241c" stroke-width="0.75">21 Bouncer Vox</text>
<rect x="2592" y="1202" width="206" height="34" fill="#968672"/>
<g shape-rendering="auto" stroke="#2a241c" fill="none" stroke-width="2">
<circle cx="2609" cy="1219" r="11.8"/>
<path d="M2605.5 1212.5L2616 1219L2605.5 1225.5Z" fill="#2a241c" stroke="none"/>
</g>
<text x="2629.5" y="1226" font-size="20" fill="#2a241c" textLength="71" lengthAdjust="spacingAndGlyphs" shape-rendering="auto" stroke="#2a241c" stroke-width="0.75">Strings</text>
<rect x="2592" y="1240" width="206" height="172" fill="#968672"/>
<g shape-rendering="auto" stroke="#2a241c" fill="none" stroke-width="2">
<circle cx="2609" cy="1257" r="11.8"/>
<path d="M2603 1254H2615L2609 1263.5Z" fill="#2a241c" stroke="none"/>
</g>
<text x="2629.5" y="1264" font-size="20" fill="#2a241c" textLength="52.5" lengthAdjust="spacingAndGlyphs" shape-rendering="auto" stroke="#2a241c" stroke-width="0.75">Voice</text>
<rect x="2592" y="1416" width="206" height="68" fill="#f3a87e"/>
<g shape-rendering="auto" stroke="#3a2415" fill="none" stroke-width="2">
<circle cx="2609" cy="1433" r="11.8"/>
<path d="M2604 1429H2614M2604 1433H2614M2604 1437H2614"/>
</g>
<text x="2629.5" y="1440" font-size="20" fill="#3a2415" textLength="91" lengthAdjust="spacingAndGlyphs" shape-rendering="auto" stroke="#3a2415" stroke-width="0.75">FX Group</text>
<rect x="2592" y="1488" width="206" height="34" fill="#c79e40"/>
<g shape-rendering="auto" stroke="#2d220a" fill="none" stroke-width="2">
<circle cx="2609" cy="1505" r="11.8"/>
<path d="M2605.5 1498.5L2616 1505L2605.5 1511.5Z" fill="#2d220a" stroke="none"/>
</g>
<text x="2629.5" y="1512" font-size="20" fill="#2d220a" textLength="97" lengthAdjust="spacingAndGlyphs" shape-rendering="auto" stroke="#2d220a" stroke-width="0.75">Ambiance</text>
<rect x="2592" y="1554" width="206" height="34" fill="#b9dee8"/>
<g shape-rendering="auto" stroke="#000000" fill="none" stroke-width="2">
<circle cx="2609" cy="1571" r="11.8"/>
<path d="M2605.5 1564.5L2616 1571L2605.5 1577.5Z" fill="#000000" stroke="none"/>
</g>
<text x="2632.5" y="1578" font-size="20" fill="#000000" textLength="47" lengthAdjust="spacingAndGlyphs" shape-rendering="auto" stroke="#000000" stroke-width="0.75">Main</text>
<rect x="2592" y="224" width="8" height="722" fill="#a598b5"/>
<rect x="2600" y="228" width="2" height="718" fill="#222222"/>
<rect x="2602" y="332" width="8" height="216" fill="#a598b5"/>
<rect x="2610" y="336" width="2" height="212" fill="#222222"/>
<rect x="2602" y="656" width="8" height="182" fill="#a598b5"/>
<rect x="2610" y="660" width="2" height="178" fill="#222222"/>
<rect x="2810" y="124" width="6" height="96" fill="#151515"/>
<rect x="2818" y="124" width="6" height="96" fill="#151515"/>
<rect x="2810" y="134" width="14" height="2" fill="#3a3a3a"/>
<rect x="2810" y="232" width="6" height="96" fill="#151515"/>
<rect x="2818" y="232" width="6" height="96" fill="#151515"/>
<rect x="2810" y="242" width="14" height="2" fill="#3a3a3a"/>
<rect x="2810" y="340" width="6" height="96" fill="#151515"/>
<rect x="2818" y="340" width="6" height="96" fill="#151515"/>
<rect x="2810" y="350" width="14" height="2" fill="#3a3a3a"/>
<rect x="2810" y="448" width="6" height="96" fill="#151515"/>
<rect x="2818" y="448" width="6" height="96" fill="#151515"/>
<rect x="2810" y="458" width="14" height="2" fill="#3a3a3a"/>
<rect x="2810" y="556" width="6" height="96" fill="#151515"/>
<rect x="2818" y="556" width="6" height="96" fill="#151515"/>
<rect x="2810" y="566" width="14" height="2" fill="#3a3a3a"/>
<rect x="2810" y="664" width="6" height="62" fill="#151515"/>
<rect x="2818" y="664" width="6" height="62" fill="#151515"/>
<rect x="2810" y="670" width="14" height="2" fill="#3a3a3a"/>
<rect x="2810" y="738" width="6" height="96" fill="#151515"/>
<rect x="2818" y="738" width="6" height="96" fill="#151515"/>
<rect x="2810" y="748" width="14" height="2" fill="#3a3a3a"/>
<rect x="2810" y="846" width="6" height="96" fill="#151515"/>
<rect x="2818" y="846" width="6" height="96" fill="#151515"/>
<rect x="2810" y="856" width="14" height="2" fill="#3a3a3a"/>
<rect x="2810" y="954" width="6" height="130" fill="#151515"/>
<rect x="2818" y="954" width="6" height="130" fill="#151515"/>
<rect x="2810" y="968" width="14" height="2" fill="#3a3a3a"/>
<rect x="2810" y="1096" width="6" height="60" fill="#151515"/>
<rect x="2818" y="1096" width="6" height="60" fill="#151515"/>
<rect x="2810" y="1102" width="14" height="2" fill="#3a3a3a"/>
<rect x="2810" y="1168" width="6" height="26" fill="#151515"/>
<rect x="2818" y="1168" width="6" height="26" fill="#151515"/>
<rect x="2810" y="1170" width="14" height="2" fill="#3a3a3a"/>
<rect x="2810" y="1206" width="6" height="26" fill="#151515"/>
<rect x="2818" y="1206" width="6" height="26" fill="#151515"/>
<rect x="2810" y="1208" width="14" height="2" fill="#3a3a3a"/>
<rect x="2810" y="1244" width="6" height="164" fill="#151515"/>
<rect x="2818" y="1244" width="6" height="164" fill="#151515"/>
<rect x="2810" y="1262" width="14" height="2" fill="#3a3a3a"/>
<rect x="2810" y="1420" width="6" height="60" fill="#151515"/>
<rect x="2818" y="1420" width="6" height="60" fill="#151515"/>
<rect x="2810" y="1426" width="14" height="2" fill="#3a3a3a"/>
<rect x="2810" y="1492" width="6" height="26" fill="#151515"/>
<rect x="2818" y="1492" width="6" height="26" fill="#151515"/>
<rect x="2810" y="1494" width="14" height="2" fill="#3a3a3a"/>
<rect x="2810" y="1558" width="6" height="26" fill="#151515"/>
<rect x="2818" y="1558" width="6" height="26" fill="#151515"/>
<rect x="2810" y="1560" width="14" height="2" fill="#4a4a4a"/>
<g shape-rendering="auto">
<rect x="2599" y="47" width="56" height="24" rx="12" fill="#1e1e1e" stroke="#171717" stroke-width="2"/>
<text x="2610.5" y="66" font-size="20" fill="#c9c9c9" textLength="32" lengthAdjust="spacingAndGlyphs" stroke="#c9c9c9" stroke-width="0.8">Set</text>
<rect x="2679" y="47" width="44" height="24" fill="#1e1e1e" stroke="#171717" stroke-width="2"/>
<rect x="2733" y="47" width="44" height="24" fill="#1e1e1e" stroke="#171717" stroke-width="2"/>
<path d="M2696.7 63.2L2705 55" stroke="#bdbdbd" stroke-width="2.6" fill="none"/><circle cx="2696.5" cy="63.4" r="3.1" fill="#bdbdbd"/><circle cx="2705.2" cy="54.8" r="3.1" fill="#bdbdbd"/>
<rect x="2748" y="58.3" width="14" height="7.8" fill="#bdbdbd"/><path d="M2751 58.5V56.5A4 4 0 0 1 2759 56.5V58.5" stroke="#bdbdbd" stroke-width="2.4" fill="none"/>
<circle cx="2611" cy="95" r="11.8" fill="#1e1e1e" stroke="#171717" stroke-width="2"/>
<circle cx="2643" cy="95" r="11.8" fill="#1e1e1e" stroke="#171717" stroke-width="2"/>
<path d="M2604 95L2612 89V101Z" fill="#858585"/><path d="M2611 95H2618" stroke="#858585" stroke-width="2.6"/>
<path d="M2650 95L2642 89V101Z" fill="#c9c9c9"/><path d="M2636 95H2643" stroke="#c9c9c9" stroke-width="2.6"/>
<rect x="2593" y="1601" width="28" height="24" fill="#f3b15d" stroke="#171717" stroke-width="2"/>
<path d="M2599.2 1610.3V1616M2603 1606.5V1619.7M2607 1604V1621.6M2611.1 1608.4V1617.8M2615.2 1610.3V1616" stroke="#0c0905" stroke-width="2" fill="none"/>
<rect x="2629" y="1601" width="68" height="24" fill="#1e1e1e" stroke="#171717" stroke-width="2"/>
<rect x="2630" y="1602" width="20" height="22" fill="#2f7d95"/>
<text x="2637" y="1620" font-size="20" fill="#c0c0c0" textLength="51" lengthAdjust="spacingAndGlyphs">1.00x</text>
<rect x="2731" y="1601" width="28" height="24" fill="#1e1e1e" stroke="#171717" stroke-width="2"/>
<rect x="2767" y="1601" width="28" height="24" fill="#1e1e1e" stroke="#171717" stroke-width="2"/>
<text x="2745" y="1620" font-size="20" fill="#c9c9c9" text-anchor="middle">H</text>
<text x="2781" y="1620" font-size="20" fill="#c9c9c9" text-anchor="middle">W</text>
</g>
<g shape-rendering="auto">
<rect x="0" y="0" width="2700" height="30" fill="#363636"/>
<rect x="38" y="2.8" width="622.3" height="1.6" fill="#75698a"/>
<rect x="660.3" y="2.8" width="311.1" height="1.8" fill="#9d90ad"/>
<rect x="1282.5" y="2.8" width="1400.1" height="1.8" fill="#9d90ad"/>
<rect x="1282.5" y="5" width="311.1" height="1.9" fill="#9d90ad"/>
<rect x="660.3" y="4.3" width="311.1" height="0.9" fill="#8d819b"/>
<rect x="1593.7" y="4.3" width="1089" height="0.9" fill="#8d819b"/>
<rect x="660.3" y="7.5" width="622.3" height="1.4" fill="#e04a42"/>
<rect x="1593.7" y="7.5" width="777.8" height="1.4" fill="#e04a42"/>
<rect x="38" y="9.3" width="155.6" height="1.5" fill="#2c4184"/>
<rect x="199.4" y="9.3" width="110.8" height="1.5" fill="#2c4184"/>
<rect x="660.3" y="9.3" width="155.6" height="1.5" fill="#2c4184"/>
<rect x="819.7" y="9.3" width="112.8" height="1.5" fill="#2c4184"/>
<rect x="971.4" y="9.3" width="272.2" height="1.5" fill="#2c4184"/>
<rect x="1555.7" y="9.3" width="4.9" height="1.5" fill="#2c4184"/>
<rect x="1564.5" y="9.3" width="5.8" height="1.5" fill="#2c4184"/>
<rect x="1574.2" y="9.3" width="155.6" height="1.5" fill="#2c4184"/>
<rect x="1749.2" y="9.3" width="544.5" height="1.5" fill="#2c4184"/>
<rect x="2371.5" y="9.3" width="311.1" height="1.5" fill="#2c4184"/>
<rect x="38" y="10.7" width="311.1" height="5.8" fill="#84a957"/>
<rect x="660.3" y="10.7" width="272.2" height="5.8" fill="#84a957"/>
<rect x="971.4" y="10.7" width="291.7" height="5.8" fill="#84a957"/>
<rect x="1749.2" y="10.7" width="933.4" height="5.8" fill="#84a957"/>
<rect x="38" y="14.2" width="311.1" height="2.4" fill="#7b8f3c"/>
<rect x="660.3" y="14.2" width="272.2" height="2.4" fill="#7b8f3c"/>
<rect x="971.4" y="14.2" width="291.7" height="2.4" fill="#7b8f3c"/>
<rect x="1749.2" y="14.2" width="933.4" height="2.4" fill="#7b8f3c"/>
<rect x="349.1" y="11" width="291.7" height="3.8" fill="#84a957"/>
<rect x="932.5" y="11" width="38.9" height="3.8" fill="#84a957"/>
<rect x="1282.5" y="11" width="272.2" height="3.8" fill="#84a957"/>
<rect x="640.8" y="15.6" width="19.4" height="1.8" fill="#6d7d33"/>
<rect x="1263.1" y="15.6" width="19.4" height="1.8" fill="#6d7d33"/>
<rect x="1720.1" y="15.6" width="29.2" height="1.8" fill="#6d7d33"/>
<rect x="1282.5" y="15.9" width="272.2" height="0.9" fill="#7b8f3c"/>
<path d="M46.5 17.8h7M85.4 17.8h7M124.3 17.8h7M163.2 17.8h7M202.1 17.8h7M241.0 17.8h7M279.9 17.8h7M318.7 17.8h7M668.8 17.8h7M707.7 17.8h7M746.6 17.8h7M785.4 17.8h7M824.3 17.8h7M863.2 17.8h7M902.1 17.8h7M941.0 17.8h7M979.9 17.8h7M1018.8 17.8h7M1057.7 17.8h7M1096.6 17.8h7M1135.5 17.8h7M1174.4 17.8h7M1213.3 17.8h7M1252.1 17.8h7M1291.0 17.8h7M1329.9 17.8h7M1368.8 17.8h7M1407.7 17.8h7M1446.6 17.8h7M1485.5 17.8h7M1524.4 17.8h7M1563.3 17.8h7M1602.2 17.8h7M1641.1 17.8h7M1679.9 17.8h7M1718.8 17.8h7M1757.7 17.8h7M1796.6 17.8h7M1835.5 17.8h7M1874.4 17.8h7M1913.3 17.8h7M1952.2 17.8h7M1991.1 17.8h7M2030.0 17.8h7M2068.9 17.8h7M2107.8 17.8h7M2146.6 17.8h7M2185.5 17.8h7M2224.4 17.8h7M2263.3 17.8h7M2302.2 17.8h7M2341.1 17.8h7M2380.0 17.8h7M2418.9 17.8h7M2457.8 17.8h7M2496.7 17.8h7M2535.6 17.8h7M2574.5 17.8h7M2613.3 17.8h7M2652.2 17.8h7" stroke="#86735f" stroke-width="1.6" fill="none"/>
<rect x="971.4" y="18.2" width="311.1" height="1" fill="#8a7966"/>
<rect x="1438.1" y="18.2" width="933.4" height="1" fill="#8a7966"/>
<rect x="504.7" y="19" width="777.8" height="1" fill="#7a6a58"/>
<rect x="1749.2" y="19" width="622.3" height="1" fill="#7a6a58"/>
<rect x="660.3" y="19.95" width="8.8" height="1" fill="#e39c74"/>
<rect x="932.5" y="19.95" width="38.9" height="1" fill="#e39c74"/>
<rect x="310.2" y="20.7" width="38.9" height="1" fill="#e39c74"/>
<rect x="621.4" y="20.7" width="38.9" height="1" fill="#e39c74"/>
<rect x="485.3" y="21.45" width="155.6" height="1" fill="#e39c74"/>
<rect x="660.3" y="22.2" width="77.8" height="1" fill="#e39c74"/>
<rect x="971.4" y="22.2" width="77.8" height="1" fill="#e39c74"/>
<rect x="349.1" y="22.95" width="155.6" height="1" fill="#e39c74"/>
<rect x="504.7" y="23.7" width="155.6" height="1" fill="#e39c74"/>
<rect x="1554.8" y="19.95" width="38.9" height="1" fill="#e39c74"/>
<rect x="1749.2" y="19.95" width="8.8" height="1" fill="#e39c74"/>
<rect x="1243.6" y="20.7" width="38.9" height="1" fill="#e39c74"/>
<rect x="1554.8" y="20.7" width="38.9" height="1" fill="#e39c74"/>
<rect x="1710.3" y="20.7" width="38.9" height="1" fill="#e39c74"/>
<rect x="1418.7" y="21.45" width="155.6" height="1" fill="#e39c74"/>
<rect x="1593.7" y="22.2" width="77.8" height="1" fill="#e39c74"/>
<rect x="1749.2" y="22.2" width="77.8" height="1" fill="#e39c74"/>
<rect x="1282.5" y="22.95" width="155.6" height="1" fill="#e39c74"/>
<rect x="1438.1" y="23.7" width="155.6" height="1" fill="#e39c74"/>
<rect x="2021.5" y="19.95" width="38.9" height="1" fill="#e39c74"/>
<rect x="2332.6" y="20.7" width="38.9" height="1" fill="#e39c74"/>
<rect x="2371.5" y="22.2" width="77.8" height="1" fill="#e39c74"/>
<rect x="2371.5" y="22.95" width="155.6" height="1" fill="#e39c74"/>
<rect x="38" y="24.6" width="622.3" height="1.3" fill="#c9993a"/>
<rect x="971.4" y="24.6" width="777.8" height="1.3" fill="#c9993a"/>
<rect x="2371.5" y="24.6" width="311.1" height="1.3" fill="#c9993a"/>
<rect x="659.5" y="2" width="1.6" height="24" fill="#8c8c8c"/>
<rect x="970.6" y="2" width="1.6" height="24" fill="#8c8c8c"/>
<rect x="1281.7" y="2" width="1.6" height="24" fill="#8c8c8c"/>
<rect x="1592.9" y="2" width="1.6" height="24" fill="#8c8c8c"/>
<rect x="1748.4" y="2" width="1.6" height="24" fill="#8c8c8c"/>
<rect x="2059.6" y="2" width="1.6" height="24" fill="#8c8c8c"/>
<path d="M115.8 9.5V16.5M193.6 9.5V16.5M271.4 9.5V16.5M349.1 9.5V16.5M426.9 9.5V16.5M504.7 9.5V16.5M582.5 9.5V16.5M738.1 9.5V16.5M815.8 9.5V16.5M893.6 9.5V16.5M1049.2 9.5V16.5M1127.0 9.5V16.5M1204.8 9.5V16.5M1360.3 9.5V16.5M1438.1 9.5V16.5M1515.9 9.5V16.5M1827.0 9.5V16.5M1904.8 9.5V16.5M1982.6 9.5V16.5M2060.4 9.5V16.5M2138.1 9.5V16.5M2215.9 9.5V16.5M2293.7 9.5V16.5M2371.5 9.5V16.5M2449.3 9.5V16.5M2527.1 9.5V16.5M2604.8 9.5V16.5" stroke="#3d5a2c" stroke-width="1.4" fill="none" opacity="0.8"/>
<rect x="36" y="2" width="2" height="24" fill="#7c7c7c"/>
<path d="M2700 1H7Q1 1 1 7V21Q1 28 8 28H2690" stroke="#7c7c7c" stroke-width="2.4" fill="none"/>
<rect x="0" y="26" width="2692" height="4" fill="#7c7c7c"/>
<path d="M2686 2.5H2690Q2697.5 2.5 2697.5 10V19Q2697.5 27.5 2689 27.5H2686" stroke="#7c7c7c" stroke-width="5" fill="none"/>
<rect x="2688" y="2" width="2" height="24" fill="#7c7c7c"/>
<path d="M0 0H6Q0 0 0 6Z" fill="#2a2a2a"/>
</g>
<g shape-rendering="auto">
<rect x="0" y="0" width="2848" height="2" fill="#787878"/>
<rect x="2700" y="26" width="144" height="4" fill="#222222"/>
<path d="M2820 0H2839Q2848 0 2848 9V1625Q2848 1634 2839 1634H2838Q2844 1632 2844 1624V10Q2844 2 2836 2H2820Z" fill="#787878"/>
<path d="M2839 0H2848V9Q2848 0 2839 0Z" fill="#2a2a2a"/>
<path d="M2848 1626V1634H2842Q2848 1632 2848 1626Z" fill="#2a2a2a"/>
<path d="M-0.5 1625Q0.5 1632 7 1635" stroke="#787878" stroke-width="2.2" fill="none"/>
<path d="M0 1631V1634H3Q0.5 1633.5 0 1631Z" fill="#2a2a2a"/>
</g>
</svg></body></html>
